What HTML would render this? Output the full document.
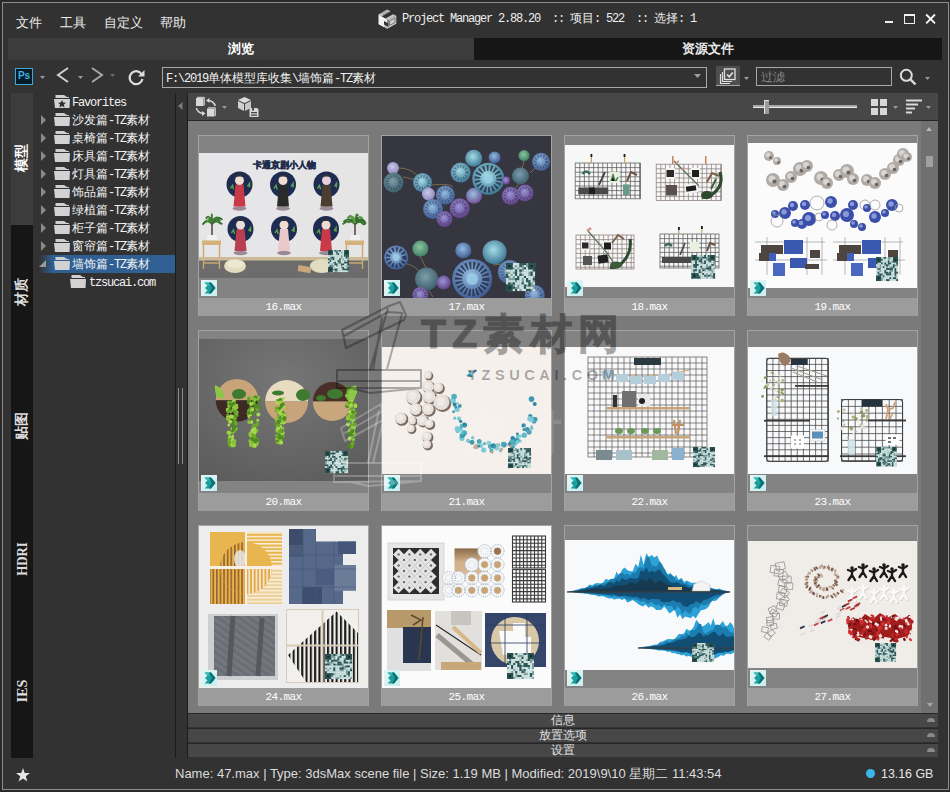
<!DOCTYPE html><html><head><meta charset="utf-8"><style>
*{margin:0;padding:0;box-sizing:border-box}
html,body{width:950px;height:792px;overflow:hidden;background:#2a2a2a}
body{position:relative;font-family:"Liberation Sans",sans-serif}
div{position:absolute}
.m{font-family:"Liberation Mono",monospace;font-size:12px;letter-spacing:-1.2px;white-space:nowrap;line-height:14px}
.m .cj{letter-spacing:0;font-family:"Liberation Sans",sans-serif}
.t{white-space:nowrap}
svg{position:absolute;overflow:visible}
</style></head><body>
<div style="left:2px;top:2px;width:947px;height:788px;border:1px solid #8e8e8e;background:#323232"></div>
<div class="t" style="left:16px;top:14px;width:60px;height:18px;color:#ececec;font-size:13px;line-height:18px">文件</div>
<div class="t" style="left:60px;top:14px;width:60px;height:18px;color:#ececec;font-size:13px;line-height:18px">工具</div>
<div class="t" style="left:104px;top:14px;width:60px;height:18px;color:#ececec;font-size:13px;line-height:18px">自定义</div>
<div class="t" style="left:160px;top:14px;width:60px;height:18px;color:#ececec;font-size:13px;line-height:18px">帮助</div>
<svg style="left:378px;top:9px" width="20" height="20" viewBox="0 0 20 20">
<path d="M0.5 5.5 L9.2 0.5 L12.5 2.2 L3.8 7.3 Z" fill="#d4d4d4"/>
<path d="M3 5.2 L10 1.3 M4.5 6.2 L11.3 2.3" stroke="#777" stroke-width="0.7"/>
<path d="M7.5 9.5 L15 5.2 L18.3 6.8 L10.5 11.3 Z" fill="#c4c4c4"/>
<path d="M0.5 5.5 L9.5 10.7 L9.5 14 L6 12 L6 18.3 L0.5 15.3 Z" fill="#f2f2f2"/>
<path d="M10.5 11.3 L18.3 6.8 L18.3 14.8 L9.2 19.8 L6 18 L6 15.5 L10.5 18 Z" fill="#cfcfcf"/>
<path d="M11.5 12 L17 9 L17 13.5 L11.5 16.5 Z" fill="none" stroke="#666" stroke-width="0.9"/>
<path d="M7.2 16.5 L10 18" stroke="#777" stroke-width="0.7"/>
</svg>
<div class="m" style="left:402px;top:11px;width:400px;height:14px;color:#eeeeee">Project Manager 2.88.20 &nbsp;:: <span class="cj">项目</span>: 522 &nbsp;:: <span class="cj">选择</span>: 1</div>
<div style="left:885px;top:21px;width:8px;height:2px;background:#f0f0f0"></div>
<div style="left:904px;top:14px;width:11px;height:9.5px;border:1.6px solid #f0f0f0;border-top-width:2.6px"></div>
<svg style="left:925px;top:14px" width="11" height="10" viewBox="0 0 11 10"><path d="M1.2 0.5 L10 9.3 M10 0.5 L1.2 9.3" stroke="#f4f4f4" stroke-width="1.9"/></svg>
<div class="t" style="left:8px;top:38px;width:466px;height:22px;background:#3c3c3c;color:#fff;font-weight:bold;font-size:13px;line-height:22px;text-align:center">浏览</div>
<div class="t" style="left:474px;top:38px;width:468px;height:22px;background:#161616;color:#e8e8e8;font-weight:bold;font-size:13px;line-height:22px;text-align:center">资源文件</div>
<div class="t" style="left:15px;top:68px;width:18px;height:17px;border:1.5px solid #3aaad4;background:#061c2a;color:#40b2e0;font-size:10px;font-weight:bold;line-height:14px;text-align:center">Ps</div>
<svg style="left:40px;top:76px" width="5" height="3" viewBox="0 0 5 3"><path d="M0 0 L5 0 L2.5 3 Z" fill="#9a9a9a"/></svg>
<svg style="left:56px;top:67px" width="13" height="16" viewBox="0 0 13 16"><path d="M12 1 L2 8 L12 15" fill="none" stroke="#d0d0d0" stroke-width="2"/></svg>
<svg style="left:78px;top:76px" width="5" height="3" viewBox="0 0 5 3"><path d="M0 0 L5 0 L2.5 3 Z" fill="#9a9a9a"/></svg>
<svg style="left:91px;top:67px" width="13" height="16" viewBox="0 0 13 16"><path d="M1 1 L11 8 L1 15" fill="none" stroke="#a8a8a8" stroke-width="2"/></svg>
<svg style="left:110px;top:74px" width="5" height="3" viewBox="0 0 5 3"><path d="M0 0 L5 0 L2.5 3 Z" fill="#6a6a6a"/></svg>
<svg style="left:128px;top:69px" width="17" height="17" viewBox="0 0 17 17"><path d="M13.5 5 A6.5 6.5 0 1 0 14.5 10" fill="none" stroke="#dcdcdc" stroke-width="2.2"/><path d="M16.5 1 L16.5 7.5 L10 7.5 Z" fill="#dcdcdc"/></svg>
<div style="left:162px;top:67px;width:545px;height:21px;border:1px solid #a8a8a8"></div>
<div class="m" style="left:166px;top:71px;width:400px;height:14px;color:#f0f0f0">F:\2019<span class="cj">单体模型库收集</span>\<span class="cj">墙饰篇</span>-TZ<span class="cj">素材</span></div>
<svg style="left:694px;top:74px" width="7" height="4" viewBox="0 0 7 4"><path d="M0 0 L7 0 L3.5 4 Z" fill="#a0a0a0"/></svg>
<div style="left:716px;top:66px;width:24px;height:20px;background:#4e4e4e;border-bottom:1.5px solid #a8a8a8"></div>
<svg style="left:718px;top:68px" width="20" height="17" viewBox="0 0 20 17">
<rect x="6.5" y="1" width="10.5" height="10.5" fill="none" stroke="#e0e0e0" stroke-width="1.3"/>
<path d="M9 6.5 L11.2 8.7 L14.8 4.5" fill="none" stroke="#e0e0e0" stroke-width="1.7"/>
<path d="M4.5 4 L4.5 13.5 L14 13.5" fill="none" stroke="#e0e0e0" stroke-width="1.2"/>
<path d="M2.5 6 L2.5 15.5 L12 15.5" fill="none" stroke="#e0e0e0" stroke-width="1.2"/>
</svg>
<svg style="left:744px;top:77px" width="5" height="3" viewBox="0 0 5 3"><path d="M0 0 L5 0 L2.5 3 Z" fill="#9a9a9a"/></svg>
<div style="left:756px;top:67px;width:136px;height:19px;border:1px solid #a8a8a8"></div>
<div class="t" style="left:761px;top:69px;width:60px;height:16px;color:#8a8a8a;font-size:12px;line-height:16px">过滤</div>
<svg style="left:899px;top:68px" width="18" height="18" viewBox="0 0 18 18"><circle cx="7.3" cy="7.3" r="5.5" fill="none" stroke="#dcdcdc" stroke-width="2"/><path d="M11.2 11.2 L16.5 16.5" stroke="#dcdcdc" stroke-width="2.4"/></svg>
<svg style="left:925px;top:77px" width="5" height="3" viewBox="0 0 5 3"><path d="M0 0 L5 0 L2.5 3 Z" fill="#9a9a9a"/></svg>
<div style="left:11px;top:93px;width:22px;height:132px;background:#3c3c3c"></div>
<div style="left:11px;top:225px;width:22px;height:533px;background:#161616"></div>
<div class="t" style="left:-18px;top:150px;width:80px;height:16px;line-height:16px;text-align:center;transform:rotate(-90deg);color:#fff;font-size:13.5px;font-weight:bold">模型</div>
<div class="t" style="left:-18px;top:284px;width:80px;height:16px;line-height:16px;text-align:center;transform:rotate(-90deg);color:#ddd;font-size:13.5px;font-weight:bold">材质</div>
<div class="t" style="left:-18px;top:417.5px;width:80px;height:16px;line-height:16px;text-align:center;transform:rotate(-90deg);color:#ddd;font-size:13.5px;font-weight:bold">贴图</div>
<div class="t" style="left:-18px;top:550.5px;width:80px;height:16px;line-height:16px;text-align:center;transform:rotate(-90deg);color:#ddd;font-size:15px;font-weight:bold;font-family:Liberation Serif;transform:rotate(-90deg) scaleX(0.86)">HDRI</div>
<div class="t" style="left:-18px;top:683px;width:80px;height:16px;line-height:16px;text-align:center;transform:rotate(-90deg);color:#ddd;font-size:15px;font-weight:bold;font-family:Liberation Serif;transform:rotate(-90deg) scaleX(0.95)">IES</div>
<div style="left:175px;top:93px;width:1px;height:665px;background:#1c1c1c"></div>
<div style="left:187px;top:93px;width:1px;height:665px;background:#1c1c1c"></div>
<div style="left:178px;top:388px;width:1px;height:76px;background:#8a8a8a"></div>
<div style="left:182px;top:388px;width:1px;height:76px;background:#8a8a8a"></div>
<svg style="left:178px;top:102px" width="5" height="8" viewBox="0 0 5 8"><path d="M4.5 0 L0 4 L4.5 8 Z" fill="#7a7a7a"/></svg>
<div style="left:39px;top:255px;width:136px;height:18px;background:linear-gradient(90deg,rgba(47,95,147,0) 0px,#2f5f93 14px,#2f5f93 100%)"></div>
<svg style="left:54px;top:95px" width="17" height="14" viewBox="0 0 17 14">
<path d="M1.5 0 L10 0 L13 2 L15 2 L15 3 L1.5 3 Z" fill="#cfcfcf"/>
<path d="M0 4 L16 4 L15.5 13 L1 13 Z" fill="#d2d2d2"/><path d="M8 5 L9.2 7.6 L12 7.8 L9.9 9.6 L10.6 12.4 L8 10.9 L5.4 12.4 L6.1 9.6 L4 7.8 L6.8 7.6 Z" fill="#2e2e2e"/></svg>
<div class="m" style="left:72px;top:96px;width:100px;height:14px;color:#f2f2f2">Favorites</div>
<svg style="left:41px;top:115px" width="5" height="10" viewBox="0 0 5 10"><path d="M0 0 L5 5 L0 10 Z" fill="#8a8a8a"/></svg>
<svg style="left:54px;top:113px" width="17" height="14" viewBox="0 0 17 14">
<path d="M1.5 0 L10 0 L13 2 L15 2 L15 3 L1.5 3 Z" fill="#cfcfcf"/>
<path d="M0 4 L16 4 L15.5 13 L1 13 Z" fill="#d2d2d2"/></svg>
<div class="m" style="left:72px;top:113px;width:110px;height:14px;color:#f2f2f2"><span class="cj">沙发篇</span>-TZ<span class="cj">素材</span></div>
<svg style="left:41px;top:133px" width="5" height="10" viewBox="0 0 5 10"><path d="M0 0 L5 5 L0 10 Z" fill="#8a8a8a"/></svg>
<svg style="left:54px;top:131px" width="17" height="14" viewBox="0 0 17 14">
<path d="M1.5 0 L10 0 L13 2 L15 2 L15 3 L1.5 3 Z" fill="#cfcfcf"/>
<path d="M0 4 L16 4 L15.5 13 L1 13 Z" fill="#d2d2d2"/></svg>
<div class="m" style="left:72px;top:131px;width:110px;height:14px;color:#f2f2f2"><span class="cj">桌椅篇</span>-TZ<span class="cj">素材</span></div>
<svg style="left:41px;top:151px" width="5" height="10" viewBox="0 0 5 10"><path d="M0 0 L5 5 L0 10 Z" fill="#8a8a8a"/></svg>
<svg style="left:54px;top:149px" width="17" height="14" viewBox="0 0 17 14">
<path d="M1.5 0 L10 0 L13 2 L15 2 L15 3 L1.5 3 Z" fill="#cfcfcf"/>
<path d="M0 4 L16 4 L15.5 13 L1 13 Z" fill="#d2d2d2"/></svg>
<div class="m" style="left:72px;top:149px;width:110px;height:14px;color:#f2f2f2"><span class="cj">床具篇</span>-TZ<span class="cj">素材</span></div>
<svg style="left:41px;top:169px" width="5" height="10" viewBox="0 0 5 10"><path d="M0 0 L5 5 L0 10 Z" fill="#8a8a8a"/></svg>
<svg style="left:54px;top:167px" width="17" height="14" viewBox="0 0 17 14">
<path d="M1.5 0 L10 0 L13 2 L15 2 L15 3 L1.5 3 Z" fill="#cfcfcf"/>
<path d="M0 4 L16 4 L15.5 13 L1 13 Z" fill="#d2d2d2"/></svg>
<div class="m" style="left:72px;top:167px;width:110px;height:14px;color:#f2f2f2"><span class="cj">灯具篇</span>-TZ<span class="cj">素材</span></div>
<svg style="left:41px;top:187px" width="5" height="10" viewBox="0 0 5 10"><path d="M0 0 L5 5 L0 10 Z" fill="#8a8a8a"/></svg>
<svg style="left:54px;top:185px" width="17" height="14" viewBox="0 0 17 14">
<path d="M1.5 0 L10 0 L13 2 L15 2 L15 3 L1.5 3 Z" fill="#cfcfcf"/>
<path d="M0 4 L16 4 L15.5 13 L1 13 Z" fill="#d2d2d2"/></svg>
<div class="m" style="left:72px;top:185px;width:110px;height:14px;color:#f2f2f2"><span class="cj">饰品篇</span>-TZ<span class="cj">素材</span></div>
<svg style="left:41px;top:205px" width="5" height="10" viewBox="0 0 5 10"><path d="M0 0 L5 5 L0 10 Z" fill="#8a8a8a"/></svg>
<svg style="left:54px;top:203px" width="17" height="14" viewBox="0 0 17 14">
<path d="M1.5 0 L10 0 L13 2 L15 2 L15 3 L1.5 3 Z" fill="#cfcfcf"/>
<path d="M0 4 L16 4 L15.5 13 L1 13 Z" fill="#d2d2d2"/></svg>
<div class="m" style="left:72px;top:203px;width:110px;height:14px;color:#f2f2f2"><span class="cj">绿植篇</span>-TZ<span class="cj">素材</span></div>
<svg style="left:41px;top:223px" width="5" height="10" viewBox="0 0 5 10"><path d="M0 0 L5 5 L0 10 Z" fill="#8a8a8a"/></svg>
<svg style="left:54px;top:221px" width="17" height="14" viewBox="0 0 17 14">
<path d="M1.5 0 L10 0 L13 2 L15 2 L15 3 L1.5 3 Z" fill="#cfcfcf"/>
<path d="M0 4 L16 4 L15.5 13 L1 13 Z" fill="#d2d2d2"/></svg>
<div class="m" style="left:72px;top:221px;width:110px;height:14px;color:#f2f2f2"><span class="cj">柜子篇</span>-TZ<span class="cj">素材</span></div>
<svg style="left:41px;top:241px" width="5" height="10" viewBox="0 0 5 10"><path d="M0 0 L5 5 L0 10 Z" fill="#8a8a8a"/></svg>
<svg style="left:54px;top:239px" width="17" height="14" viewBox="0 0 17 14">
<path d="M1.5 0 L10 0 L13 2 L15 2 L15 3 L1.5 3 Z" fill="#cfcfcf"/>
<path d="M0 4 L16 4 L15.5 13 L1 13 Z" fill="#d2d2d2"/></svg>
<div class="m" style="left:72px;top:239px;width:110px;height:14px;color:#f2f2f2"><span class="cj">窗帘篇</span>-TZ<span class="cj">素材</span></div>
<svg style="left:39px;top:260px" width="7" height="7" viewBox="0 0 7 7"><path d="M7 0 L7 7 L0 7 Z" fill="#9a9a9a"/></svg>
<svg style="left:54px;top:257px" width="17" height="14" viewBox="0 0 17 14">
<path d="M1.5 0 L10 0 L13 2 L15 2 L15 3 L1.5 3 Z" fill="#cfcfcf"/>
<path d="M0 4 L16 4 L15.5 13 L1 13 Z" fill="#d2d2d2"/></svg>
<div class="m" style="left:72px;top:257px;width:110px;height:14px;color:#f2f2f2"><span class="cj">墙饰篇</span>-TZ<span class="cj">素材</span></div>
<svg style="left:70px;top:275px" width="17" height="14" viewBox="0 0 17 14">
<path d="M1.5 0 L10 0 L13 2 L15 2 L15 3 L1.5 3 Z" fill="#cfcfcf"/>
<path d="M0 4 L16 4 L15.5 13 L1 13 Z" fill="#d2d2d2"/></svg>
<div class="m" style="left:89px;top:276px;width:100px;height:14px;color:#f2f2f2">tzsucai.com</div>
<div style="left:188px;top:93px;width:750px;height:28px;background:#474747;border-bottom:1px solid #262626"></div>
<svg style="left:195px;top:96px" width="22" height="22" viewBox="0 0 22 22">
<rect x="1" y="2" width="7.5" height="8" fill="#d8d8d8"/><path d="M2 1.3 L9.3 1.3 L9.3 9.5" fill="none" stroke="#d8d8d8" stroke-width="1"/>
<rect x="12" y="12.5" width="7.5" height="8" fill="#d8d8d8"/><path d="M13 11.8 L20.3 11.8 L20.3 20" fill="none" stroke="#d8d8d8" stroke-width="1"/>
<path d="M20 10 A7 6 0 0 0 13 4.5" fill="none" stroke="#d8d8d8" stroke-width="1.6"/><path d="M11 4.5 L14.5 2 L14.5 7 Z" fill="#d8d8d8"/>
<path d="M1.5 12 A7 6 0 0 0 8.5 17.5" fill="none" stroke="#d8d8d8" stroke-width="1.6"/><path d="M10.5 17.5 L7 15 L7 20 Z" fill="#d8d8d8"/>
</svg>
<svg style="left:222px;top:106px" width="5" height="3" viewBox="0 0 5 3"><path d="M0 0 L5 0 L2.5 3 Z" fill="#9a9a9a"/></svg>
<svg style="left:237px;top:96px" width="22" height="22" viewBox="0 0 22 22">
<path d="M7.5 1 L14 4 L7.5 7 L1 4 Z" fill="#dcdcdc"/>
<path d="M1 5 L7 8 L7 15 L1 12 Z" fill="#d0d0d0"/>
<path d="M8 8 L14 5 L14 12 L8 15 Z" fill="#c8c8c8"/>
<path d="M12.5 12 L20 12 L21.5 13.5 L21.5 21 L12.5 21 Z" fill="#d8d8d8"/>
<rect x="14" y="16" width="6" height="1.3" fill="#474747"/><rect x="14" y="18.5" width="6" height="1.3" fill="#474747"/>
<rect x="15" y="12" width="2" height="2.5" fill="#474747"/>
</svg>
<div style="left:753px;top:105px;width:104px;height:2px;background:#a8a8a8"></div>
<div style="left:753px;top:107px;width:104px;height:1px;background:#eeeeee"></div>
<div style="left:764px;top:100px;width:5px;height:14px;background:#9a9a9a;border-left:1px solid #e0e0e0;border-top:1px solid #e0e0e0"></div>
<svg style="left:871px;top:99px" width="16" height="16" viewBox="0 0 16 16"><rect x="0" y="0" width="7" height="7" fill="#d8d8d8"/><rect x="9" y="0" width="7" height="7" fill="#d8d8d8"/><rect x="0" y="9" width="7" height="7" fill="#d8d8d8"/><rect x="9" y="9" width="7" height="7" fill="#d8d8d8"/></svg>
<svg style="left:893px;top:106px" width="5" height="3" viewBox="0 0 5 3"><path d="M0 0 L5 0 L2.5 3 Z" fill="#9a9a9a"/></svg>
<svg style="left:906px;top:99px" width="16" height="15" viewBox="0 0 16 15"><rect x="0" y="0.5" width="16" height="2" fill="#d8d8d8"/><rect x="0" y="4.5" width="12" height="2" fill="#d8d8d8"/><rect x="0" y="8.5" width="9" height="2" fill="#d8d8d8"/><rect x="0" y="12.5" width="6" height="2" fill="#d8d8d8"/></svg>
<svg style="left:926px;top:106px" width="5" height="3" viewBox="0 0 5 3"><path d="M0 0 L5 0 L2.5 3 Z" fill="#9a9a9a"/></svg>
<div style="left:188px;top:121px;width:750px;height:592px;background:#7a7a7a"></div>
<div style="left:921px;top:121px;width:17px;height:592px;background:#707070"></div>
<svg style="left:926px;top:127px" width="6" height="4" viewBox="0 0 6 4"><path d="M0 4 L3 0 L6 4 Z" fill="#b8b8b8"/></svg>
<div style="left:926px;top:156px;width:7px;height:11px;background:#a0a0a0"></div>
<svg style="left:927px;top:703px" width="6" height="4" viewBox="0 0 6 4"><path d="M0 0 L6 0 L3 4 Z" fill="#a8a8a8"/></svg>
<div style="left:198px;top:135px;width:171px;height:181px;background:#838383;border:1px solid #a3a3a3;border-bottom:none;overflow:hidden"><svg style="left:0;top:0" width="169" height="162" viewBox="1 1 169 162"><rect x="1" y="18" width="170" height="106" fill="#e6e6e8"/><rect x="100" y="18" width="70" height="106" fill="#e4e4e4" opacity="0.6"/><rect x="1" y="122" width="170" height="2" fill="#b49a78"/><rect x="1" y="124" width="170" height="19" fill="#6c6c6c"/><text x="86" y="33" font-size="9" font-weight="bold" fill="#1f2c4c" stroke="#1f2c4c" stroke-width="0.5" text-anchor="middle" font-family="Liberation Sans">卡通京剧小人物</text><circle cx="41.5" cy="49.5" r="13" fill="#1e2c52"/><ellipse cx="41.5" cy="73.5" rx="7" ry="2.2" fill="#9a8a98"/><path d="M37.5 49.5 L45.5 49.5 L47.5 71.5 L35.5 71.5 Z" fill="#c83a48"/><circle cx="41.5" cy="45.5" r="4.5" fill="#f0dcd0"/><path d="M37.5 41.5 Q41.5 37.5 45.5 41.5" fill="#333"/><path d="M32.5 53.5 l2 -3 l1 4 M49.5 51.5 l2 -3 l0 4" stroke="#5aa050" stroke-width="1.5"/><circle cx="85" cy="49.5" r="13" fill="#1e2c52"/><ellipse cx="85" cy="73.5" rx="7" ry="2.2" fill="#9a8a98"/><path d="M81 49.5 L89 49.5 L91 71.5 L79 71.5 Z" fill="#2a2a2a"/><circle cx="85" cy="45.5" r="4.5" fill="#f0dcd0"/><path d="M81 41.5 Q85 37.5 89 41.5" fill="#333"/><path d="M76 53.5 l2 -3 l1 4 M93 51.5 l2 -3 l0 4" stroke="#5aa050" stroke-width="1.5"/><circle cx="128.5" cy="49.5" r="13" fill="#1e2c52"/><ellipse cx="128.5" cy="73.5" rx="7" ry="2.2" fill="#9a8a98"/><path d="M124.5 49.5 L132.5 49.5 L134.5 71.5 L122.5 71.5 Z" fill="#4a3e30"/><circle cx="128.5" cy="45.5" r="4.5" fill="#e8d0d8"/><path d="M124.5 41.5 Q128.5 37.5 132.5 41.5" fill="#333"/><path d="M119.5 53.5 l2 -3 l1 4 M136.5 51.5 l2 -3 l0 4" stroke="#5aa050" stroke-width="1.5"/><circle cx="42.5" cy="94" r="13" fill="#1e2c52"/><ellipse cx="42.5" cy="118" rx="7" ry="2.2" fill="#9a8a98"/><path d="M38.5 94 L46.5 94 L48.5 116 L36.5 116 Z" fill="#b84050"/><circle cx="42.5" cy="90" r="4.5" fill="#e8e0d8"/><path d="M38.5 86 Q42.5 82 46.5 86" fill="#333"/><path d="M33.5 98 l2 -3 l1 4 M50.5 96 l2 -3 l0 4" stroke="#5aa050" stroke-width="1.5"/><circle cx="86" cy="94" r="13" fill="#1e2c52"/><ellipse cx="86" cy="118" rx="7" ry="2.2" fill="#9a8a98"/><path d="M82 94 L90 94 L92 116 L80 116 Z" fill="#e8c8c8"/><circle cx="86" cy="90" r="4.5" fill="#f0dcd0"/><path d="M82 86 Q86 82 90 86" fill="#333"/><path d="M77 98 l2 -3 l1 4 M94 96 l2 -3 l0 4" stroke="#5aa050" stroke-width="1.5"/><circle cx="128" cy="94" r="13" fill="#1e2c52"/><ellipse cx="128" cy="118" rx="7" ry="2.2" fill="#9a8a98"/><path d="M124 94 L132 94 L134 116 L122 116 Z" fill="#c83a48"/><circle cx="128" cy="90" r="4.5" fill="#f0dcd0"/><path d="M124 86 Q128 82 132 86" fill="#333"/><path d="M119 98 l2 -3 l1 4 M136 96 l2 -3 l0 4" stroke="#5aa050" stroke-width="1.5"/><path d="M14 89 Q9.9 82.3 5.8 88.3" stroke="#3e7a34" stroke-width="1.8" fill="none"/><path d="M14 89 Q18.4 83.1 22.7 89.1" stroke="#2e6a2a" stroke-width="1.8" fill="none"/><path d="M14 89 Q13.9 75.3 13.7 81.3" stroke="#3e7a34" stroke-width="1.8" fill="none"/><path d="M14 89 Q17.2 79.6 20.4 85.6" stroke="#5a9a48" stroke-width="1.8" fill="none"/><path d="M14 89 Q17.6 81.4 21.3 87.4" stroke="#3e7a34" stroke-width="1.8" fill="none"/><path d="M14 89 Q9.3 83.6 4.5 89.6" stroke="#2e6a2a" stroke-width="1.8" fill="none"/><path d="M14 89 Q12.4 79.3 10.8 85.3" stroke="#5a9a48" stroke-width="1.8" fill="none"/><path d="M14 89 Q19.2 78.8 24.3 84.8" stroke="#2e6a2a" stroke-width="1.8" fill="none"/><path d="M14 89 Q15.7 81.0 17.4 87.0" stroke="#2e6a2a" stroke-width="1.8" fill="none"/><path d="M14 89 Q16.5 80.0 19.0 86.0" stroke="#5a9a48" stroke-width="1.8" fill="none"/><path d="M14 89 Q17.6 78.6 21.3 84.6" stroke="#3e7a34" stroke-width="1.8" fill="none"/><path d="M14 89 Q10.9 81.8 7.8 87.8" stroke="#5a9a48" stroke-width="1.8" fill="none"/><path d="M14 89 Q11.0 77.8 8.0 83.8" stroke="#3e7a34" stroke-width="1.8" fill="none"/><path d="M14 89 Q12.7 79.1 11.4 85.1" stroke="#3e7a34" stroke-width="1.8" fill="none"/><path d="M14 89 Q19.1 83.4 24.3 89.4" stroke="#3e7a34" stroke-width="1.8" fill="none"/><path d="M14 89 Q18.1 80.0 22.2 86.0" stroke="#3e7a34" stroke-width="1.8" fill="none"/><rect x="13.2" y="88" width="1.6" height="12" fill="#5a5040"/><rect x="9" y="100" width="10" height="5.5" fill="#f0f0f0"/><rect x="4" y="105.5" width="19" height="4.5" fill="#d4b27a"/><path d="M5.5 110 L5.5 134 M21.5 110 L21.5 134 M5.5 128 L21.5 128" stroke="#caa870" stroke-width="1.4"/><path d="M157 89 Q160.9 78.1 164.9 84.1" stroke="#5a9a48" stroke-width="1.8" fill="none"/><path d="M157 89 Q157.6 79.4 158.2 85.4" stroke="#2e6a2a" stroke-width="1.8" fill="none"/><path d="M157 89 Q153.4 77.3 149.8 83.3" stroke="#2e6a2a" stroke-width="1.8" fill="none"/><path d="M157 89 Q158.5 78.6 159.9 84.6" stroke="#2e6a2a" stroke-width="1.8" fill="none"/><path d="M157 89 Q161.3 83.7 165.6 89.7" stroke="#3e7a34" stroke-width="1.8" fill="none"/><path d="M157 89 Q151.3 81.0 145.5 87.0" stroke="#2e6a2a" stroke-width="1.8" fill="none"/><path d="M157 89 Q153.7 81.9 150.5 87.9" stroke="#2e6a2a" stroke-width="1.8" fill="none"/><path d="M157 89 Q162.0 84.0 167.0 90.0" stroke="#2e6a2a" stroke-width="1.8" fill="none"/><path d="M157 89 Q150.8 83.4 144.6 89.4" stroke="#3e7a34" stroke-width="1.8" fill="none"/><path d="M157 89 Q162.5 82.6 168.0 88.6" stroke="#2e6a2a" stroke-width="1.8" fill="none"/><path d="M157 89 Q161.9 82.7 166.7 88.7" stroke="#3e7a34" stroke-width="1.8" fill="none"/><path d="M157 89 Q161.8 83.4 166.6 89.4" stroke="#3e7a34" stroke-width="1.8" fill="none"/><path d="M157 89 Q162.1 80.9 167.2 86.9" stroke="#2e6a2a" stroke-width="1.8" fill="none"/><path d="M157 89 Q158.4 75.2 159.9 81.2" stroke="#3e7a34" stroke-width="1.8" fill="none"/><path d="M157 89 Q153.7 77.3 150.4 83.3" stroke="#5a9a48" stroke-width="1.8" fill="none"/><path d="M157 89 Q155.5 78.3 153.9 84.3" stroke="#5a9a48" stroke-width="1.8" fill="none"/><rect x="156.2" y="88" width="1.6" height="12" fill="#5a5040"/><rect x="152" y="100" width="10" height="5.5" fill="#f0f0f0"/><rect x="147" y="105.5" width="19" height="4.5" fill="#d4b27a"/><path d="M148.5 110 L148.5 134 M164.5 110 L164.5 134 M148.5 128 L164.5 128" stroke="#caa870" stroke-width="1.4"/><rect x="1" y="122" width="170" height="3.5" fill="#cdbb98"/><ellipse cx="37" cy="131" rx="11" ry="7" fill="#e2dcc0"/><ellipse cx="37" cy="129" rx="9" ry="4" fill="#eee8d0"/><ellipse cx="124" cy="131" rx="12" ry="7" fill="#e2dcc0"/><rect x="100" y="131" width="13" height="6" fill="#c8a878" transform="rotate(10 106 134)"/><rect x="130" y="115" width="21" height="22" fill="#7a9e9c"/><rect x="130.00" y="115.00" width="1.72" height="1.79" fill="#d2e4e2"/><rect x="130.00" y="116.69" width="1.72" height="1.79" fill="#d2e4e2"/><rect x="130.00" y="118.38" width="1.72" height="1.79" fill="#d2e4e2"/><rect x="130.00" y="120.08" width="1.72" height="1.79" fill="#d2e4e2"/><rect x="130.00" y="121.77" width="1.72" height="1.79" fill="#d2e4e2"/><rect x="130.00" y="123.46" width="1.72" height="1.79" fill="#2a5454"/><rect x="130.00" y="125.15" width="1.72" height="1.79" fill="#d2e4e2"/><rect x="130.00" y="126.85" width="1.72" height="1.79" fill="#2a5454"/><rect x="130.00" y="128.54" width="1.72" height="1.79" fill="#d2e4e2"/><rect x="130.00" y="130.23" width="1.72" height="1.79" fill="#d2e4e2"/><rect x="130.00" y="131.92" width="1.72" height="1.79" fill="#d2e4e2"/><rect x="130.00" y="133.62" width="1.72" height="1.79" fill="#d2e4e2"/><rect x="130.00" y="135.31" width="1.72" height="1.79" fill="#2a5454"/><rect x="131.62" y="115.00" width="1.72" height="1.79" fill="#d2e4e2"/><rect x="131.62" y="120.08" width="1.72" height="1.79" fill="#d2e4e2"/><rect x="131.62" y="125.15" width="1.72" height="1.79" fill="#2a5454"/><rect x="131.62" y="126.85" width="1.72" height="1.79" fill="#d2e4e2"/><rect x="131.62" y="128.54" width="1.72" height="1.79" fill="#d2e4e2"/><rect x="131.62" y="130.23" width="1.72" height="1.79" fill="#2a5454"/><rect x="131.62" y="131.92" width="1.72" height="1.79" fill="#d2e4e2"/><rect x="131.62" y="133.62" width="1.72" height="1.79" fill="#d2e4e2"/><rect x="131.62" y="135.31" width="1.72" height="1.79" fill="#d2e4e2"/><rect x="133.23" y="115.00" width="1.72" height="1.79" fill="#d2e4e2"/><rect x="133.23" y="118.38" width="1.72" height="1.79" fill="#d2e4e2"/><rect x="133.23" y="120.08" width="1.72" height="1.79" fill="#d2e4e2"/><rect x="133.23" y="121.77" width="1.72" height="1.79" fill="#2a5454"/><rect x="133.23" y="125.15" width="1.72" height="1.79" fill="#d2e4e2"/><rect x="133.23" y="126.85" width="1.72" height="1.79" fill="#d2e4e2"/><rect x="133.23" y="133.62" width="1.72" height="1.79" fill="#2a5454"/><rect x="133.23" y="135.31" width="1.72" height="1.79" fill="#d2e4e2"/><rect x="134.85" y="115.00" width="1.72" height="1.79" fill="#d2e4e2"/><rect x="134.85" y="116.69" width="1.72" height="1.79" fill="#d2e4e2"/><rect x="134.85" y="118.38" width="1.72" height="1.79" fill="#d2e4e2"/><rect x="134.85" y="120.08" width="1.72" height="1.79" fill="#d2e4e2"/><rect x="134.85" y="121.77" width="1.72" height="1.79" fill="#2a5454"/><rect x="134.85" y="123.46" width="1.72" height="1.79" fill="#2a5454"/><rect x="134.85" y="125.15" width="1.72" height="1.79" fill="#d2e4e2"/><rect x="134.85" y="128.54" width="1.72" height="1.79" fill="#d2e4e2"/><rect x="134.85" y="131.92" width="1.72" height="1.79" fill="#d2e4e2"/><rect x="134.85" y="135.31" width="1.72" height="1.79" fill="#d2e4e2"/><rect x="136.46" y="115.00" width="1.72" height="1.79" fill="#2a5454"/><rect x="136.46" y="116.69" width="1.72" height="1.79" fill="#d2e4e2"/><rect x="136.46" y="118.38" width="1.72" height="1.79" fill="#d2e4e2"/><rect x="136.46" y="120.08" width="1.72" height="1.79" fill="#d2e4e2"/><rect x="136.46" y="121.77" width="1.72" height="1.79" fill="#d2e4e2"/><rect x="136.46" y="123.46" width="1.72" height="1.79" fill="#d2e4e2"/><rect x="136.46" y="125.15" width="1.72" height="1.79" fill="#d2e4e2"/><rect x="136.46" y="126.85" width="1.72" height="1.79" fill="#2a5454"/><rect x="136.46" y="128.54" width="1.72" height="1.79" fill="#2a5454"/><rect x="136.46" y="130.23" width="1.72" height="1.79" fill="#d2e4e2"/><rect x="136.46" y="131.92" width="1.72" height="1.79" fill="#d2e4e2"/><rect x="136.46" y="133.62" width="1.72" height="1.79" fill="#2a5454"/><rect x="138.08" y="116.69" width="1.72" height="1.79" fill="#2a5454"/><rect x="138.08" y="120.08" width="1.72" height="1.79" fill="#d2e4e2"/><rect x="138.08" y="121.77" width="1.72" height="1.79" fill="#d2e4e2"/><rect x="138.08" y="123.46" width="1.72" height="1.79" fill="#d2e4e2"/><rect x="138.08" y="125.15" width="1.72" height="1.79" fill="#d2e4e2"/><rect x="138.08" y="126.85" width="1.72" height="1.79" fill="#d2e4e2"/><rect x="138.08" y="128.54" width="1.72" height="1.79" fill="#2a5454"/><rect x="138.08" y="131.92" width="1.72" height="1.79" fill="#d2e4e2"/><rect x="138.08" y="133.62" width="1.72" height="1.79" fill="#2a5454"/><rect x="139.69" y="116.69" width="1.72" height="1.79" fill="#d2e4e2"/><rect x="139.69" y="118.38" width="1.72" height="1.79" fill="#2a5454"/><rect x="139.69" y="120.08" width="1.72" height="1.79" fill="#d2e4e2"/><rect x="139.69" y="121.77" width="1.72" height="1.79" fill="#d2e4e2"/><rect x="139.69" y="123.46" width="1.72" height="1.79" fill="#d2e4e2"/><rect x="139.69" y="125.15" width="1.72" height="1.79" fill="#2a5454"/><rect x="139.69" y="128.54" width="1.72" height="1.79" fill="#d2e4e2"/><rect x="139.69" y="130.23" width="1.72" height="1.79" fill="#d2e4e2"/><rect x="139.69" y="131.92" width="1.72" height="1.79" fill="#d2e4e2"/><rect x="139.69" y="133.62" width="1.72" height="1.79" fill="#d2e4e2"/><rect x="139.69" y="135.31" width="1.72" height="1.79" fill="#d2e4e2"/><rect x="141.31" y="115.00" width="1.72" height="1.79" fill="#2a5454"/><rect x="141.31" y="116.69" width="1.72" height="1.79" fill="#d2e4e2"/><rect x="141.31" y="118.38" width="1.72" height="1.79" fill="#d2e4e2"/><rect x="141.31" y="120.08" width="1.72" height="1.79" fill="#d2e4e2"/><rect x="141.31" y="121.77" width="1.72" height="1.79" fill="#d2e4e2"/><rect x="141.31" y="123.46" width="1.72" height="1.79" fill="#2a5454"/><rect x="141.31" y="126.85" width="1.72" height="1.79" fill="#2a5454"/><rect x="141.31" y="128.54" width="1.72" height="1.79" fill="#d2e4e2"/><rect x="141.31" y="130.23" width="1.72" height="1.79" fill="#d2e4e2"/><rect x="141.31" y="131.92" width="1.72" height="1.79" fill="#d2e4e2"/><rect x="141.31" y="133.62" width="1.72" height="1.79" fill="#d2e4e2"/><rect x="141.31" y="135.31" width="1.72" height="1.79" fill="#d2e4e2"/><rect x="142.92" y="115.00" width="1.72" height="1.79" fill="#d2e4e2"/><rect x="142.92" y="118.38" width="1.72" height="1.79" fill="#d2e4e2"/><rect x="142.92" y="123.46" width="1.72" height="1.79" fill="#d2e4e2"/><rect x="142.92" y="125.15" width="1.72" height="1.79" fill="#d2e4e2"/><rect x="142.92" y="126.85" width="1.72" height="1.79" fill="#d2e4e2"/><rect x="142.92" y="128.54" width="1.72" height="1.79" fill="#2a5454"/><rect x="142.92" y="133.62" width="1.72" height="1.79" fill="#d2e4e2"/><rect x="142.92" y="135.31" width="1.72" height="1.79" fill="#d2e4e2"/><rect x="144.54" y="115.00" width="1.72" height="1.79" fill="#d2e4e2"/><rect x="144.54" y="116.69" width="1.72" height="1.79" fill="#d2e4e2"/><rect x="144.54" y="118.38" width="1.72" height="1.79" fill="#d2e4e2"/><rect x="144.54" y="120.08" width="1.72" height="1.79" fill="#d2e4e2"/><rect x="144.54" y="121.77" width="1.72" height="1.79" fill="#d2e4e2"/><rect x="144.54" y="125.15" width="1.72" height="1.79" fill="#d2e4e2"/><rect x="144.54" y="126.85" width="1.72" height="1.79" fill="#d2e4e2"/><rect x="144.54" y="128.54" width="1.72" height="1.79" fill="#2a5454"/><rect x="144.54" y="130.23" width="1.72" height="1.79" fill="#d2e4e2"/><rect x="144.54" y="131.92" width="1.72" height="1.79" fill="#2a5454"/><rect x="144.54" y="133.62" width="1.72" height="1.79" fill="#2a5454"/><rect x="144.54" y="135.31" width="1.72" height="1.79" fill="#d2e4e2"/><rect x="146.15" y="115.00" width="1.72" height="1.79" fill="#d2e4e2"/><rect x="146.15" y="116.69" width="1.72" height="1.79" fill="#2a5454"/><rect x="146.15" y="118.38" width="1.72" height="1.79" fill="#2a5454"/><rect x="146.15" y="120.08" width="1.72" height="1.79" fill="#2a5454"/><rect x="146.15" y="121.77" width="1.72" height="1.79" fill="#d2e4e2"/><rect x="146.15" y="123.46" width="1.72" height="1.79" fill="#d2e4e2"/><rect x="146.15" y="126.85" width="1.72" height="1.79" fill="#2a5454"/><rect x="146.15" y="128.54" width="1.72" height="1.79" fill="#d2e4e2"/><rect x="146.15" y="130.23" width="1.72" height="1.79" fill="#d2e4e2"/><rect x="146.15" y="131.92" width="1.72" height="1.79" fill="#d2e4e2"/><rect x="146.15" y="133.62" width="1.72" height="1.79" fill="#2a5454"/><rect x="146.15" y="135.31" width="1.72" height="1.79" fill="#d2e4e2"/><rect x="147.77" y="115.00" width="1.72" height="1.79" fill="#d2e4e2"/><rect x="147.77" y="116.69" width="1.72" height="1.79" fill="#d2e4e2"/><rect x="147.77" y="118.38" width="1.72" height="1.79" fill="#d2e4e2"/><rect x="147.77" y="120.08" width="1.72" height="1.79" fill="#2a5454"/><rect x="147.77" y="121.77" width="1.72" height="1.79" fill="#2a5454"/><rect x="147.77" y="123.46" width="1.72" height="1.79" fill="#d2e4e2"/><rect x="147.77" y="125.15" width="1.72" height="1.79" fill="#d2e4e2"/><rect x="147.77" y="126.85" width="1.72" height="1.79" fill="#2a5454"/><rect x="147.77" y="128.54" width="1.72" height="1.79" fill="#d2e4e2"/><rect x="147.77" y="131.92" width="1.72" height="1.79" fill="#d2e4e2"/><rect x="147.77" y="133.62" width="1.72" height="1.79" fill="#2a5454"/><rect x="147.77" y="135.31" width="1.72" height="1.79" fill="#d2e4e2"/><rect x="149.38" y="116.69" width="1.72" height="1.79" fill="#2a5454"/><rect x="149.38" y="118.38" width="1.72" height="1.79" fill="#d2e4e2"/><rect x="149.38" y="120.08" width="1.72" height="1.79" fill="#2a5454"/><rect x="149.38" y="125.15" width="1.72" height="1.79" fill="#2a5454"/><rect x="149.38" y="126.85" width="1.72" height="1.79" fill="#2a5454"/><rect x="149.38" y="128.54" width="1.72" height="1.79" fill="#2a5454"/><rect x="149.38" y="131.92" width="1.72" height="1.79" fill="#2a5454"/><rect x="149.38" y="133.62" width="1.72" height="1.79" fill="#2a5454"/><rect x="130.00" y="115.00" width="4.85" height="5.08" fill="#2a5050"/><rect x="131.62" y="116.69" width="1.62" height="1.69" fill="#0e2e2e"/><rect x="146.15" y="115.00" width="4.85" height="5.08" fill="#2a5050"/><rect x="147.77" y="116.69" width="1.62" height="1.69" fill="#0e2e2e"/><rect x="130.00" y="131.92" width="4.85" height="5.08" fill="#2a5050"/><rect x="131.62" y="133.62" width="1.62" height="1.69" fill="#0e2e2e"/></svg><div style="left:2px;top:144px;width:16px;height:16px;background:linear-gradient(135deg,#e6f6f6,#c6eeee)"><svg style="left:0;top:0" width="16" height="16" viewBox="0 0 16 16">
<path d="M3.5 2.5 L10 2.5 L14.5 8 L10 13.5 L3.5 13.5 L6.5 10.5 L4 8 L6.5 5.5 Z" fill="#1a9e9e"/>
<path d="M8 2.5 L10 2.5 L14.5 8 L10 13.5 L8 13.5 L11 8 Z" fill="#0b6f72"/>
<path d="M3.5 2.5 L6.5 5.5 L9 5.5 L7 2.5 Z" fill="#2fc0bd"/>
</svg></div><div style="left:-1px;top:162px;width:171px;height:18px;background:#9c9c9c;border-left:1px solid #a3a3a3;border-right:1px solid #a3a3a3"></div><div class="m" style="left:0;top:164.5px;width:169px;text-align:center;color:#fff;line-height:12px;font-size:11px;letter-spacing:-0.6px">16.max</div></div>
<div style="left:381px;top:135px;width:171px;height:181px;background:#838383;border:1px solid #a3a3a3;border-bottom:none;overflow:hidden"><svg style="left:0;top:0" width="169" height="162" viewBox="1 1 169 162"><defs><radialGradient id="g17cy" cx="0.45" cy="0.4" r="0.65"><stop offset="0" stop-color="#a4dce6"/><stop offset="1" stop-color="#36708e"/></radialGradient><radialGradient id="g17bl" cx="0.45" cy="0.4" r="0.65"><stop offset="0" stop-color="#94bce0"/><stop offset="1" stop-color="#3a548e"/></radialGradient><radialGradient id="g17pu" cx="0.45" cy="0.4" r="0.65"><stop offset="0" stop-color="#9a94d4"/><stop offset="1" stop-color="#5e3a84"/></radialGradient><radialGradient id="g17gr" cx="0.45" cy="0.4" r="0.65"><stop offset="0" stop-color="#8cc69a"/><stop offset="1" stop-color="#3a7a64"/></radialGradient><radialGradient id="g17tg" cx="0.45" cy="0.4" r="0.65"><stop offset="0" stop-color="#7c9eaa"/><stop offset="1" stop-color="#3a5a68"/></radialGradient><radialGradient id="g17lv" cx="0.45" cy="0.4" r="0.65"><stop offset="0" stop-color="#ccc8ea"/><stop offset="1" stop-color="#8c84bc"/></radialGradient><radialGradient id="g17bp" cx="0.45" cy="0.4" r="0.65"><stop offset="0" stop-color="#98c4de"/><stop offset="1" stop-color="#6e4492"/></radialGradient></defs><rect x="0" y="0" width="171" height="164" fill="#35363f"/><path d="M18 33 Q30 33 38 42 M22 42 L36 45 M50 50 Q70 48 72 52 M98 56 Q110 52 100 50 M139 42 L143 26 M149 38 L157 30 M134 54 L138 48 M39 121 L45 133 M22 128 Q36 130 40 140 M112 130 L130 128 M44 150 L52 162" stroke="#7a6a48" stroke-width="1" fill="none"/><circle cx="12" cy="33" r="6" fill="url(#g17lv)"/><circle cx="12.5" cy="47.5" r="10" fill="url(#g17tg)"/><circle cx="12.5" cy="47.5" r="6.2" fill="none" stroke="#1e2a40" stroke-width="3.0" stroke-dasharray="1.2 1.6" opacity="0.45"/><circle cx="41.5" cy="47.5" r="9.5" fill="url(#g17cy)"/><circle cx="41.5" cy="47.5" r="5.9" fill="none" stroke="#1e2a40" stroke-width="2.9" stroke-dasharray="1.2 1.6" opacity="0.45"/><circle cx="47.4" cy="59" r="6.5" fill="url(#g17lv)"/><circle cx="64.4" cy="60" r="9.5" fill="url(#g17bl)"/><circle cx="64.4" cy="60" r="5.9" fill="none" stroke="#1e2a40" stroke-width="2.9" stroke-dasharray="1.2 1.6" opacity="0.45"/><circle cx="52" cy="74" r="10" fill="url(#g17bl)"/><circle cx="52" cy="74" r="6.2" fill="none" stroke="#1e2a40" stroke-width="3.0" stroke-dasharray="1.2 1.6" opacity="0.45"/><circle cx="78.7" cy="73.3" r="10" fill="url(#g17pu)"/><circle cx="78.7" cy="73.3" r="6.2" fill="none" stroke="#1e2a40" stroke-width="3.0" stroke-dasharray="1.2 1.6" opacity="0.45"/><circle cx="79.6" cy="37.6" r="10" fill="url(#g17cy)"/><circle cx="79.6" cy="37.6" r="6.2" fill="none" stroke="#1e2a40" stroke-width="3.0" stroke-dasharray="1.2 1.6" opacity="0.45"/><circle cx="92.7" cy="23.3" r="8.5" fill="url(#g17cy)"/><circle cx="113.6" cy="22.4" r="6" fill="url(#g17bl)"/><circle cx="93" cy="60.8" r="8" fill="url(#g17bp)"/><circle cx="107.3" cy="43.8" r="16" fill="url(#g17cy)"/><circle cx="107.3" cy="43.8" r="10.9" fill="none" stroke="#1e2840" stroke-width="5.8" stroke-dasharray="2 1.8" opacity="0.75"/><circle cx="107.3" cy="43.8" r="4.8" fill="#9ad0e8" opacity="0.8"/><circle cx="125" cy="45.6" r="4" fill="url(#g17pu)"/><circle cx="143" cy="20.6" r="5.5" fill="url(#g17gr)"/><circle cx="139.5" cy="41" r="8.5" fill="url(#g17tg)"/><circle cx="160" cy="26.8" r="9" fill="url(#g17bl)"/><circle cx="160" cy="26.8" r="5.6" fill="none" stroke="#1e2a40" stroke-width="2.7" stroke-dasharray="1.2 1.6" opacity="0.45"/><circle cx="129.7" cy="60.8" r="9" fill="url(#g17pu)"/><circle cx="129.7" cy="60.8" r="5.6" fill="none" stroke="#1e2a40" stroke-width="2.7" stroke-dasharray="1.2 1.6" opacity="0.45"/><circle cx="144" cy="58" r="8.5" fill="url(#g17pu)"/><circle cx="144" cy="58" r="5.3" fill="none" stroke="#1e2a40" stroke-width="2.5" stroke-dasharray="1.2 1.6" opacity="0.45"/><circle cx="63.5" cy="84" r="8" fill="url(#g17pu)"/><circle cx="63.5" cy="84" r="5.0" fill="none" stroke="#1e2a40" stroke-width="2.4" stroke-dasharray="1.2 1.6" opacity="0.45"/><circle cx="15.2" cy="122.6" r="12" fill="url(#g17bl)"/><circle cx="15.2" cy="122.6" r="8.2" fill="none" stroke="#1e2840" stroke-width="4.3" stroke-dasharray="2 1.8" opacity="0.75"/><circle cx="15.2" cy="122.6" r="3.6" fill="#9ad0e8" opacity="0.8"/><circle cx="39.4" cy="113.6" r="8" fill="url(#g17gr)"/><circle cx="45.6" cy="144" r="11.5" fill="url(#g17tg)"/><circle cx="82.3" cy="115.4" r="8" fill="url(#g17bl)"/><circle cx="113.6" cy="117.2" r="12" fill="url(#g17cy)"/><circle cx="128.8" cy="136.9" r="12" fill="url(#g17bl)"/><circle cx="128.8" cy="136.9" r="7.4" fill="none" stroke="#1e2a40" stroke-width="3.6" stroke-dasharray="1.2 1.6" opacity="0.45"/><circle cx="91.2" cy="144" r="20" fill="url(#g17bl)"/><circle cx="91.2" cy="144" r="13.6" fill="none" stroke="#1e2840" stroke-width="7.2" stroke-dasharray="2 1.8" opacity="0.75"/><circle cx="91.2" cy="144" r="6.0" fill="#9ad0e8" opacity="0.8"/><circle cx="39.4" cy="160" r="8" fill="url(#g17pu)"/><circle cx="39.4" cy="160" r="5.0" fill="none" stroke="#1e2a40" stroke-width="2.4" stroke-dasharray="1.2 1.6" opacity="0.45"/><circle cx="62.6" cy="147.6" r="7" fill="url(#g17pu)"/><circle cx="153.8" cy="160" r="10" fill="url(#g17bl)"/><circle cx="153.8" cy="160" r="6.2" fill="none" stroke="#1e2a40" stroke-width="3.0" stroke-dasharray="1.2 1.6" opacity="0.45"/><rect x="125" y="128" width="29" height="28" fill="#7a9e9c"/><rect x="125.00" y="128.00" width="2.33" height="2.25" fill="#2a5454"/><rect x="125.00" y="134.46" width="2.33" height="2.25" fill="#d2e4e2"/><rect x="125.00" y="138.77" width="2.33" height="2.25" fill="#2a5454"/><rect x="125.00" y="140.92" width="2.33" height="2.25" fill="#2a5454"/><rect x="125.00" y="143.08" width="2.33" height="2.25" fill="#d2e4e2"/><rect x="125.00" y="145.23" width="2.33" height="2.25" fill="#d2e4e2"/><rect x="125.00" y="147.38" width="2.33" height="2.25" fill="#d2e4e2"/><rect x="125.00" y="149.54" width="2.33" height="2.25" fill="#2a5454"/><rect x="125.00" y="151.69" width="2.33" height="2.25" fill="#d2e4e2"/><rect x="125.00" y="153.85" width="2.33" height="2.25" fill="#2a5454"/><rect x="127.23" y="128.00" width="2.33" height="2.25" fill="#d2e4e2"/><rect x="127.23" y="134.46" width="2.33" height="2.25" fill="#d2e4e2"/><rect x="127.23" y="138.77" width="2.33" height="2.25" fill="#d2e4e2"/><rect x="127.23" y="145.23" width="2.33" height="2.25" fill="#d2e4e2"/><rect x="127.23" y="147.38" width="2.33" height="2.25" fill="#2a5454"/><rect x="127.23" y="149.54" width="2.33" height="2.25" fill="#2a5454"/><rect x="127.23" y="153.85" width="2.33" height="2.25" fill="#d2e4e2"/><rect x="129.46" y="128.00" width="2.33" height="2.25" fill="#2a5454"/><rect x="129.46" y="132.31" width="2.33" height="2.25" fill="#2a5454"/><rect x="129.46" y="134.46" width="2.33" height="2.25" fill="#d2e4e2"/><rect x="129.46" y="136.62" width="2.33" height="2.25" fill="#d2e4e2"/><rect x="129.46" y="140.92" width="2.33" height="2.25" fill="#d2e4e2"/><rect x="129.46" y="145.23" width="2.33" height="2.25" fill="#d2e4e2"/><rect x="129.46" y="153.85" width="2.33" height="2.25" fill="#d2e4e2"/><rect x="131.69" y="128.00" width="2.33" height="2.25" fill="#d2e4e2"/><rect x="131.69" y="130.15" width="2.33" height="2.25" fill="#d2e4e2"/><rect x="131.69" y="134.46" width="2.33" height="2.25" fill="#d2e4e2"/><rect x="131.69" y="138.77" width="2.33" height="2.25" fill="#d2e4e2"/><rect x="131.69" y="145.23" width="2.33" height="2.25" fill="#d2e4e2"/><rect x="131.69" y="147.38" width="2.33" height="2.25" fill="#2a5454"/><rect x="131.69" y="151.69" width="2.33" height="2.25" fill="#2a5454"/><rect x="131.69" y="153.85" width="2.33" height="2.25" fill="#d2e4e2"/><rect x="133.92" y="128.00" width="2.33" height="2.25" fill="#d2e4e2"/><rect x="133.92" y="132.31" width="2.33" height="2.25" fill="#d2e4e2"/><rect x="133.92" y="134.46" width="2.33" height="2.25" fill="#2a5454"/><rect x="133.92" y="136.62" width="2.33" height="2.25" fill="#2a5454"/><rect x="133.92" y="138.77" width="2.33" height="2.25" fill="#2a5454"/><rect x="133.92" y="140.92" width="2.33" height="2.25" fill="#d2e4e2"/><rect x="133.92" y="143.08" width="2.33" height="2.25" fill="#2a5454"/><rect x="133.92" y="147.38" width="2.33" height="2.25" fill="#d2e4e2"/><rect x="133.92" y="149.54" width="2.33" height="2.25" fill="#d2e4e2"/><rect x="133.92" y="153.85" width="2.33" height="2.25" fill="#2a5454"/><rect x="136.15" y="128.00" width="2.33" height="2.25" fill="#d2e4e2"/><rect x="136.15" y="130.15" width="2.33" height="2.25" fill="#d2e4e2"/><rect x="136.15" y="134.46" width="2.33" height="2.25" fill="#d2e4e2"/><rect x="136.15" y="136.62" width="2.33" height="2.25" fill="#d2e4e2"/><rect x="136.15" y="138.77" width="2.33" height="2.25" fill="#d2e4e2"/><rect x="136.15" y="140.92" width="2.33" height="2.25" fill="#2a5454"/><rect x="136.15" y="143.08" width="2.33" height="2.25" fill="#2a5454"/><rect x="136.15" y="145.23" width="2.33" height="2.25" fill="#d2e4e2"/><rect x="136.15" y="147.38" width="2.33" height="2.25" fill="#d2e4e2"/><rect x="136.15" y="153.85" width="2.33" height="2.25" fill="#d2e4e2"/><rect x="138.38" y="128.00" width="2.33" height="2.25" fill="#2a5454"/><rect x="138.38" y="130.15" width="2.33" height="2.25" fill="#2a5454"/><rect x="138.38" y="132.31" width="2.33" height="2.25" fill="#d2e4e2"/><rect x="138.38" y="134.46" width="2.33" height="2.25" fill="#2a5454"/><rect x="138.38" y="138.77" width="2.33" height="2.25" fill="#2a5454"/><rect x="138.38" y="140.92" width="2.33" height="2.25" fill="#d2e4e2"/><rect x="138.38" y="143.08" width="2.33" height="2.25" fill="#d2e4e2"/><rect x="138.38" y="145.23" width="2.33" height="2.25" fill="#d2e4e2"/><rect x="138.38" y="147.38" width="2.33" height="2.25" fill="#d2e4e2"/><rect x="138.38" y="149.54" width="2.33" height="2.25" fill="#d2e4e2"/><rect x="138.38" y="151.69" width="2.33" height="2.25" fill="#d2e4e2"/><rect x="140.62" y="128.00" width="2.33" height="2.25" fill="#2a5454"/><rect x="140.62" y="136.62" width="2.33" height="2.25" fill="#d2e4e2"/><rect x="140.62" y="140.92" width="2.33" height="2.25" fill="#d2e4e2"/><rect x="140.62" y="147.38" width="2.33" height="2.25" fill="#2a5454"/><rect x="140.62" y="149.54" width="2.33" height="2.25" fill="#d2e4e2"/><rect x="140.62" y="151.69" width="2.33" height="2.25" fill="#d2e4e2"/><rect x="140.62" y="153.85" width="2.33" height="2.25" fill="#d2e4e2"/><rect x="142.85" y="128.00" width="2.33" height="2.25" fill="#2a5454"/><rect x="142.85" y="130.15" width="2.33" height="2.25" fill="#d2e4e2"/><rect x="142.85" y="132.31" width="2.33" height="2.25" fill="#2a5454"/><rect x="142.85" y="134.46" width="2.33" height="2.25" fill="#d2e4e2"/><rect x="142.85" y="136.62" width="2.33" height="2.25" fill="#d2e4e2"/><rect x="142.85" y="138.77" width="2.33" height="2.25" fill="#d2e4e2"/><rect x="142.85" y="140.92" width="2.33" height="2.25" fill="#2a5454"/><rect x="142.85" y="143.08" width="2.33" height="2.25" fill="#d2e4e2"/><rect x="142.85" y="145.23" width="2.33" height="2.25" fill="#d2e4e2"/><rect x="142.85" y="147.38" width="2.33" height="2.25" fill="#d2e4e2"/><rect x="142.85" y="149.54" width="2.33" height="2.25" fill="#2a5454"/><rect x="142.85" y="151.69" width="2.33" height="2.25" fill="#2a5454"/><rect x="142.85" y="153.85" width="2.33" height="2.25" fill="#d2e4e2"/><rect x="145.08" y="132.31" width="2.33" height="2.25" fill="#d2e4e2"/><rect x="145.08" y="134.46" width="2.33" height="2.25" fill="#d2e4e2"/><rect x="145.08" y="136.62" width="2.33" height="2.25" fill="#d2e4e2"/><rect x="145.08" y="138.77" width="2.33" height="2.25" fill="#d2e4e2"/><rect x="145.08" y="140.92" width="2.33" height="2.25" fill="#d2e4e2"/><rect x="145.08" y="143.08" width="2.33" height="2.25" fill="#2a5454"/><rect x="145.08" y="145.23" width="2.33" height="2.25" fill="#2a5454"/><rect x="145.08" y="147.38" width="2.33" height="2.25" fill="#d2e4e2"/><rect x="145.08" y="151.69" width="2.33" height="2.25" fill="#d2e4e2"/><rect x="145.08" y="153.85" width="2.33" height="2.25" fill="#2a5454"/><rect x="147.31" y="130.15" width="2.33" height="2.25" fill="#2a5454"/><rect x="147.31" y="132.31" width="2.33" height="2.25" fill="#2a5454"/><rect x="147.31" y="134.46" width="2.33" height="2.25" fill="#d2e4e2"/><rect x="147.31" y="140.92" width="2.33" height="2.25" fill="#d2e4e2"/><rect x="147.31" y="143.08" width="2.33" height="2.25" fill="#d2e4e2"/><rect x="147.31" y="145.23" width="2.33" height="2.25" fill="#2a5454"/><rect x="147.31" y="147.38" width="2.33" height="2.25" fill="#2a5454"/><rect x="147.31" y="149.54" width="2.33" height="2.25" fill="#2a5454"/><rect x="147.31" y="151.69" width="2.33" height="2.25" fill="#d2e4e2"/><rect x="147.31" y="153.85" width="2.33" height="2.25" fill="#2a5454"/><rect x="149.54" y="128.00" width="2.33" height="2.25" fill="#2a5454"/><rect x="149.54" y="132.31" width="2.33" height="2.25" fill="#d2e4e2"/><rect x="149.54" y="134.46" width="2.33" height="2.25" fill="#d2e4e2"/><rect x="149.54" y="136.62" width="2.33" height="2.25" fill="#2a5454"/><rect x="149.54" y="138.77" width="2.33" height="2.25" fill="#2a5454"/><rect x="149.54" y="140.92" width="2.33" height="2.25" fill="#d2e4e2"/><rect x="149.54" y="143.08" width="2.33" height="2.25" fill="#d2e4e2"/><rect x="149.54" y="145.23" width="2.33" height="2.25" fill="#d2e4e2"/><rect x="149.54" y="151.69" width="2.33" height="2.25" fill="#d2e4e2"/><rect x="151.77" y="128.00" width="2.33" height="2.25" fill="#d2e4e2"/><rect x="151.77" y="130.15" width="2.33" height="2.25" fill="#d2e4e2"/><rect x="151.77" y="132.31" width="2.33" height="2.25" fill="#2a5454"/><rect x="151.77" y="134.46" width="2.33" height="2.25" fill="#2a5454"/><rect x="151.77" y="136.62" width="2.33" height="2.25" fill="#d2e4e2"/><rect x="151.77" y="138.77" width="2.33" height="2.25" fill="#d2e4e2"/><rect x="151.77" y="143.08" width="2.33" height="2.25" fill="#2a5454"/><rect x="151.77" y="147.38" width="2.33" height="2.25" fill="#d2e4e2"/><rect x="151.77" y="153.85" width="2.33" height="2.25" fill="#d2e4e2"/><rect x="125.00" y="128.00" width="6.69" height="6.46" fill="#2a5050"/><rect x="127.23" y="130.15" width="2.23" height="2.15" fill="#0e2e2e"/><rect x="147.31" y="128.00" width="6.69" height="6.46" fill="#2a5050"/><rect x="149.54" y="130.15" width="2.23" height="2.15" fill="#0e2e2e"/><rect x="125.00" y="149.54" width="6.69" height="6.46" fill="#2a5050"/><rect x="127.23" y="151.69" width="2.23" height="2.15" fill="#0e2e2e"/></svg><div style="left:2px;top:144px;width:16px;height:16px;background:linear-gradient(135deg,#e6f6f6,#c6eeee)"><svg style="left:0;top:0" width="16" height="16" viewBox="0 0 16 16">
<path d="M3.5 2.5 L10 2.5 L14.5 8 L10 13.5 L3.5 13.5 L6.5 10.5 L4 8 L6.5 5.5 Z" fill="#1a9e9e"/>
<path d="M8 2.5 L10 2.5 L14.5 8 L10 13.5 L8 13.5 L11 8 Z" fill="#0b6f72"/>
<path d="M3.5 2.5 L6.5 5.5 L9 5.5 L7 2.5 Z" fill="#2fc0bd"/>
</svg></div><div style="left:-1px;top:162px;width:171px;height:18px;background:#9c9c9c;border-left:1px solid #a3a3a3;border-right:1px solid #a3a3a3"></div><div class="m" style="left:0;top:164.5px;width:169px;text-align:center;color:#fff;line-height:12px;font-size:11px;letter-spacing:-0.6px">17.max</div></div>
<div style="left:564px;top:135px;width:171px;height:181px;background:#838383;border:1px solid #a3a3a3;border-bottom:none;overflow:hidden"><svg style="left:0;top:0" width="169" height="162" viewBox="1 1 169 162"><rect x="0" y="10" width="171" height="142" fill="#f7f7f8"/><rect x="11.2" y="28" width="65.3" height="35.8" fill="none" stroke="#5a5a5a" stroke-width="0.75"/><path d="M15.8 28 L15.8 63.8 M20.4 28 L20.4 63.8 M25.0 28 L25.0 63.8 M29.6 28 L29.6 63.8 M34.2 28 L34.2 63.8 M38.8 28 L38.8 63.8 M43.4 28 L43.4 63.8 M48.0 28 L48.0 63.8 M52.6 28 L52.6 63.8 M57.2 28 L57.2 63.8 M61.8 28 L61.8 63.8 M66.4 28 L66.4 63.8 M71.0 28 L71.0 63.8 M75.6 28 L75.6 63.8 M11.2 32.6 L76.5 32.6 M11.2 37.2 L76.5 37.2 M11.2 41.8 L76.5 41.8 M11.2 46.4 L76.5 46.4 M11.2 51.0 L76.5 51.0 M11.2 55.6 L76.5 55.6 M11.2 60.2 L76.5 60.2 " stroke="#5a5a5a" stroke-width="0.75"/><rect x="92.2" y="29.2" width="65.3" height="36.3" fill="none" stroke="#8a7e78" stroke-width="0.75"/><path d="M96.8 29.2 L96.8 65.5 M101.4 29.2 L101.4 65.5 M106.0 29.2 L106.0 65.5 M110.6 29.2 L110.6 65.5 M115.2 29.2 L115.2 65.5 M119.8 29.2 L119.8 65.5 M124.4 29.2 L124.4 65.5 M129.0 29.2 L129.0 65.5 M133.6 29.2 L133.6 65.5 M138.2 29.2 L138.2 65.5 M142.8 29.2 L142.8 65.5 M147.4 29.2 L147.4 65.5 M152.0 29.2 L152.0 65.5 M156.6 29.2 L156.6 65.5 M92.2 33.8 L157.5 33.8 M92.2 38.4 L157.5 38.4 M92.2 43.0 L157.5 43.0 M92.2 47.6 L157.5 47.6 M92.2 52.2 L157.5 52.2 M92.2 56.8 L157.5 56.8 M92.2 61.4 L157.5 61.4 " stroke="#8a7e78" stroke-width="0.75"/><rect x="12" y="100" width="58" height="34" fill="none" stroke="#8a7e78" stroke-width="0.75"/><path d="M16.6 100 L16.6 134 M21.2 100 L21.2 134 M25.8 100 L25.8 134 M30.4 100 L30.4 134 M35.0 100 L35.0 134 M39.6 100 L39.6 134 M44.2 100 L44.2 134 M48.8 100 L48.8 134 M53.4 100 L53.4 134 M58.0 100 L58.0 134 M62.6 100 L62.6 134 M67.2 100 L67.2 134 M12 104.6 L70 104.6 M12 109.2 L70 109.2 M12 113.8 L70 113.8 M12 118.4 L70 118.4 M12 123.0 L70 123.0 M12 127.6 L70 127.6 M12 132.2 L70 132.2 " stroke="#8a7e78" stroke-width="0.75"/><rect x="96" y="99" width="59" height="34" fill="none" stroke="#5a5a5a" stroke-width="0.75"/><path d="M100.6 99 L100.6 133 M105.2 99 L105.2 133 M109.8 99 L109.8 133 M114.4 99 L114.4 133 M119.0 99 L119.0 133 M123.6 99 L123.6 133 M128.2 99 L128.2 133 M132.8 99 L132.8 133 M137.4 99 L137.4 133 M142.0 99 L142.0 133 M146.6 99 L146.6 133 M151.2 99 L151.2 133 M96 103.6 L155 103.6 M96 108.2 L155 108.2 M96 112.8 L155 112.8 M96 117.4 L155 117.4 M96 122.0 L155 122.0 M96 126.6 L155 126.6 M96 131.2 L155 131.2 " stroke="#5a5a5a" stroke-width="0.75"/><rect x="26.5" y="19" width="1.8" height="3" fill="#1a1a1a"/><rect x="26.8" y="22" width="1.2" height="6" fill="#c8a070"/><rect x="59.6" y="19" width="1.8" height="3" fill="#1a1a1a"/><rect x="60" y="22" width="1.2" height="6" fill="#c8a070"/><rect x="14.3" y="52.5" width="30" height="6.7" fill="#4a4a4a"/><rect x="25" y="52.5" width="6" height="6.7" fill="#1e1e1e"/><path d="M18.5 39 Q22 34 26 39" stroke="#3a6a58" stroke-width="2.5" fill="none"/><path d="M35 50 L41 37" stroke="#444" stroke-width="1.8"/><rect x="45.5" y="37" width="10" height="11" fill="#e8f0e0"/><path d="M47 46 L49 40 L51 46 M52 46 L54 42" stroke="#4a7a48" stroke-width="1.5"/><path d="M63 46 L67 37 L73 40" stroke="#6a5040" stroke-width="2" fill="none"/><rect x="59" y="49.4" width="6.7" height="10.6" fill="#6a9a88"/><rect x="101.5" y="33" width="9.5" height="11" fill="#f4f4f4"/><rect x="102.5" y="35" width="7.5" height="7" fill="#2a2a2a"/><rect x="127" y="33" width="9" height="11" fill="#f4f4f4"/><rect x="128" y="35" width="7" height="7" fill="#1e1e1e"/><rect x="102" y="50" width="11" height="10.5" fill="#5a5050"/><rect x="121" y="49" width="13" height="9" fill="#f4f4f4" transform="rotate(-8 127 53)"/><rect x="122" y="51" width="10" height="5" fill="#1e1e1e" transform="rotate(-8 127 53)"/><path d="M110 26 L135 51" stroke="#5a7058" stroke-width="1.2"/><path d="M112 28 l3 -2 M118 34 l3 -1" stroke="#d09a80" stroke-width="2"/><path d="M143 47 L148 38 L155 41" stroke="#7a6048" stroke-width="2" fill="none"/><path d="M156 37 Q160 50 150 58 Q142 64 138 62" stroke="#2e4a2e" stroke-width="3" fill="none"/><ellipse cx="143" cy="60" rx="6" ry="4" fill="#2e4a2e"/><path d="M152 44 L147 54" stroke="#3e5e3e" stroke-width="2"/><rect x="108" y="21" width="1.5" height="8" fill="#c88060"/><rect x="141" y="21" width="1.5" height="8" fill="#c88060"/><rect x="17" y="106" width="8.5" height="9" fill="#f4f4f4"/><rect x="18" y="107.5" width="6.5" height="6" fill="#2a2a2a"/><rect x="39" y="106" width="9" height="10" fill="#f4f4f4"/><rect x="40" y="107.5" width="7" height="7" fill="#1e1e1e"/><rect x="19" y="121" width="9" height="9" fill="#555"/><rect x="34" y="120" width="10" height="8" fill="#222" transform="rotate(-8 39 124)"/><path d="M24 96 L44 119 L52 132" stroke="#5a7058" stroke-width="1.2" fill="none"/><path d="M23 96 l4 -3" stroke="#d09a80" stroke-width="2.5"/><path d="M48 108 L54 100 L60 104" stroke="#7a6048" stroke-width="2" fill="none"/><path d="M66 104 Q68 118 58 128 Q52 134 46 132" stroke="#2e4a2e" stroke-width="3" fill="none"/><ellipse cx="52" cy="130" rx="6" ry="3.5" fill="#3a5a3a"/><rect x="114" y="92" width="1.8" height="3" fill="#1a1a1a"/><rect x="114.2" y="95" width="1.2" height="5" fill="#c8a070"/><rect x="137" y="91" width="1.8" height="3" fill="#1a1a1a"/><rect x="137.2" y="94" width="1.2" height="5" fill="#c8a070"/><rect x="98" y="122" width="30" height="6" fill="#4a4a4a"/><path d="M101 111 Q104 107 108 111" stroke="#3a6a58" stroke-width="2.5" fill="none"/><path d="M116 120 L121 108" stroke="#444" stroke-width="1.6"/><rect x="126" y="107" width="9" height="10" fill="#e8f0e0"/><path d="M143 116 L146 108 L151 110" stroke="#6a5040" stroke-width="2" fill="none"/><rect x="127.5" y="120" width="23.5" height="23.5" fill="#7a9e9c"/><rect x="127.50" y="120.00" width="1.91" height="1.91" fill="#d2e4e2"/><rect x="127.50" y="121.81" width="1.91" height="1.91" fill="#2a5454"/><rect x="127.50" y="123.62" width="1.91" height="1.91" fill="#d2e4e2"/><rect x="127.50" y="125.42" width="1.91" height="1.91" fill="#d2e4e2"/><rect x="127.50" y="127.23" width="1.91" height="1.91" fill="#d2e4e2"/><rect x="127.50" y="129.04" width="1.91" height="1.91" fill="#d2e4e2"/><rect x="127.50" y="130.85" width="1.91" height="1.91" fill="#d2e4e2"/><rect x="127.50" y="132.65" width="1.91" height="1.91" fill="#d2e4e2"/><rect x="127.50" y="134.46" width="1.91" height="1.91" fill="#d2e4e2"/><rect x="127.50" y="136.27" width="1.91" height="1.91" fill="#d2e4e2"/><rect x="127.50" y="138.08" width="1.91" height="1.91" fill="#2a5454"/><rect x="127.50" y="139.88" width="1.91" height="1.91" fill="#d2e4e2"/><rect x="127.50" y="141.69" width="1.91" height="1.91" fill="#2a5454"/><rect x="129.31" y="125.42" width="1.91" height="1.91" fill="#d2e4e2"/><rect x="129.31" y="127.23" width="1.91" height="1.91" fill="#d2e4e2"/><rect x="129.31" y="129.04" width="1.91" height="1.91" fill="#2a5454"/><rect x="129.31" y="130.85" width="1.91" height="1.91" fill="#2a5454"/><rect x="129.31" y="132.65" width="1.91" height="1.91" fill="#d2e4e2"/><rect x="129.31" y="134.46" width="1.91" height="1.91" fill="#2a5454"/><rect x="129.31" y="139.88" width="1.91" height="1.91" fill="#d2e4e2"/><rect x="129.31" y="141.69" width="1.91" height="1.91" fill="#d2e4e2"/><rect x="131.12" y="120.00" width="1.91" height="1.91" fill="#d2e4e2"/><rect x="131.12" y="123.62" width="1.91" height="1.91" fill="#d2e4e2"/><rect x="131.12" y="125.42" width="1.91" height="1.91" fill="#2a5454"/><rect x="131.12" y="127.23" width="1.91" height="1.91" fill="#2a5454"/><rect x="131.12" y="129.04" width="1.91" height="1.91" fill="#2a5454"/><rect x="131.12" y="130.85" width="1.91" height="1.91" fill="#2a5454"/><rect x="131.12" y="134.46" width="1.91" height="1.91" fill="#2a5454"/><rect x="131.12" y="136.27" width="1.91" height="1.91" fill="#d2e4e2"/><rect x="131.12" y="138.08" width="1.91" height="1.91" fill="#d2e4e2"/><rect x="131.12" y="139.88" width="1.91" height="1.91" fill="#d2e4e2"/><rect x="132.92" y="120.00" width="1.91" height="1.91" fill="#d2e4e2"/><rect x="132.92" y="121.81" width="1.91" height="1.91" fill="#2a5454"/><rect x="132.92" y="123.62" width="1.91" height="1.91" fill="#2a5454"/><rect x="132.92" y="125.42" width="1.91" height="1.91" fill="#d2e4e2"/><rect x="132.92" y="127.23" width="1.91" height="1.91" fill="#d2e4e2"/><rect x="132.92" y="129.04" width="1.91" height="1.91" fill="#2a5454"/><rect x="132.92" y="130.85" width="1.91" height="1.91" fill="#d2e4e2"/><rect x="132.92" y="132.65" width="1.91" height="1.91" fill="#d2e4e2"/><rect x="132.92" y="134.46" width="1.91" height="1.91" fill="#d2e4e2"/><rect x="132.92" y="136.27" width="1.91" height="1.91" fill="#d2e4e2"/><rect x="132.92" y="138.08" width="1.91" height="1.91" fill="#2a5454"/><rect x="132.92" y="139.88" width="1.91" height="1.91" fill="#2a5454"/><rect x="132.92" y="141.69" width="1.91" height="1.91" fill="#2a5454"/><rect x="134.73" y="120.00" width="1.91" height="1.91" fill="#d2e4e2"/><rect x="134.73" y="125.42" width="1.91" height="1.91" fill="#2a5454"/><rect x="134.73" y="127.23" width="1.91" height="1.91" fill="#d2e4e2"/><rect x="134.73" y="129.04" width="1.91" height="1.91" fill="#d2e4e2"/><rect x="134.73" y="130.85" width="1.91" height="1.91" fill="#d2e4e2"/><rect x="134.73" y="132.65" width="1.91" height="1.91" fill="#d2e4e2"/><rect x="134.73" y="134.46" width="1.91" height="1.91" fill="#2a5454"/><rect x="134.73" y="136.27" width="1.91" height="1.91" fill="#2a5454"/><rect x="134.73" y="138.08" width="1.91" height="1.91" fill="#d2e4e2"/><rect x="134.73" y="141.69" width="1.91" height="1.91" fill="#2a5454"/><rect x="136.54" y="123.62" width="1.91" height="1.91" fill="#2a5454"/><rect x="136.54" y="125.42" width="1.91" height="1.91" fill="#2a5454"/><rect x="136.54" y="129.04" width="1.91" height="1.91" fill="#d2e4e2"/><rect x="136.54" y="130.85" width="1.91" height="1.91" fill="#2a5454"/><rect x="136.54" y="134.46" width="1.91" height="1.91" fill="#d2e4e2"/><rect x="136.54" y="138.08" width="1.91" height="1.91" fill="#d2e4e2"/><rect x="136.54" y="139.88" width="1.91" height="1.91" fill="#d2e4e2"/><rect x="136.54" y="141.69" width="1.91" height="1.91" fill="#d2e4e2"/><rect x="138.35" y="120.00" width="1.91" height="1.91" fill="#d2e4e2"/><rect x="138.35" y="121.81" width="1.91" height="1.91" fill="#2a5454"/><rect x="138.35" y="123.62" width="1.91" height="1.91" fill="#d2e4e2"/><rect x="138.35" y="125.42" width="1.91" height="1.91" fill="#d2e4e2"/><rect x="138.35" y="129.04" width="1.91" height="1.91" fill="#d2e4e2"/><rect x="138.35" y="130.85" width="1.91" height="1.91" fill="#d2e4e2"/><rect x="138.35" y="134.46" width="1.91" height="1.91" fill="#2a5454"/><rect x="138.35" y="136.27" width="1.91" height="1.91" fill="#d2e4e2"/><rect x="138.35" y="138.08" width="1.91" height="1.91" fill="#2a5454"/><rect x="138.35" y="139.88" width="1.91" height="1.91" fill="#d2e4e2"/><rect x="138.35" y="141.69" width="1.91" height="1.91" fill="#d2e4e2"/><rect x="140.15" y="120.00" width="1.91" height="1.91" fill="#2a5454"/><rect x="140.15" y="121.81" width="1.91" height="1.91" fill="#2a5454"/><rect x="140.15" y="123.62" width="1.91" height="1.91" fill="#d2e4e2"/><rect x="140.15" y="125.42" width="1.91" height="1.91" fill="#2a5454"/><rect x="140.15" y="127.23" width="1.91" height="1.91" fill="#2a5454"/><rect x="140.15" y="129.04" width="1.91" height="1.91" fill="#d2e4e2"/><rect x="140.15" y="130.85" width="1.91" height="1.91" fill="#d2e4e2"/><rect x="140.15" y="136.27" width="1.91" height="1.91" fill="#d2e4e2"/><rect x="140.15" y="138.08" width="1.91" height="1.91" fill="#d2e4e2"/><rect x="140.15" y="139.88" width="1.91" height="1.91" fill="#2a5454"/><rect x="140.15" y="141.69" width="1.91" height="1.91" fill="#d2e4e2"/><rect x="141.96" y="120.00" width="1.91" height="1.91" fill="#d2e4e2"/><rect x="141.96" y="125.42" width="1.91" height="1.91" fill="#d2e4e2"/><rect x="141.96" y="127.23" width="1.91" height="1.91" fill="#d2e4e2"/><rect x="141.96" y="132.65" width="1.91" height="1.91" fill="#2a5454"/><rect x="141.96" y="134.46" width="1.91" height="1.91" fill="#d2e4e2"/><rect x="141.96" y="136.27" width="1.91" height="1.91" fill="#d2e4e2"/><rect x="143.77" y="120.00" width="1.91" height="1.91" fill="#2a5454"/><rect x="143.77" y="123.62" width="1.91" height="1.91" fill="#2a5454"/><rect x="143.77" y="127.23" width="1.91" height="1.91" fill="#d2e4e2"/><rect x="143.77" y="129.04" width="1.91" height="1.91" fill="#d2e4e2"/><rect x="143.77" y="132.65" width="1.91" height="1.91" fill="#2a5454"/><rect x="143.77" y="136.27" width="1.91" height="1.91" fill="#d2e4e2"/><rect x="143.77" y="138.08" width="1.91" height="1.91" fill="#d2e4e2"/><rect x="143.77" y="139.88" width="1.91" height="1.91" fill="#2a5454"/><rect x="143.77" y="141.69" width="1.91" height="1.91" fill="#d2e4e2"/><rect x="145.58" y="120.00" width="1.91" height="1.91" fill="#d2e4e2"/><rect x="145.58" y="121.81" width="1.91" height="1.91" fill="#2a5454"/><rect x="145.58" y="125.42" width="1.91" height="1.91" fill="#2a5454"/><rect x="145.58" y="127.23" width="1.91" height="1.91" fill="#d2e4e2"/><rect x="145.58" y="129.04" width="1.91" height="1.91" fill="#d2e4e2"/><rect x="145.58" y="130.85" width="1.91" height="1.91" fill="#2a5454"/><rect x="145.58" y="132.65" width="1.91" height="1.91" fill="#2a5454"/><rect x="145.58" y="136.27" width="1.91" height="1.91" fill="#d2e4e2"/><rect x="145.58" y="141.69" width="1.91" height="1.91" fill="#d2e4e2"/><rect x="147.38" y="120.00" width="1.91" height="1.91" fill="#d2e4e2"/><rect x="147.38" y="121.81" width="1.91" height="1.91" fill="#d2e4e2"/><rect x="147.38" y="123.62" width="1.91" height="1.91" fill="#d2e4e2"/><rect x="147.38" y="125.42" width="1.91" height="1.91" fill="#d2e4e2"/><rect x="147.38" y="127.23" width="1.91" height="1.91" fill="#d2e4e2"/><rect x="147.38" y="129.04" width="1.91" height="1.91" fill="#2a5454"/><rect x="147.38" y="130.85" width="1.91" height="1.91" fill="#d2e4e2"/><rect x="147.38" y="132.65" width="1.91" height="1.91" fill="#d2e4e2"/><rect x="147.38" y="138.08" width="1.91" height="1.91" fill="#d2e4e2"/><rect x="149.19" y="120.00" width="1.91" height="1.91" fill="#2a5454"/><rect x="149.19" y="121.81" width="1.91" height="1.91" fill="#d2e4e2"/><rect x="149.19" y="123.62" width="1.91" height="1.91" fill="#2a5454"/><rect x="149.19" y="130.85" width="1.91" height="1.91" fill="#d2e4e2"/><rect x="149.19" y="134.46" width="1.91" height="1.91" fill="#d2e4e2"/><rect x="149.19" y="136.27" width="1.91" height="1.91" fill="#d2e4e2"/><rect x="149.19" y="138.08" width="1.91" height="1.91" fill="#2a5454"/><rect x="149.19" y="139.88" width="1.91" height="1.91" fill="#2a5454"/><rect x="149.19" y="141.69" width="1.91" height="1.91" fill="#2a5454"/><rect x="127.50" y="120.00" width="5.42" height="5.42" fill="#2a5050"/><rect x="129.31" y="121.81" width="1.81" height="1.81" fill="#0e2e2e"/><rect x="145.58" y="120.00" width="5.42" height="5.42" fill="#2a5050"/><rect x="147.38" y="121.81" width="1.81" height="1.81" fill="#0e2e2e"/><rect x="127.50" y="138.08" width="5.42" height="5.42" fill="#2a5050"/><rect x="129.31" y="139.88" width="1.81" height="1.81" fill="#0e2e2e"/></svg><div style="left:2px;top:144px;width:16px;height:16px;background:linear-gradient(135deg,#e6f6f6,#c6eeee)"><svg style="left:0;top:0" width="16" height="16" viewBox="0 0 16 16">
<path d="M3.5 2.5 L10 2.5 L14.5 8 L10 13.5 L3.5 13.5 L6.5 10.5 L4 8 L6.5 5.5 Z" fill="#1a9e9e"/>
<path d="M8 2.5 L10 2.5 L14.5 8 L10 13.5 L8 13.5 L11 8 Z" fill="#0b6f72"/>
<path d="M3.5 2.5 L6.5 5.5 L9 5.5 L7 2.5 Z" fill="#2fc0bd"/>
</svg></div><div style="left:-1px;top:162px;width:171px;height:18px;background:#9c9c9c;border-left:1px solid #a3a3a3;border-right:1px solid #a3a3a3"></div><div class="m" style="left:0;top:164.5px;width:169px;text-align:center;color:#fff;line-height:12px;font-size:11px;letter-spacing:-0.6px">18.max</div></div>
<div style="left:747px;top:135px;width:171px;height:181px;background:#838383;border:1px solid #a3a3a3;border-bottom:none;overflow:hidden"><svg style="left:0;top:0" width="169" height="162" viewBox="1 1 169 162"><rect x="0" y="8" width="171" height="145" fill="#fbfbfb"/><circle cx="22" cy="21" r="5" fill="#b0aaa6"/><circle cx="21" cy="20" r="2.5" fill="#d8d4d0"/><circle cx="23.5" cy="22.5" r="1.5" fill="#6a6460"/><circle cx="30" cy="26" r="4" fill="#b0aaa6"/><circle cx="29" cy="25" r="2.0" fill="#d8d4d0"/><circle cx="31.5" cy="27.5" r="1.2" fill="#6a6460"/><circle cx="26" cy="45" r="7" fill="#b0aaa6"/><circle cx="25" cy="44" r="3.5" fill="#d8d4d0"/><circle cx="27.5" cy="46.5" r="2.1" fill="#6a6460"/><circle cx="36" cy="50" r="6" fill="#b0aaa6"/><circle cx="35" cy="49" r="3.0" fill="#d8d4d0"/><circle cx="37.5" cy="51.5" r="1.8" fill="#6a6460"/><circle cx="44" cy="42" r="6" fill="#b0aaa6"/><circle cx="43" cy="41" r="3.0" fill="#d8d4d0"/><circle cx="45.5" cy="43.5" r="1.8" fill="#6a6460"/><circle cx="53" cy="34" r="7" fill="#b0aaa6"/><circle cx="52" cy="33" r="3.5" fill="#d8d4d0"/><circle cx="54.5" cy="35.5" r="2.1" fill="#6a6460"/><circle cx="60" cy="31" r="6" fill="#b0aaa6"/><circle cx="59" cy="30" r="3.0" fill="#d8d4d0"/><circle cx="61.5" cy="32.5" r="1.8" fill="#6a6460"/><circle cx="74" cy="43" r="7" fill="#b0aaa6"/><circle cx="73" cy="42" r="3.5" fill="#d8d4d0"/><circle cx="75.5" cy="44.5" r="2.1" fill="#6a6460"/><circle cx="80" cy="48" r="6" fill="#b0aaa6"/><circle cx="79" cy="47" r="3.0" fill="#d8d4d0"/><circle cx="81.5" cy="49.5" r="1.8" fill="#6a6460"/><circle cx="92" cy="40" r="6" fill="#b0aaa6"/><circle cx="91" cy="39" r="3.0" fill="#d8d4d0"/><circle cx="93.5" cy="41.5" r="1.8" fill="#6a6460"/><circle cx="100" cy="36" r="7" fill="#b0aaa6"/><circle cx="99" cy="35" r="3.5" fill="#d8d4d0"/><circle cx="101.5" cy="37.5" r="2.1" fill="#6a6460"/><circle cx="106" cy="44" r="6" fill="#b0aaa6"/><circle cx="105" cy="43" r="3.0" fill="#d8d4d0"/><circle cx="107.5" cy="45.5" r="1.8" fill="#6a6460"/><circle cx="120" cy="45" r="6" fill="#b0aaa6"/><circle cx="119" cy="44" r="3.0" fill="#d8d4d0"/><circle cx="121.5" cy="46.5" r="1.8" fill="#6a6460"/><circle cx="128" cy="48" r="6" fill="#b0aaa6"/><circle cx="127" cy="47" r="3.0" fill="#d8d4d0"/><circle cx="129.5" cy="49.5" r="1.8" fill="#6a6460"/><circle cx="138" cy="39" r="6" fill="#b0aaa6"/><circle cx="137" cy="38" r="3.0" fill="#d8d4d0"/><circle cx="139.5" cy="40.5" r="1.8" fill="#6a6460"/><circle cx="146" cy="33" r="6" fill="#b0aaa6"/><circle cx="145" cy="32" r="3.0" fill="#d8d4d0"/><circle cx="147.5" cy="34.5" r="1.8" fill="#6a6460"/><circle cx="152" cy="25" r="6" fill="#b0aaa6"/><circle cx="151" cy="24" r="3.0" fill="#d8d4d0"/><circle cx="153.5" cy="26.5" r="1.8" fill="#6a6460"/><circle cx="156" cy="19" r="6" fill="#b0aaa6"/><circle cx="155" cy="18" r="3.0" fill="#d8d4d0"/><circle cx="157.5" cy="20.5" r="1.8" fill="#6a6460"/><circle cx="160" cy="22" r="5" fill="#b0aaa6"/><circle cx="159" cy="21" r="2.5" fill="#d8d4d0"/><circle cx="161.5" cy="23.5" r="1.5" fill="#6a6460"/><circle cx="28" cy="79" r="4" fill="#3a4eaa"/><circle cx="27" cy="78" r="1.8" fill="#8a9ad8"/><circle cx="38" cy="78" r="6" fill="#3a4eaa"/><circle cx="37" cy="77" r="2.7" fill="#8a9ad8"/><circle cx="46" cy="71" r="5" fill="#3a4eaa"/><circle cx="45" cy="70" r="2.2" fill="#8a9ad8"/><circle cx="58" cy="70" r="5" fill="#3a4eaa"/><circle cx="57" cy="69" r="2.2" fill="#8a9ad8"/><circle cx="70" cy="68" r="7" fill="none" stroke="#9a9a9a" stroke-width="0.8"/><circle cx="84" cy="67" r="6" fill="#3a4eaa"/><circle cx="83" cy="66" r="2.7" fill="#8a9ad8"/><circle cx="62" cy="84" r="7" fill="#3a4eaa"/><circle cx="61" cy="83" r="3.1" fill="#8a9ad8"/><circle cx="48" cy="88" r="4" fill="#3a4eaa"/><circle cx="47" cy="87" r="1.8" fill="#8a9ad8"/><circle cx="55" cy="89" r="5" fill="#3a4eaa"/><circle cx="54" cy="88" r="2.2" fill="#8a9ad8"/><circle cx="30" cy="86" r="6" fill="none" stroke="#9a9a9a" stroke-width="0.8"/><circle cx="72" cy="82" r="4" fill="none" stroke="#9a9a9a" stroke-width="0.8"/><circle cx="78" cy="80" r="4" fill="#3a4eaa"/><circle cx="77" cy="79" r="1.8" fill="#8a9ad8"/><circle cx="88" cy="81" r="5" fill="#3a4eaa"/><circle cx="87" cy="80" r="2.2" fill="#8a9ad8"/><circle cx="85" cy="90" r="5" fill="none" stroke="#9a9a9a" stroke-width="0.8"/><circle cx="100" cy="80" r="7" fill="#3a4eaa"/><circle cx="99" cy="79" r="3.1" fill="#8a9ad8"/><circle cx="106" cy="70" r="5" fill="#3a4eaa"/><circle cx="105" cy="69" r="2.2" fill="#8a9ad8"/><circle cx="118" cy="70" r="5" fill="none" stroke="#9a9a9a" stroke-width="0.8"/><circle cx="120" cy="73" r="4" fill="#3a4eaa"/><circle cx="119" cy="72" r="1.8" fill="#8a9ad8"/><circle cx="128" cy="82" r="6" fill="#3a4eaa"/><circle cx="127" cy="81" r="2.7" fill="#8a9ad8"/><circle cx="138" cy="78" r="4" fill="#3a4eaa"/><circle cx="137" cy="77" r="1.8" fill="#8a9ad8"/><circle cx="145" cy="70" r="6" fill="#3a4eaa"/><circle cx="144" cy="69" r="2.7" fill="#8a9ad8"/><circle cx="107" cy="89" r="4" fill="#3a4eaa"/><circle cx="106" cy="88" r="1.8" fill="#8a9ad8"/><circle cx="115" cy="92" r="4" fill="#3a4eaa"/><circle cx="114" cy="91" r="1.8" fill="#8a9ad8"/><circle cx="128" cy="70" r="5" fill="none" stroke="#9a9a9a" stroke-width="0.8"/><circle cx="152" cy="73" r="4" fill="none" stroke="#9a9a9a" stroke-width="0.8"/><path d="M8 107 L78 107 M8 125 L80 125 M20 102 L20 140 M60 102 L60 140 M75 102 L75 140" stroke="#8a8a8a" stroke-width="0.6"/><rect x="14" y="110" width="22" height="9" fill="#4e4440"/><rect x="12" y="118" width="12" height="8" fill="#4e4440"/><rect x="37" y="105" width="19" height="14" fill="#3a58b0"/><rect x="43" y="123" width="17" height="10" fill="#3a58b0"/><rect x="26" y="128" width="12" height="13" fill="#4a68c0"/><rect x="63" y="115" width="10" height="8" fill="#4e4440"/><rect x="58" y="129" width="14" height="5" fill="#4e4440"/><rect x="22" y="118" width="7" height="8" fill="#4060b8"/><path d="M86 107 L156 107 M86 125 L158 125 M98 102 L98 140 M138 102 L138 140 M153 102 L153 140" stroke="#8a8a8a" stroke-width="0.6"/><rect x="92" y="110" width="22" height="9" fill="#4e4440"/><rect x="90" y="118" width="12" height="8" fill="#4e4440"/><rect x="115" y="105" width="19" height="14" fill="#3a58b0"/><rect x="121" y="123" width="17" height="10" fill="#3a58b0"/><rect x="104" y="128" width="12" height="13" fill="#4a68c0"/><rect x="141" y="115" width="10" height="8" fill="#4e4440"/><rect x="136" y="129" width="14" height="5" fill="#4e4440"/><rect x="100" y="118" width="7" height="8" fill="#4060b8"/><rect x="129" y="122" width="22" height="24" fill="#7a9e9c"/><rect x="129.00" y="122.00" width="1.79" height="1.95" fill="#2a5454"/><rect x="129.00" y="125.69" width="1.79" height="1.95" fill="#2a5454"/><rect x="129.00" y="127.54" width="1.79" height="1.95" fill="#2a5454"/><rect x="129.00" y="129.38" width="1.79" height="1.95" fill="#d2e4e2"/><rect x="129.00" y="133.08" width="1.79" height="1.95" fill="#d2e4e2"/><rect x="129.00" y="134.92" width="1.79" height="1.95" fill="#d2e4e2"/><rect x="129.00" y="136.77" width="1.79" height="1.95" fill="#d2e4e2"/><rect x="129.00" y="138.62" width="1.79" height="1.95" fill="#d2e4e2"/><rect x="129.00" y="140.46" width="1.79" height="1.95" fill="#d2e4e2"/><rect x="129.00" y="142.31" width="1.79" height="1.95" fill="#d2e4e2"/><rect x="129.00" y="144.15" width="1.79" height="1.95" fill="#d2e4e2"/><rect x="130.69" y="122.00" width="1.79" height="1.95" fill="#d2e4e2"/><rect x="130.69" y="123.85" width="1.79" height="1.95" fill="#d2e4e2"/><rect x="130.69" y="125.69" width="1.79" height="1.95" fill="#2a5454"/><rect x="130.69" y="127.54" width="1.79" height="1.95" fill="#d2e4e2"/><rect x="130.69" y="129.38" width="1.79" height="1.95" fill="#d2e4e2"/><rect x="130.69" y="131.23" width="1.79" height="1.95" fill="#d2e4e2"/><rect x="130.69" y="133.08" width="1.79" height="1.95" fill="#2a5454"/><rect x="130.69" y="134.92" width="1.79" height="1.95" fill="#d2e4e2"/><rect x="130.69" y="136.77" width="1.79" height="1.95" fill="#2a5454"/><rect x="130.69" y="140.46" width="1.79" height="1.95" fill="#d2e4e2"/><rect x="130.69" y="142.31" width="1.79" height="1.95" fill="#d2e4e2"/><rect x="130.69" y="144.15" width="1.79" height="1.95" fill="#2a5454"/><rect x="132.38" y="123.85" width="1.79" height="1.95" fill="#d2e4e2"/><rect x="132.38" y="125.69" width="1.79" height="1.95" fill="#2a5454"/><rect x="132.38" y="127.54" width="1.79" height="1.95" fill="#d2e4e2"/><rect x="132.38" y="136.77" width="1.79" height="1.95" fill="#d2e4e2"/><rect x="132.38" y="138.62" width="1.79" height="1.95" fill="#2a5454"/><rect x="132.38" y="140.46" width="1.79" height="1.95" fill="#2a5454"/><rect x="132.38" y="144.15" width="1.79" height="1.95" fill="#d2e4e2"/><rect x="134.08" y="122.00" width="1.79" height="1.95" fill="#d2e4e2"/><rect x="134.08" y="123.85" width="1.79" height="1.95" fill="#2a5454"/><rect x="134.08" y="125.69" width="1.79" height="1.95" fill="#d2e4e2"/><rect x="134.08" y="127.54" width="1.79" height="1.95" fill="#2a5454"/><rect x="134.08" y="129.38" width="1.79" height="1.95" fill="#d2e4e2"/><rect x="134.08" y="131.23" width="1.79" height="1.95" fill="#d2e4e2"/><rect x="134.08" y="133.08" width="1.79" height="1.95" fill="#d2e4e2"/><rect x="134.08" y="134.92" width="1.79" height="1.95" fill="#d2e4e2"/><rect x="134.08" y="136.77" width="1.79" height="1.95" fill="#d2e4e2"/><rect x="134.08" y="138.62" width="1.79" height="1.95" fill="#2a5454"/><rect x="134.08" y="140.46" width="1.79" height="1.95" fill="#d2e4e2"/><rect x="135.77" y="123.85" width="1.79" height="1.95" fill="#d2e4e2"/><rect x="135.77" y="125.69" width="1.79" height="1.95" fill="#d2e4e2"/><rect x="135.77" y="127.54" width="1.79" height="1.95" fill="#d2e4e2"/><rect x="135.77" y="129.38" width="1.79" height="1.95" fill="#d2e4e2"/><rect x="135.77" y="131.23" width="1.79" height="1.95" fill="#2a5454"/><rect x="135.77" y="133.08" width="1.79" height="1.95" fill="#d2e4e2"/><rect x="135.77" y="134.92" width="1.79" height="1.95" fill="#d2e4e2"/><rect x="135.77" y="136.77" width="1.79" height="1.95" fill="#d2e4e2"/><rect x="135.77" y="138.62" width="1.79" height="1.95" fill="#d2e4e2"/><rect x="135.77" y="140.46" width="1.79" height="1.95" fill="#2a5454"/><rect x="135.77" y="142.31" width="1.79" height="1.95" fill="#d2e4e2"/><rect x="135.77" y="144.15" width="1.79" height="1.95" fill="#d2e4e2"/><rect x="137.46" y="122.00" width="1.79" height="1.95" fill="#2a5454"/><rect x="137.46" y="123.85" width="1.79" height="1.95" fill="#d2e4e2"/><rect x="137.46" y="125.69" width="1.79" height="1.95" fill="#d2e4e2"/><rect x="137.46" y="127.54" width="1.79" height="1.95" fill="#2a5454"/><rect x="137.46" y="131.23" width="1.79" height="1.95" fill="#d2e4e2"/><rect x="137.46" y="133.08" width="1.79" height="1.95" fill="#d2e4e2"/><rect x="137.46" y="134.92" width="1.79" height="1.95" fill="#2a5454"/><rect x="137.46" y="136.77" width="1.79" height="1.95" fill="#2a5454"/><rect x="137.46" y="138.62" width="1.79" height="1.95" fill="#d2e4e2"/><rect x="137.46" y="140.46" width="1.79" height="1.95" fill="#d2e4e2"/><rect x="137.46" y="142.31" width="1.79" height="1.95" fill="#d2e4e2"/><rect x="137.46" y="144.15" width="1.79" height="1.95" fill="#d2e4e2"/><rect x="139.15" y="122.00" width="1.79" height="1.95" fill="#d2e4e2"/><rect x="139.15" y="123.85" width="1.79" height="1.95" fill="#d2e4e2"/><rect x="139.15" y="125.69" width="1.79" height="1.95" fill="#d2e4e2"/><rect x="139.15" y="127.54" width="1.79" height="1.95" fill="#d2e4e2"/><rect x="139.15" y="129.38" width="1.79" height="1.95" fill="#2a5454"/><rect x="139.15" y="133.08" width="1.79" height="1.95" fill="#2a5454"/><rect x="139.15" y="134.92" width="1.79" height="1.95" fill="#d2e4e2"/><rect x="139.15" y="136.77" width="1.79" height="1.95" fill="#2a5454"/><rect x="139.15" y="138.62" width="1.79" height="1.95" fill="#2a5454"/><rect x="139.15" y="140.46" width="1.79" height="1.95" fill="#d2e4e2"/><rect x="139.15" y="142.31" width="1.79" height="1.95" fill="#d2e4e2"/><rect x="139.15" y="144.15" width="1.79" height="1.95" fill="#2a5454"/><rect x="140.85" y="125.69" width="1.79" height="1.95" fill="#2a5454"/><rect x="140.85" y="127.54" width="1.79" height="1.95" fill="#2a5454"/><rect x="140.85" y="131.23" width="1.79" height="1.95" fill="#d2e4e2"/><rect x="140.85" y="133.08" width="1.79" height="1.95" fill="#2a5454"/><rect x="140.85" y="134.92" width="1.79" height="1.95" fill="#d2e4e2"/><rect x="140.85" y="138.62" width="1.79" height="1.95" fill="#2a5454"/><rect x="140.85" y="140.46" width="1.79" height="1.95" fill="#d2e4e2"/><rect x="140.85" y="142.31" width="1.79" height="1.95" fill="#d2e4e2"/><rect x="140.85" y="144.15" width="1.79" height="1.95" fill="#2a5454"/><rect x="142.54" y="123.85" width="1.79" height="1.95" fill="#d2e4e2"/><rect x="142.54" y="125.69" width="1.79" height="1.95" fill="#d2e4e2"/><rect x="142.54" y="127.54" width="1.79" height="1.95" fill="#2a5454"/><rect x="142.54" y="129.38" width="1.79" height="1.95" fill="#d2e4e2"/><rect x="142.54" y="133.08" width="1.79" height="1.95" fill="#2a5454"/><rect x="142.54" y="136.77" width="1.79" height="1.95" fill="#2a5454"/><rect x="142.54" y="138.62" width="1.79" height="1.95" fill="#2a5454"/><rect x="142.54" y="140.46" width="1.79" height="1.95" fill="#d2e4e2"/><rect x="142.54" y="142.31" width="1.79" height="1.95" fill="#2a5454"/><rect x="142.54" y="144.15" width="1.79" height="1.95" fill="#d2e4e2"/><rect x="144.23" y="122.00" width="1.79" height="1.95" fill="#d2e4e2"/><rect x="144.23" y="123.85" width="1.79" height="1.95" fill="#d2e4e2"/><rect x="144.23" y="127.54" width="1.79" height="1.95" fill="#d2e4e2"/><rect x="144.23" y="129.38" width="1.79" height="1.95" fill="#d2e4e2"/><rect x="144.23" y="133.08" width="1.79" height="1.95" fill="#2a5454"/><rect x="144.23" y="136.77" width="1.79" height="1.95" fill="#d2e4e2"/><rect x="144.23" y="138.62" width="1.79" height="1.95" fill="#d2e4e2"/><rect x="144.23" y="140.46" width="1.79" height="1.95" fill="#d2e4e2"/><rect x="144.23" y="142.31" width="1.79" height="1.95" fill="#d2e4e2"/><rect x="144.23" y="144.15" width="1.79" height="1.95" fill="#d2e4e2"/><rect x="145.92" y="122.00" width="1.79" height="1.95" fill="#d2e4e2"/><rect x="145.92" y="127.54" width="1.79" height="1.95" fill="#d2e4e2"/><rect x="145.92" y="129.38" width="1.79" height="1.95" fill="#2a5454"/><rect x="145.92" y="131.23" width="1.79" height="1.95" fill="#2a5454"/><rect x="145.92" y="133.08" width="1.79" height="1.95" fill="#d2e4e2"/><rect x="145.92" y="134.92" width="1.79" height="1.95" fill="#d2e4e2"/><rect x="145.92" y="136.77" width="1.79" height="1.95" fill="#d2e4e2"/><rect x="145.92" y="138.62" width="1.79" height="1.95" fill="#d2e4e2"/><rect x="145.92" y="140.46" width="1.79" height="1.95" fill="#d2e4e2"/><rect x="145.92" y="142.31" width="1.79" height="1.95" fill="#2a5454"/><rect x="145.92" y="144.15" width="1.79" height="1.95" fill="#d2e4e2"/><rect x="147.62" y="122.00" width="1.79" height="1.95" fill="#d2e4e2"/><rect x="147.62" y="123.85" width="1.79" height="1.95" fill="#d2e4e2"/><rect x="147.62" y="127.54" width="1.79" height="1.95" fill="#d2e4e2"/><rect x="147.62" y="131.23" width="1.79" height="1.95" fill="#d2e4e2"/><rect x="147.62" y="133.08" width="1.79" height="1.95" fill="#2a5454"/><rect x="147.62" y="134.92" width="1.79" height="1.95" fill="#2a5454"/><rect x="147.62" y="136.77" width="1.79" height="1.95" fill="#2a5454"/><rect x="147.62" y="138.62" width="1.79" height="1.95" fill="#2a5454"/><rect x="147.62" y="142.31" width="1.79" height="1.95" fill="#2a5454"/><rect x="147.62" y="144.15" width="1.79" height="1.95" fill="#d2e4e2"/><rect x="149.31" y="122.00" width="1.79" height="1.95" fill="#2a5454"/><rect x="149.31" y="123.85" width="1.79" height="1.95" fill="#2a5454"/><rect x="149.31" y="125.69" width="1.79" height="1.95" fill="#d2e4e2"/><rect x="149.31" y="127.54" width="1.79" height="1.95" fill="#2a5454"/><rect x="149.31" y="131.23" width="1.79" height="1.95" fill="#d2e4e2"/><rect x="149.31" y="133.08" width="1.79" height="1.95" fill="#d2e4e2"/><rect x="149.31" y="134.92" width="1.79" height="1.95" fill="#d2e4e2"/><rect x="149.31" y="136.77" width="1.79" height="1.95" fill="#2a5454"/><rect x="149.31" y="138.62" width="1.79" height="1.95" fill="#d2e4e2"/><rect x="149.31" y="140.46" width="1.79" height="1.95" fill="#d2e4e2"/><rect x="149.31" y="142.31" width="1.79" height="1.95" fill="#d2e4e2"/><rect x="149.31" y="144.15" width="1.79" height="1.95" fill="#2a5454"/><rect x="129.00" y="122.00" width="5.08" height="5.54" fill="#2a5050"/><rect x="130.69" y="123.85" width="1.69" height="1.85" fill="#0e2e2e"/><rect x="145.92" y="122.00" width="5.08" height="5.54" fill="#2a5050"/><rect x="147.62" y="123.85" width="1.69" height="1.85" fill="#0e2e2e"/><rect x="129.00" y="140.46" width="5.08" height="5.54" fill="#2a5050"/><rect x="130.69" y="142.31" width="1.69" height="1.85" fill="#0e2e2e"/></svg><div style="left:2px;top:144px;width:16px;height:16px;background:linear-gradient(135deg,#e6f6f6,#c6eeee)"><svg style="left:0;top:0" width="16" height="16" viewBox="0 0 16 16">
<path d="M3.5 2.5 L10 2.5 L14.5 8 L10 13.5 L3.5 13.5 L6.5 10.5 L4 8 L6.5 5.5 Z" fill="#1a9e9e"/>
<path d="M8 2.5 L10 2.5 L14.5 8 L10 13.5 L8 13.5 L11 8 Z" fill="#0b6f72"/>
<path d="M3.5 2.5 L6.5 5.5 L9 5.5 L7 2.5 Z" fill="#2fc0bd"/>
</svg></div><div style="left:-1px;top:162px;width:171px;height:18px;background:#9c9c9c;border-left:1px solid #a3a3a3;border-right:1px solid #a3a3a3"></div><div class="m" style="left:0;top:164.5px;width:169px;text-align:center;color:#fff;line-height:12px;font-size:11px;letter-spacing:-0.6px">19.max</div></div>
<div style="left:198px;top:330px;width:171px;height:181px;background:#838383;border:1px solid #a3a3a3;border-bottom:none;overflow:hidden"><svg style="left:0;top:0" width="169" height="162" viewBox="1 1 169 162"><defs><radialGradient id="g20" cx="0.5" cy="0.3" r="0.8"><stop offset="0" stop-color="#767676"/><stop offset="1" stop-color="#5c5c5c"/></radialGradient></defs><rect x="0" y="9" width="171" height="142" fill="url(#g20)"/><path d="M17.7 70.2 A21.3 21.3 0 0 1 60.3 70.2 Z" fill="#c9a478"/><path d="M17.7 70.2 A21.3 21.3 0 0 0 60.3 70.2 Z" fill="#3e2a24"/><path d="M67.1 71.5 A21.5 21.5 0 0 1 110.1 71.5 Z" fill="#e8dcc0"/><path d="M67.1 71.5 A21.5 21.5 0 0 0 110.1 71.5 Z" fill="#c8a47a"/><path d="M114.80000000000001 71.6 A19.5 19.5 0 0 1 153.8 71.6 Z" fill="#4a2e28"/><path d="M114.80000000000001 71.6 A19.5 19.5 0 0 0 153.8 71.6 Z" fill="#c9a77c"/><circle cx="35.1" cy="111.4" r="1.5" fill="#6aa82a"/><circle cx="37.2" cy="98.2" r="1.8" fill="#a8d850"/><circle cx="33.0" cy="75.3" r="1.4" fill="#8cc43a"/><circle cx="38.5" cy="82.6" r="1.7" fill="#4e8a22"/><circle cx="35.3" cy="76.8" r="1.6" fill="#a8d850"/><circle cx="34.2" cy="71.5" r="1.7" fill="#4e8a22"/><circle cx="31.3" cy="77.1" r="1.4" fill="#6aa82a"/><circle cx="36.1" cy="76.3" r="1.6" fill="#a8d850"/><circle cx="35.3" cy="79.6" r="1.5" fill="#8cc43a"/><circle cx="37.6" cy="78.5" r="1.4" fill="#6aa82a"/><circle cx="34.8" cy="106.2" r="1.4" fill="#a8d850"/><circle cx="34.8" cy="98.7" r="2.1" fill="#4e8a22"/><circle cx="32.7" cy="112.2" r="1.4" fill="#4e8a22"/><circle cx="35.9" cy="86.9" r="1.9" fill="#8cc43a"/><circle cx="34.4" cy="115.8" r="1.5" fill="#a8d850"/><circle cx="31.3" cy="111.4" r="1.7" fill="#6aa82a"/><circle cx="35.8" cy="115.6" r="2.0" fill="#8cc43a"/><circle cx="37.1" cy="81.4" r="1.9" fill="#a8d850"/><circle cx="33.6" cy="86.7" r="2.1" fill="#8cc43a"/><circle cx="38.8" cy="75.0" r="1.3" fill="#a8d850"/><circle cx="30.8" cy="95.1" r="1.5" fill="#a8d850"/><circle cx="35.9" cy="71.2" r="1.9" fill="#a8d850"/><circle cx="31.9" cy="105.6" r="1.4" fill="#8cc43a"/><circle cx="35.4" cy="112.4" r="2.1" fill="#6aa82a"/><circle cx="33.5" cy="109.9" r="1.6" fill="#8cc43a"/><circle cx="30.8" cy="77.7" r="1.4" fill="#6aa82a"/><circle cx="32.8" cy="73.1" r="1.9" fill="#6aa82a"/><circle cx="29.5" cy="89.0" r="2.0" fill="#6aa82a"/><circle cx="38.4" cy="82.3" r="2.1" fill="#8cc43a"/><circle cx="32.6" cy="81.5" r="1.4" fill="#a8d850"/><circle cx="30.4" cy="102.6" r="2.1" fill="#8cc43a"/><circle cx="38.5" cy="85.3" r="2.2" fill="#4e8a22"/><circle cx="35.9" cy="111.2" r="1.8" fill="#8cc43a"/><circle cx="38.4" cy="77.4" r="2.1" fill="#8cc43a"/><circle cx="37.9" cy="93.8" r="1.5" fill="#8cc43a"/><circle cx="37.5" cy="81.4" r="1.3" fill="#8cc43a"/><circle cx="32.4" cy="115.2" r="1.9" fill="#6aa82a"/><circle cx="34.9" cy="86.9" r="2.0" fill="#a8d850"/><circle cx="36.8" cy="88.7" r="2.1" fill="#6aa82a"/><circle cx="37.4" cy="85.4" r="1.7" fill="#4e8a22"/><circle cx="37.3" cy="67.2" r="1.4" fill="#4e8a22"/><circle cx="32.9" cy="109.7" r="1.6" fill="#6aa82a"/><circle cx="33.1" cy="115.5" r="1.9" fill="#6aa82a"/><circle cx="38.6" cy="84.1" r="1.3" fill="#a8d850"/><circle cx="31.1" cy="72.8" r="1.6" fill="#6aa82a"/><circle cx="31.4" cy="102.7" r="1.6" fill="#a8d850"/><circle cx="31.0" cy="74.2" r="1.5" fill="#4e8a22"/><circle cx="32.9" cy="86.2" r="1.8" fill="#a8d850"/><circle cx="37.8" cy="98.8" r="1.9" fill="#8cc43a"/><circle cx="36.4" cy="80.2" r="1.9" fill="#4e8a22"/><circle cx="33.9" cy="108.7" r="2.1" fill="#a8d850"/><circle cx="37.9" cy="83.1" r="1.9" fill="#6aa82a"/><circle cx="35.3" cy="101.5" r="2.0" fill="#8cc43a"/><circle cx="34.2" cy="98.6" r="1.7" fill="#a8d850"/><circle cx="35.7" cy="93.8" r="1.9" fill="#4e8a22"/><circle cx="31.9" cy="112.9" r="2.1" fill="#a8d850"/><circle cx="37.4" cy="94.8" r="1.6" fill="#6aa82a"/><circle cx="36.9" cy="79.0" r="1.4" fill="#a8d850"/><circle cx="29.9" cy="79.9" r="2.2" fill="#a8d850"/><circle cx="34.0" cy="91.3" r="1.7" fill="#4e8a22"/><circle cx="34.1" cy="101.9" r="1.9" fill="#8cc43a"/><circle cx="36.3" cy="73.6" r="2.1" fill="#4e8a22"/><circle cx="33.4" cy="75.4" r="2.1" fill="#4e8a22"/><circle cx="30.8" cy="75.7" r="1.5" fill="#8cc43a"/><circle cx="30.0" cy="86.6" r="1.9" fill="#a8d850"/><circle cx="30.8" cy="72.6" r="2.0" fill="#6aa82a"/><circle cx="32.2" cy="109.6" r="2.2" fill="#a8d850"/><circle cx="31.4" cy="108.8" r="2.0" fill="#6aa82a"/><circle cx="34.3" cy="114.7" r="2.0" fill="#a8d850"/><circle cx="32.2" cy="74.4" r="1.4" fill="#4e8a22"/><circle cx="37.2" cy="92.1" r="1.8" fill="#6aa82a"/><circle cx="37.5" cy="75.7" r="1.4" fill="#8cc43a"/><circle cx="33.2" cy="80.7" r="1.8" fill="#8cc43a"/><circle cx="37.2" cy="96.5" r="1.7" fill="#4e8a22"/><circle cx="31.3" cy="112.8" r="2.0" fill="#6aa82a"/><circle cx="31.4" cy="107.5" r="1.4" fill="#a8d850"/><circle cx="36.6" cy="114.2" r="1.4" fill="#8cc43a"/><circle cx="34.7" cy="100.9" r="1.6" fill="#4e8a22"/><circle cx="36.4" cy="78.6" r="1.7" fill="#8cc43a"/><circle cx="32.1" cy="91.8" r="2.0" fill="#a8d850"/><circle cx="32.0" cy="79.9" r="1.9" fill="#4e8a22"/><circle cx="36.6" cy="111.1" r="1.9" fill="#8cc43a"/><circle cx="29.8" cy="84.8" r="1.4" fill="#6aa82a"/><circle cx="35.8" cy="98.3" r="2.1" fill="#4e8a22"/><circle cx="37.1" cy="67.0" r="1.8" fill="#4e8a22"/><circle cx="35.7" cy="113.5" r="1.6" fill="#8cc43a"/><circle cx="33.8" cy="108.6" r="1.6" fill="#a8d850"/><circle cx="30.8" cy="88.8" r="2.0" fill="#8cc43a"/><circle cx="32.0" cy="109.1" r="1.5" fill="#6aa82a"/><circle cx="30.2" cy="81.3" r="2.1" fill="#6aa82a"/><circle cx="56.3" cy="115.4" r="1.9" fill="#4e8a22"/><circle cx="56.7" cy="96.9" r="1.6" fill="#6aa82a"/><circle cx="52.7" cy="112.9" r="1.8" fill="#8cc43a"/><circle cx="52.5" cy="92.8" r="1.5" fill="#6aa82a"/><circle cx="54.6" cy="115.2" r="2.1" fill="#6aa82a"/><circle cx="54.3" cy="115.9" r="1.5" fill="#8cc43a"/><circle cx="54.3" cy="114.3" r="1.5" fill="#4e8a22"/><circle cx="51.2" cy="71.1" r="1.8" fill="#6aa82a"/><circle cx="58.4" cy="113.5" r="2.2" fill="#a8d850"/><circle cx="53.8" cy="108.0" r="1.7" fill="#8cc43a"/><circle cx="53.2" cy="82.6" r="2.0" fill="#4e8a22"/><circle cx="52.2" cy="105.3" r="1.4" fill="#8cc43a"/><circle cx="53.7" cy="92.0" r="1.7" fill="#a8d850"/><circle cx="52.8" cy="111.9" r="2.1" fill="#4e8a22"/><circle cx="60.3" cy="70.5" r="1.5" fill="#8cc43a"/><circle cx="59.1" cy="67.8" r="1.9" fill="#8cc43a"/><circle cx="53.1" cy="67.3" r="1.7" fill="#8cc43a"/><circle cx="55.7" cy="72.1" r="1.9" fill="#8cc43a"/><circle cx="58.7" cy="111.7" r="2.1" fill="#8cc43a"/><circle cx="52.6" cy="78.3" r="1.8" fill="#a8d850"/><circle cx="58.1" cy="101.8" r="1.5" fill="#8cc43a"/><circle cx="56.1" cy="107.4" r="1.7" fill="#4e8a22"/><circle cx="57.5" cy="111.2" r="1.4" fill="#4e8a22"/><circle cx="56.0" cy="111.1" r="1.8" fill="#6aa82a"/><circle cx="56.3" cy="106.0" r="1.5" fill="#6aa82a"/><circle cx="51.5" cy="81.0" r="2.2" fill="#a8d850"/><circle cx="57.1" cy="107.8" r="2.1" fill="#4e8a22"/><circle cx="55.4" cy="82.4" r="1.8" fill="#a8d850"/><circle cx="52.3" cy="84.6" r="2.0" fill="#a8d850"/><circle cx="56.5" cy="74.2" r="1.4" fill="#6aa82a"/><circle cx="53.5" cy="105.5" r="1.8" fill="#6aa82a"/><circle cx="51.9" cy="105.0" r="1.5" fill="#8cc43a"/><circle cx="59.7" cy="90.3" r="1.5" fill="#a8d850"/><circle cx="55.1" cy="111.4" r="1.6" fill="#6aa82a"/><circle cx="54.5" cy="115.0" r="1.6" fill="#6aa82a"/><circle cx="51.2" cy="87.9" r="1.5" fill="#6aa82a"/><circle cx="58.0" cy="77.6" r="2.0" fill="#4e8a22"/><circle cx="55.0" cy="83.0" r="2.2" fill="#4e8a22"/><circle cx="50.9" cy="68.2" r="1.8" fill="#6aa82a"/><circle cx="52.0" cy="103.4" r="1.3" fill="#a8d850"/><circle cx="51.2" cy="92.1" r="1.9" fill="#8cc43a"/><circle cx="53.3" cy="115.0" r="2.1" fill="#8cc43a"/><circle cx="50.7" cy="86.0" r="1.5" fill="#a8d850"/><circle cx="56.0" cy="98.4" r="2.2" fill="#a8d850"/><circle cx="52.4" cy="77.7" r="1.3" fill="#4e8a22"/><circle cx="55.7" cy="113.8" r="1.8" fill="#8cc43a"/><circle cx="54.2" cy="100.9" r="2.0" fill="#a8d850"/><circle cx="50.4" cy="70.9" r="1.7" fill="#4e8a22"/><circle cx="50.8" cy="80.2" r="1.3" fill="#6aa82a"/><circle cx="52.6" cy="103.7" r="1.5" fill="#8cc43a"/><circle cx="50.7" cy="83.2" r="2.1" fill="#6aa82a"/><circle cx="57.6" cy="114.9" r="1.4" fill="#4e8a22"/><circle cx="59.2" cy="79.3" r="2.1" fill="#6aa82a"/><circle cx="50.9" cy="82.6" r="1.7" fill="#4e8a22"/><circle cx="59.4" cy="93.9" r="1.8" fill="#6aa82a"/><circle cx="57.4" cy="100.8" r="1.6" fill="#6aa82a"/><circle cx="58.1" cy="110.1" r="2.1" fill="#8cc43a"/><circle cx="60.3" cy="67.3" r="1.6" fill="#8cc43a"/><circle cx="58.9" cy="75.2" r="1.6" fill="#4e8a22"/><circle cx="52.8" cy="78.3" r="1.9" fill="#4e8a22"/><circle cx="52.6" cy="105.4" r="1.5" fill="#8cc43a"/><circle cx="56.4" cy="95.5" r="2.1" fill="#6aa82a"/><circle cx="57.5" cy="67.7" r="2.1" fill="#4e8a22"/><circle cx="50.5" cy="72.8" r="1.7" fill="#4e8a22"/><circle cx="56.7" cy="90.6" r="1.5" fill="#4e8a22"/><circle cx="61.1" cy="71.2" r="1.7" fill="#4e8a22"/><circle cx="58.6" cy="100.5" r="1.8" fill="#8cc43a"/><circle cx="54.2" cy="79.2" r="2.1" fill="#8cc43a"/><circle cx="54.4" cy="97.0" r="1.3" fill="#6aa82a"/><circle cx="53.3" cy="114.7" r="1.9" fill="#8cc43a"/><circle cx="54.7" cy="79.7" r="1.5" fill="#a8d850"/><circle cx="58.7" cy="109.7" r="2.1" fill="#6aa82a"/><circle cx="52.5" cy="111.1" r="2.1" fill="#8cc43a"/><circle cx="60.4" cy="84.4" r="2.0" fill="#a8d850"/><circle cx="54.3" cy="109.0" r="2.1" fill="#4e8a22"/><circle cx="58.3" cy="110.5" r="2.2" fill="#4e8a22"/><circle cx="55.8" cy="70.4" r="1.8" fill="#4e8a22"/><circle cx="56.8" cy="76.7" r="1.9" fill="#4e8a22"/><circle cx="56.9" cy="103.6" r="1.3" fill="#a8d850"/><circle cx="56.1" cy="100.4" r="1.9" fill="#a8d850"/><circle cx="56.8" cy="115.8" r="2.1" fill="#a8d850"/><circle cx="56.5" cy="106.9" r="1.7" fill="#6aa82a"/><circle cx="56.8" cy="69.6" r="1.9" fill="#8cc43a"/><circle cx="56.9" cy="111.3" r="1.8" fill="#4e8a22"/><circle cx="55.8" cy="105.5" r="1.7" fill="#6aa82a"/><circle cx="55.5" cy="102.0" r="1.8" fill="#a8d850"/><circle cx="61.0" cy="77.1" r="1.9" fill="#4e8a22"/><circle cx="53.0" cy="114.2" r="2.0" fill="#8cc43a"/><circle cx="58.7" cy="95.5" r="1.7" fill="#6aa82a"/><circle cx="53.1" cy="74.1" r="2.0" fill="#a8d850"/><circle cx="84.4" cy="103.0" r="2.2" fill="#a8d850"/><circle cx="81.5" cy="96.5" r="2.0" fill="#a8d850"/><circle cx="79.1" cy="79.6" r="1.4" fill="#a8d850"/><circle cx="81.9" cy="106.4" r="1.7" fill="#a8d850"/><circle cx="85.5" cy="77.1" r="2.0" fill="#a8d850"/><circle cx="82.7" cy="80.7" r="2.1" fill="#a8d850"/><circle cx="83.3" cy="87.5" r="1.4" fill="#8cc43a"/><circle cx="80.7" cy="107.2" r="2.0" fill="#4e8a22"/><circle cx="84.4" cy="98.7" r="1.7" fill="#a8d850"/><circle cx="86.0" cy="84.5" r="2.0" fill="#8cc43a"/><circle cx="78.5" cy="80.8" r="1.6" fill="#6aa82a"/><circle cx="79.2" cy="109.1" r="1.9" fill="#a8d850"/><circle cx="80.6" cy="110.0" r="1.3" fill="#4e8a22"/><circle cx="79.4" cy="100.6" r="2.2" fill="#8cc43a"/><circle cx="80.0" cy="111.2" r="1.9" fill="#6aa82a"/><circle cx="84.5" cy="98.5" r="1.6" fill="#8cc43a"/><circle cx="79.9" cy="95.9" r="1.4" fill="#6aa82a"/><circle cx="80.8" cy="111.1" r="1.6" fill="#8cc43a"/><circle cx="81.3" cy="95.1" r="1.4" fill="#6aa82a"/><circle cx="84.7" cy="74.3" r="1.9" fill="#4e8a22"/><circle cx="78.9" cy="105.4" r="1.7" fill="#8cc43a"/><circle cx="86.2" cy="85.4" r="2.0" fill="#6aa82a"/><circle cx="85.6" cy="68.4" r="1.3" fill="#a8d850"/><circle cx="81.5" cy="89.4" r="1.8" fill="#a8d850"/><circle cx="82.9" cy="101.6" r="1.9" fill="#8cc43a"/><circle cx="80.1" cy="112.2" r="2.1" fill="#8cc43a"/><circle cx="83.2" cy="109.5" r="1.9" fill="#4e8a22"/><circle cx="80.1" cy="98.4" r="1.3" fill="#a8d850"/><circle cx="82.7" cy="70.8" r="2.1" fill="#4e8a22"/><circle cx="81.5" cy="106.6" r="2.1" fill="#8cc43a"/><circle cx="81.7" cy="84.2" r="1.4" fill="#8cc43a"/><circle cx="82.9" cy="112.4" r="2.2" fill="#a8d850"/><circle cx="83.4" cy="101.1" r="2.1" fill="#4e8a22"/><circle cx="83.9" cy="87.7" r="1.9" fill="#a8d850"/><circle cx="80.7" cy="84.3" r="1.4" fill="#4e8a22"/><circle cx="85.7" cy="83.7" r="1.7" fill="#4e8a22"/><circle cx="82.7" cy="89.3" r="1.7" fill="#4e8a22"/><circle cx="80.5" cy="81.6" r="1.8" fill="#a8d850"/><circle cx="83.7" cy="71.7" r="1.3" fill="#a8d850"/><circle cx="83.2" cy="89.0" r="2.1" fill="#a8d850"/><circle cx="79.3" cy="92.1" r="1.8" fill="#6aa82a"/><circle cx="81.9" cy="72.3" r="2.2" fill="#a8d850"/><circle cx="79.9" cy="78.7" r="1.5" fill="#6aa82a"/><circle cx="83.4" cy="89.8" r="1.9" fill="#6aa82a"/><circle cx="81.5" cy="105.8" r="1.7" fill="#6aa82a"/><circle cx="85.9" cy="92.4" r="2.1" fill="#a8d850"/><circle cx="83.5" cy="93.3" r="1.3" fill="#a8d850"/><circle cx="81.6" cy="102.3" r="1.7" fill="#8cc43a"/><circle cx="80.3" cy="81.1" r="1.8" fill="#8cc43a"/><circle cx="78.0" cy="93.8" r="1.4" fill="#a8d850"/><circle cx="78.9" cy="89.5" r="2.1" fill="#8cc43a"/><circle cx="81.6" cy="78.2" r="1.7" fill="#4e8a22"/><circle cx="79.7" cy="70.8" r="1.8" fill="#4e8a22"/><circle cx="82.1" cy="100.7" r="2.1" fill="#6aa82a"/><circle cx="84.8" cy="82.5" r="1.4" fill="#4e8a22"/><circle cx="83.0" cy="112.4" r="1.7" fill="#a8d850"/><circle cx="82.2" cy="108.7" r="2.0" fill="#a8d850"/><circle cx="84.7" cy="107.6" r="1.4" fill="#8cc43a"/><circle cx="86.6" cy="85.1" r="1.5" fill="#a8d850"/><circle cx="86.1" cy="90.6" r="1.6" fill="#4e8a22"/><circle cx="81.7" cy="87.1" r="1.9" fill="#4e8a22"/><circle cx="84.6" cy="107.1" r="2.2" fill="#4e8a22"/><circle cx="82.9" cy="69.5" r="1.8" fill="#8cc43a"/><circle cx="85.1" cy="91.1" r="1.8" fill="#8cc43a"/><circle cx="76.9" cy="77.6" r="1.3" fill="#8cc43a"/><circle cx="81.0" cy="104.1" r="1.8" fill="#6aa82a"/><circle cx="82.3" cy="69.3" r="1.5" fill="#4e8a22"/><circle cx="81.4" cy="108.0" r="1.8" fill="#4e8a22"/><circle cx="80.8" cy="86.9" r="1.4" fill="#6aa82a"/><circle cx="82.2" cy="83.6" r="2.0" fill="#a8d850"/><circle cx="86.4" cy="88.4" r="2.1" fill="#4e8a22"/><circle cx="80.2" cy="105.4" r="2.0" fill="#4e8a22"/><circle cx="79.7" cy="111.3" r="2.1" fill="#8cc43a"/><circle cx="80.8" cy="91.4" r="2.0" fill="#4e8a22"/><circle cx="82.9" cy="96.5" r="1.3" fill="#a8d850"/><circle cx="83.4" cy="76.6" r="1.4" fill="#4e8a22"/><circle cx="80.1" cy="96.2" r="1.5" fill="#6aa82a"/><circle cx="79.1" cy="72.3" r="1.9" fill="#a8d850"/><circle cx="84.8" cy="106.2" r="1.8" fill="#6aa82a"/><circle cx="82.8" cy="107.5" r="2.1" fill="#4e8a22"/><circle cx="79.4" cy="111.0" r="1.4" fill="#4e8a22"/><circle cx="80.3" cy="106.3" r="1.9" fill="#4e8a22"/><circle cx="78.5" cy="78.1" r="1.5" fill="#6aa82a"/><circle cx="79.3" cy="105.8" r="1.6" fill="#6aa82a"/><circle cx="79.9" cy="98.3" r="1.9" fill="#a8d850"/><circle cx="84.6" cy="73.9" r="1.4" fill="#4e8a22"/><circle cx="78.2" cy="94.2" r="1.6" fill="#4e8a22"/><circle cx="83.7" cy="75.2" r="1.9" fill="#4e8a22"/><circle cx="85.0" cy="83.9" r="1.5" fill="#8cc43a"/><circle cx="78.9" cy="95.5" r="1.5" fill="#6aa82a"/><circle cx="150.6" cy="60.2" r="1.9" fill="#6aa82a"/><circle cx="156.8" cy="74.2" r="1.8" fill="#6aa82a"/><circle cx="157.5" cy="76.7" r="1.5" fill="#6aa82a"/><circle cx="156.7" cy="63.7" r="1.3" fill="#a8d850"/><circle cx="157.3" cy="62.5" r="1.6" fill="#8cc43a"/><circle cx="149.2" cy="75.7" r="2.2" fill="#4e8a22"/><circle cx="153.7" cy="72.2" r="1.9" fill="#6aa82a"/><circle cx="155.4" cy="65.8" r="2.0" fill="#6aa82a"/><circle cx="154.9" cy="84.9" r="2.0" fill="#a8d850"/><circle cx="155.5" cy="80.0" r="1.7" fill="#8cc43a"/><circle cx="156.4" cy="96.0" r="1.4" fill="#4e8a22"/><circle cx="155.1" cy="90.1" r="1.9" fill="#8cc43a"/><circle cx="156.0" cy="106.4" r="1.6" fill="#4e8a22"/><circle cx="151.2" cy="80.8" r="1.6" fill="#4e8a22"/><circle cx="155.5" cy="109.6" r="1.6" fill="#8cc43a"/><circle cx="151.4" cy="67.5" r="1.7" fill="#8cc43a"/><circle cx="155.7" cy="99.2" r="1.5" fill="#a8d850"/><circle cx="151.8" cy="91.3" r="1.6" fill="#4e8a22"/><circle cx="156.2" cy="104.6" r="1.9" fill="#6aa82a"/><circle cx="150.0" cy="68.1" r="1.9" fill="#6aa82a"/><circle cx="153.9" cy="103.0" r="2.2" fill="#a8d850"/><circle cx="152.7" cy="108.1" r="1.8" fill="#8cc43a"/><circle cx="154.9" cy="99.0" r="2.0" fill="#4e8a22"/><circle cx="157.2" cy="61.8" r="1.7" fill="#a8d850"/><circle cx="152.8" cy="100.9" r="1.9" fill="#a8d850"/><circle cx="150.2" cy="94.3" r="2.1" fill="#a8d850"/><circle cx="154.9" cy="93.8" r="1.5" fill="#a8d850"/><circle cx="154.2" cy="116.2" r="1.9" fill="#4e8a22"/><circle cx="154.1" cy="115.1" r="1.6" fill="#6aa82a"/><circle cx="156.1" cy="87.7" r="1.4" fill="#8cc43a"/><circle cx="152.5" cy="80.9" r="1.8" fill="#a8d850"/><circle cx="157.6" cy="75.3" r="1.7" fill="#8cc43a"/><circle cx="154.8" cy="105.0" r="1.7" fill="#4e8a22"/><circle cx="151.5" cy="84.4" r="1.5" fill="#8cc43a"/><circle cx="154.6" cy="112.5" r="1.5" fill="#6aa82a"/><circle cx="153.3" cy="116.8" r="2.0" fill="#6aa82a"/><circle cx="150.2" cy="74.0" r="2.2" fill="#8cc43a"/><circle cx="148.6" cy="65.2" r="1.3" fill="#a8d850"/><circle cx="155.4" cy="102.4" r="1.9" fill="#a8d850"/><circle cx="156.3" cy="98.0" r="1.6" fill="#6aa82a"/><circle cx="153.6" cy="70.6" r="1.5" fill="#8cc43a"/><circle cx="151.4" cy="71.1" r="1.4" fill="#a8d850"/><circle cx="154.4" cy="62.0" r="1.8" fill="#4e8a22"/><circle cx="153.3" cy="89.4" r="1.7" fill="#8cc43a"/><circle cx="154.0" cy="94.9" r="1.5" fill="#6aa82a"/><circle cx="151.8" cy="109.2" r="1.8" fill="#8cc43a"/><circle cx="153.4" cy="79.7" r="1.6" fill="#6aa82a"/><circle cx="152.3" cy="83.0" r="1.9" fill="#6aa82a"/><circle cx="153.7" cy="97.1" r="2.1" fill="#4e8a22"/><circle cx="157.4" cy="76.1" r="1.9" fill="#a8d850"/><circle cx="155.0" cy="114.7" r="1.5" fill="#4e8a22"/><circle cx="155.1" cy="98.6" r="1.5" fill="#a8d850"/><circle cx="153.5" cy="76.1" r="2.1" fill="#8cc43a"/><circle cx="150.7" cy="92.5" r="1.3" fill="#4e8a22"/><circle cx="152.4" cy="104.5" r="2.1" fill="#4e8a22"/><circle cx="154.1" cy="84.5" r="1.7" fill="#a8d850"/><circle cx="156.0" cy="87.3" r="1.9" fill="#6aa82a"/><circle cx="152.1" cy="100.3" r="2.0" fill="#8cc43a"/><circle cx="154.7" cy="101.7" r="1.7" fill="#4e8a22"/><circle cx="152.2" cy="116.0" r="1.8" fill="#8cc43a"/><circle cx="154.5" cy="96.0" r="1.4" fill="#8cc43a"/><circle cx="152.8" cy="74.8" r="2.0" fill="#a8d850"/><circle cx="153.3" cy="63.7" r="1.5" fill="#6aa82a"/><circle cx="151.9" cy="115.9" r="2.1" fill="#4e8a22"/><circle cx="151.8" cy="81.8" r="1.9" fill="#a8d850"/><circle cx="154.0" cy="98.9" r="2.0" fill="#6aa82a"/><circle cx="151.4" cy="102.9" r="1.8" fill="#8cc43a"/><circle cx="150.2" cy="86.8" r="2.0" fill="#8cc43a"/><circle cx="149.8" cy="62.5" r="1.8" fill="#6aa82a"/><circle cx="153.3" cy="99.3" r="1.7" fill="#4e8a22"/><circle cx="156.0" cy="98.0" r="1.7" fill="#8cc43a"/><circle cx="155.0" cy="82.2" r="1.8" fill="#4e8a22"/><circle cx="154.5" cy="86.2" r="2.1" fill="#6aa82a"/><circle cx="153.4" cy="66.2" r="2.0" fill="#4e8a22"/><circle cx="150.9" cy="73.1" r="1.6" fill="#8cc43a"/><circle cx="154.3" cy="63.8" r="1.6" fill="#4e8a22"/><circle cx="154.3" cy="114.1" r="2.0" fill="#6aa82a"/><circle cx="157.2" cy="83.1" r="1.8" fill="#6aa82a"/><circle cx="154.5" cy="58.6" r="2.1" fill="#8cc43a"/><circle cx="148.6" cy="66.1" r="1.5" fill="#8cc43a"/><circle cx="151.8" cy="103.5" r="1.9" fill="#4e8a22"/><circle cx="152.8" cy="108.3" r="1.4" fill="#6aa82a"/><circle cx="150.0" cy="57.4" r="2.1" fill="#4e8a22"/><circle cx="153.9" cy="69.7" r="1.9" fill="#a8d850"/><circle cx="150.0" cy="88.4" r="2.2" fill="#8cc43a"/><circle cx="151.4" cy="108.1" r="1.6" fill="#a8d850"/><circle cx="150.9" cy="72.7" r="1.9" fill="#6aa82a"/><circle cx="156.8" cy="94.3" r="2.1" fill="#6aa82a"/><circle cx="153.7" cy="98.3" r="2.2" fill="#8cc43a"/><circle cx="153.8" cy="100.0" r="2.1" fill="#4e8a22"/><path d="M17 55 Q26 58 26 68 L20 68 Q16 62 17 55 Z" fill="#8cc848"/><path d="M158 55 Q148 58 150 70 L156 70 Q160 62 158 55 Z" fill="#8cc848"/><ellipse cx="41" cy="64" rx="7" ry="5" fill="#3e7a30"/><ellipse cx="105" cy="65" rx="7" ry="6" fill="#3e7a30"/><ellipse cx="137" cy="64" rx="8" ry="5" fill="#3e7a30"/><ellipse cx="123" cy="68" rx="5" ry="3" fill="#3e7a30"/><ellipse cx="80" cy="63" rx="6" ry="2.5" fill="#3e7a30"/><rect x="127" y="121" width="23" height="22" fill="#7a9e9c"/><rect x="127.00" y="122.69" width="1.87" height="1.79" fill="#2a5454"/><rect x="127.00" y="127.77" width="1.87" height="1.79" fill="#d2e4e2"/><rect x="127.00" y="129.46" width="1.87" height="1.79" fill="#2a5454"/><rect x="127.00" y="134.54" width="1.87" height="1.79" fill="#2a5454"/><rect x="127.00" y="136.23" width="1.87" height="1.79" fill="#d2e4e2"/><rect x="127.00" y="137.92" width="1.87" height="1.79" fill="#d2e4e2"/><rect x="127.00" y="141.31" width="1.87" height="1.79" fill="#d2e4e2"/><rect x="128.77" y="121.00" width="1.87" height="1.79" fill="#d2e4e2"/><rect x="128.77" y="124.38" width="1.87" height="1.79" fill="#d2e4e2"/><rect x="128.77" y="126.08" width="1.87" height="1.79" fill="#d2e4e2"/><rect x="128.77" y="127.77" width="1.87" height="1.79" fill="#d2e4e2"/><rect x="128.77" y="131.15" width="1.87" height="1.79" fill="#d2e4e2"/><rect x="128.77" y="132.85" width="1.87" height="1.79" fill="#d2e4e2"/><rect x="128.77" y="134.54" width="1.87" height="1.79" fill="#2a5454"/><rect x="128.77" y="137.92" width="1.87" height="1.79" fill="#d2e4e2"/><rect x="128.77" y="139.62" width="1.87" height="1.79" fill="#d2e4e2"/><rect x="128.77" y="141.31" width="1.87" height="1.79" fill="#2a5454"/><rect x="130.54" y="121.00" width="1.87" height="1.79" fill="#d2e4e2"/><rect x="130.54" y="122.69" width="1.87" height="1.79" fill="#d2e4e2"/><rect x="130.54" y="124.38" width="1.87" height="1.79" fill="#d2e4e2"/><rect x="130.54" y="126.08" width="1.87" height="1.79" fill="#2a5454"/><rect x="130.54" y="127.77" width="1.87" height="1.79" fill="#d2e4e2"/><rect x="130.54" y="129.46" width="1.87" height="1.79" fill="#2a5454"/><rect x="130.54" y="131.15" width="1.87" height="1.79" fill="#d2e4e2"/><rect x="130.54" y="132.85" width="1.87" height="1.79" fill="#d2e4e2"/><rect x="130.54" y="134.54" width="1.87" height="1.79" fill="#d2e4e2"/><rect x="130.54" y="136.23" width="1.87" height="1.79" fill="#2a5454"/><rect x="130.54" y="139.62" width="1.87" height="1.79" fill="#d2e4e2"/><rect x="130.54" y="141.31" width="1.87" height="1.79" fill="#d2e4e2"/><rect x="132.31" y="121.00" width="1.87" height="1.79" fill="#d2e4e2"/><rect x="132.31" y="122.69" width="1.87" height="1.79" fill="#2a5454"/><rect x="132.31" y="124.38" width="1.87" height="1.79" fill="#d2e4e2"/><rect x="132.31" y="126.08" width="1.87" height="1.79" fill="#d2e4e2"/><rect x="132.31" y="127.77" width="1.87" height="1.79" fill="#2a5454"/><rect x="132.31" y="129.46" width="1.87" height="1.79" fill="#2a5454"/><rect x="132.31" y="131.15" width="1.87" height="1.79" fill="#d2e4e2"/><rect x="132.31" y="132.85" width="1.87" height="1.79" fill="#d2e4e2"/><rect x="132.31" y="134.54" width="1.87" height="1.79" fill="#2a5454"/><rect x="132.31" y="136.23" width="1.87" height="1.79" fill="#2a5454"/><rect x="132.31" y="137.92" width="1.87" height="1.79" fill="#d2e4e2"/><rect x="132.31" y="139.62" width="1.87" height="1.79" fill="#d2e4e2"/><rect x="134.08" y="122.69" width="1.87" height="1.79" fill="#2a5454"/><rect x="134.08" y="126.08" width="1.87" height="1.79" fill="#2a5454"/><rect x="134.08" y="127.77" width="1.87" height="1.79" fill="#d2e4e2"/><rect x="134.08" y="129.46" width="1.87" height="1.79" fill="#d2e4e2"/><rect x="134.08" y="131.15" width="1.87" height="1.79" fill="#2a5454"/><rect x="134.08" y="132.85" width="1.87" height="1.79" fill="#2a5454"/><rect x="134.08" y="134.54" width="1.87" height="1.79" fill="#d2e4e2"/><rect x="134.08" y="139.62" width="1.87" height="1.79" fill="#d2e4e2"/><rect x="135.85" y="121.00" width="1.87" height="1.79" fill="#d2e4e2"/><rect x="135.85" y="122.69" width="1.87" height="1.79" fill="#2a5454"/><rect x="135.85" y="124.38" width="1.87" height="1.79" fill="#d2e4e2"/><rect x="135.85" y="126.08" width="1.87" height="1.79" fill="#2a5454"/><rect x="135.85" y="129.46" width="1.87" height="1.79" fill="#2a5454"/><rect x="135.85" y="132.85" width="1.87" height="1.79" fill="#d2e4e2"/><rect x="135.85" y="134.54" width="1.87" height="1.79" fill="#2a5454"/><rect x="135.85" y="136.23" width="1.87" height="1.79" fill="#d2e4e2"/><rect x="135.85" y="137.92" width="1.87" height="1.79" fill="#d2e4e2"/><rect x="135.85" y="139.62" width="1.87" height="1.79" fill="#d2e4e2"/><rect x="135.85" y="141.31" width="1.87" height="1.79" fill="#d2e4e2"/><rect x="137.62" y="121.00" width="1.87" height="1.79" fill="#2a5454"/><rect x="137.62" y="122.69" width="1.87" height="1.79" fill="#d2e4e2"/><rect x="137.62" y="124.38" width="1.87" height="1.79" fill="#d2e4e2"/><rect x="137.62" y="126.08" width="1.87" height="1.79" fill="#d2e4e2"/><rect x="137.62" y="127.77" width="1.87" height="1.79" fill="#2a5454"/><rect x="137.62" y="129.46" width="1.87" height="1.79" fill="#d2e4e2"/><rect x="137.62" y="131.15" width="1.87" height="1.79" fill="#d2e4e2"/><rect x="137.62" y="132.85" width="1.87" height="1.79" fill="#d2e4e2"/><rect x="137.62" y="134.54" width="1.87" height="1.79" fill="#d2e4e2"/><rect x="137.62" y="136.23" width="1.87" height="1.79" fill="#2a5454"/><rect x="137.62" y="137.92" width="1.87" height="1.79" fill="#d2e4e2"/><rect x="137.62" y="139.62" width="1.87" height="1.79" fill="#d2e4e2"/><rect x="137.62" y="141.31" width="1.87" height="1.79" fill="#2a5454"/><rect x="139.38" y="121.00" width="1.87" height="1.79" fill="#2a5454"/><rect x="139.38" y="122.69" width="1.87" height="1.79" fill="#d2e4e2"/><rect x="139.38" y="124.38" width="1.87" height="1.79" fill="#d2e4e2"/><rect x="139.38" y="126.08" width="1.87" height="1.79" fill="#d2e4e2"/><rect x="139.38" y="127.77" width="1.87" height="1.79" fill="#d2e4e2"/><rect x="139.38" y="129.46" width="1.87" height="1.79" fill="#d2e4e2"/><rect x="139.38" y="131.15" width="1.87" height="1.79" fill="#d2e4e2"/><rect x="139.38" y="132.85" width="1.87" height="1.79" fill="#d2e4e2"/><rect x="139.38" y="134.54" width="1.87" height="1.79" fill="#d2e4e2"/><rect x="139.38" y="136.23" width="1.87" height="1.79" fill="#d2e4e2"/><rect x="139.38" y="137.92" width="1.87" height="1.79" fill="#2a5454"/><rect x="139.38" y="141.31" width="1.87" height="1.79" fill="#2a5454"/><rect x="141.15" y="121.00" width="1.87" height="1.79" fill="#d2e4e2"/><rect x="141.15" y="122.69" width="1.87" height="1.79" fill="#d2e4e2"/><rect x="141.15" y="124.38" width="1.87" height="1.79" fill="#d2e4e2"/><rect x="141.15" y="126.08" width="1.87" height="1.79" fill="#2a5454"/><rect x="141.15" y="127.77" width="1.87" height="1.79" fill="#d2e4e2"/><rect x="141.15" y="132.85" width="1.87" height="1.79" fill="#d2e4e2"/><rect x="141.15" y="134.54" width="1.87" height="1.79" fill="#d2e4e2"/><rect x="141.15" y="136.23" width="1.87" height="1.79" fill="#d2e4e2"/><rect x="141.15" y="137.92" width="1.87" height="1.79" fill="#2a5454"/><rect x="141.15" y="139.62" width="1.87" height="1.79" fill="#d2e4e2"/><rect x="141.15" y="141.31" width="1.87" height="1.79" fill="#d2e4e2"/><rect x="142.92" y="122.69" width="1.87" height="1.79" fill="#d2e4e2"/><rect x="142.92" y="126.08" width="1.87" height="1.79" fill="#d2e4e2"/><rect x="142.92" y="129.46" width="1.87" height="1.79" fill="#d2e4e2"/><rect x="142.92" y="131.15" width="1.87" height="1.79" fill="#d2e4e2"/><rect x="142.92" y="132.85" width="1.87" height="1.79" fill="#2a5454"/><rect x="142.92" y="134.54" width="1.87" height="1.79" fill="#d2e4e2"/><rect x="142.92" y="137.92" width="1.87" height="1.79" fill="#2a5454"/><rect x="142.92" y="139.62" width="1.87" height="1.79" fill="#2a5454"/><rect x="144.69" y="121.00" width="1.87" height="1.79" fill="#2a5454"/><rect x="144.69" y="124.38" width="1.87" height="1.79" fill="#2a5454"/><rect x="144.69" y="126.08" width="1.87" height="1.79" fill="#d2e4e2"/><rect x="144.69" y="127.77" width="1.87" height="1.79" fill="#d2e4e2"/><rect x="144.69" y="131.15" width="1.87" height="1.79" fill="#d2e4e2"/><rect x="144.69" y="134.54" width="1.87" height="1.79" fill="#d2e4e2"/><rect x="144.69" y="136.23" width="1.87" height="1.79" fill="#2a5454"/><rect x="144.69" y="137.92" width="1.87" height="1.79" fill="#2a5454"/><rect x="144.69" y="139.62" width="1.87" height="1.79" fill="#d2e4e2"/><rect x="144.69" y="141.31" width="1.87" height="1.79" fill="#2a5454"/><rect x="146.46" y="121.00" width="1.87" height="1.79" fill="#2a5454"/><rect x="146.46" y="122.69" width="1.87" height="1.79" fill="#d2e4e2"/><rect x="146.46" y="124.38" width="1.87" height="1.79" fill="#d2e4e2"/><rect x="146.46" y="126.08" width="1.87" height="1.79" fill="#d2e4e2"/><rect x="146.46" y="127.77" width="1.87" height="1.79" fill="#2a5454"/><rect x="146.46" y="131.15" width="1.87" height="1.79" fill="#d2e4e2"/><rect x="146.46" y="134.54" width="1.87" height="1.79" fill="#d2e4e2"/><rect x="146.46" y="136.23" width="1.87" height="1.79" fill="#d2e4e2"/><rect x="146.46" y="141.31" width="1.87" height="1.79" fill="#d2e4e2"/><rect x="148.23" y="122.69" width="1.87" height="1.79" fill="#d2e4e2"/><rect x="148.23" y="126.08" width="1.87" height="1.79" fill="#d2e4e2"/><rect x="148.23" y="129.46" width="1.87" height="1.79" fill="#d2e4e2"/><rect x="148.23" y="131.15" width="1.87" height="1.79" fill="#d2e4e2"/><rect x="148.23" y="132.85" width="1.87" height="1.79" fill="#d2e4e2"/><rect x="148.23" y="134.54" width="1.87" height="1.79" fill="#d2e4e2"/><rect x="148.23" y="136.23" width="1.87" height="1.79" fill="#d2e4e2"/><rect x="148.23" y="139.62" width="1.87" height="1.79" fill="#d2e4e2"/><rect x="148.23" y="141.31" width="1.87" height="1.79" fill="#d2e4e2"/><rect x="127.00" y="121.00" width="5.31" height="5.08" fill="#2a5050"/><rect x="128.77" y="122.69" width="1.77" height="1.69" fill="#0e2e2e"/><rect x="144.69" y="121.00" width="5.31" height="5.08" fill="#2a5050"/><rect x="146.46" y="122.69" width="1.77" height="1.69" fill="#0e2e2e"/><rect x="127.00" y="137.92" width="5.31" height="5.08" fill="#2a5050"/><rect x="128.77" y="139.62" width="1.77" height="1.69" fill="#0e2e2e"/></svg><div style="left:2px;top:144px;width:16px;height:16px;background:linear-gradient(135deg,#e6f6f6,#c6eeee)"><svg style="left:0;top:0" width="16" height="16" viewBox="0 0 16 16">
<path d="M3.5 2.5 L10 2.5 L14.5 8 L10 13.5 L3.5 13.5 L6.5 10.5 L4 8 L6.5 5.5 Z" fill="#1a9e9e"/>
<path d="M8 2.5 L10 2.5 L14.5 8 L10 13.5 L8 13.5 L11 8 Z" fill="#0b6f72"/>
<path d="M3.5 2.5 L6.5 5.5 L9 5.5 L7 2.5 Z" fill="#2fc0bd"/>
</svg></div><div style="left:-1px;top:162px;width:171px;height:18px;background:#9c9c9c;border-left:1px solid #a3a3a3;border-right:1px solid #a3a3a3"></div><div class="m" style="left:0;top:164.5px;width:169px;text-align:center;color:#fff;line-height:12px;font-size:11px;letter-spacing:-0.6px">20.max</div></div>
<div style="left:381px;top:330px;width:171px;height:181px;background:#838383;border:1px solid #a3a3a3;border-bottom:none;overflow:hidden"><svg style="left:0;top:0" width="169" height="162" viewBox="1 1 169 162"><rect x="0" y="17" width="171" height="127" fill="#f6f0ec"/><circle cx="47.9" cy="46.1" r="4.5" fill="#7a6a60"/><circle cx="46.7" cy="44.900000000000006" r="3.9" fill="#e6dfda"/><circle cx="46" cy="44.2" r="2.2" fill="#f0ebe6"/><circle cx="48.1" cy="57.5" r="6.5" fill="#7a6a60"/><circle cx="46.900000000000006" cy="56.300000000000004" r="5.9" fill="#e6dfda"/><circle cx="46.2" cy="55.6" r="3.2" fill="#f0ebe6"/><circle cx="58.3" cy="58.6" r="5.5" fill="#7a6a60"/><circle cx="57.1" cy="57.400000000000006" r="4.9" fill="#e6dfda"/><circle cx="56.4" cy="56.7" r="2.8" fill="#f0ebe6"/><circle cx="33.3" cy="67.7" r="8" fill="#7a6a60"/><circle cx="32.1" cy="66.5" r="7.4" fill="#e6dfda"/><circle cx="31.4" cy="65.8" r="4.0" fill="#f0ebe6"/><circle cx="49.199999999999996" cy="67.7" r="7" fill="#7a6a60"/><circle cx="48.0" cy="66.5" r="6.4" fill="#e6dfda"/><circle cx="47.3" cy="65.8" r="3.5" fill="#f0ebe6"/><circle cx="61.699999999999996" cy="73.4" r="8.5" fill="#7a6a60"/><circle cx="60.5" cy="72.2" r="7.9" fill="#e6dfda"/><circle cx="59.8" cy="71.5" r="4.2" fill="#f0ebe6"/><circle cx="35.6" cy="80.2" r="6.5" fill="#7a6a60"/><circle cx="34.400000000000006" cy="79.0" r="5.9" fill="#e6dfda"/><circle cx="33.7" cy="78.3" r="3.2" fill="#f0ebe6"/><circle cx="48.1" cy="80.2" r="6.5" fill="#7a6a60"/><circle cx="46.900000000000006" cy="79.0" r="5.9" fill="#e6dfda"/><circle cx="46.2" cy="78.3" r="3.2" fill="#f0ebe6"/><circle cx="20.9" cy="89.30000000000001" r="6.5" fill="#7a6a60"/><circle cx="19.7" cy="88.10000000000001" r="5.9" fill="#e6dfda"/><circle cx="19" cy="87.4" r="3.2" fill="#f0ebe6"/><circle cx="32.2" cy="91.60000000000001" r="4.5" fill="#7a6a60"/><circle cx="31.0" cy="90.4" r="3.9" fill="#e6dfda"/><circle cx="30.3" cy="89.7" r="2.2" fill="#f0ebe6"/><circle cx="42.4" cy="91.60000000000001" r="6" fill="#7a6a60"/><circle cx="41.2" cy="90.4" r="5.4" fill="#e6dfda"/><circle cx="40.5" cy="89.7" r="3.0" fill="#f0ebe6"/><circle cx="49.199999999999996" cy="94.9" r="5" fill="#7a6a60"/><circle cx="48.0" cy="93.7" r="4.4" fill="#e6dfda"/><circle cx="47.3" cy="93" r="2.5" fill="#f0ebe6"/><circle cx="30.9" cy="99.5" r="4.5" fill="#7a6a60"/><circle cx="29.7" cy="98.3" r="3.9" fill="#e6dfda"/><circle cx="29" cy="97.6" r="2.2" fill="#f0ebe6"/><circle cx="46.9" cy="107.5" r="5.5" fill="#7a6a60"/><circle cx="45.7" cy="106.3" r="4.9" fill="#e6dfda"/><circle cx="45" cy="105.6" r="2.8" fill="#f0ebe6"/><circle cx="46.9" cy="115.4" r="5" fill="#7a6a60"/><circle cx="45.7" cy="114.2" r="4.4" fill="#e6dfda"/><circle cx="45" cy="113.5" r="2.5" fill="#f0ebe6"/><circle cx="152.0" cy="88.4" r="2.0" fill="#6ac4d0"/><circle cx="150.5" cy="96.4" r="1.5" fill="#7acad6"/><circle cx="110.4" cy="120.8" r="2.1" fill="#4ab0c4"/><circle cx="142.7" cy="95.4" r="2.2" fill="#2a88a0"/><circle cx="136.2" cy="109.9" r="2.3" fill="#3a98b0"/><circle cx="119.6" cy="120.7" r="1.5" fill="#4ab0c4"/><circle cx="72.1" cy="70.6" r="2.8" fill="#7acad6"/><circle cx="129.9" cy="112.2" r="1.9" fill="#3a98b0"/><circle cx="133.3" cy="111.5" r="1.7" fill="#2a88a0"/><circle cx="116.7" cy="115.5" r="2.3" fill="#c0a088"/><circle cx="100.0" cy="115.9" r="2.1" fill="#7acad6"/><circle cx="98.2" cy="111.5" r="2.5" fill="#3a98b0"/><circle cx="139.2" cy="111.0" r="1.6" fill="#6ac4d0"/><circle cx="154.2" cy="89.5" r="2.4" fill="#3a98b0"/><circle cx="133.3" cy="114.3" r="2.6" fill="#7acad6"/><circle cx="76.6" cy="73.2" r="1.2" fill="#7acad6"/><circle cx="135.9" cy="110.4" r="2.7" fill="#3a98b0"/><circle cx="146.3" cy="99.5" r="2.5" fill="#2a88a0"/><circle cx="80.5" cy="99.4" r="1.3" fill="#6ac4d0"/><circle cx="143.1" cy="99.6" r="1.6" fill="#2a88a0"/><circle cx="131.4" cy="117.4" r="2.4" fill="#3a98b0"/><circle cx="117.5" cy="115.2" r="2.0" fill="#7acad6"/><circle cx="149.2" cy="86.1" r="2.1" fill="#2a88a0"/><circle cx="78.0" cy="88.7" r="2.1" fill="#7acad6"/><circle cx="136.6" cy="106.5" r="1.9" fill="#7acad6"/><circle cx="87.7" cy="111.6" r="1.4" fill="#3a98b0"/><circle cx="121.6" cy="113.3" r="1.4" fill="#4ab0c4"/><circle cx="109.1" cy="116.0" r="2.2" fill="#2a88a0"/><circle cx="153.0" cy="91.4" r="2.3" fill="#3a98b0"/><circle cx="107.9" cy="113.1" r="2.4" fill="#7acad6"/><circle cx="83.5" cy="95.1" r="2.6" fill="#2a88a0"/><circle cx="129.6" cy="114.9" r="2.3" fill="#c0a088"/><circle cx="136.4" cy="103.9" r="1.4" fill="#2a88a0"/><circle cx="80.9" cy="108.5" r="2.5" fill="#7acad6"/><circle cx="116.2" cy="118.6" r="2.0" fill="#7acad6"/><circle cx="80.2" cy="107.3" r="1.7" fill="#6ac4d0"/><circle cx="95.5" cy="116.6" r="2.5" fill="#c0a088"/><circle cx="153.7" cy="73.9" r="2.0" fill="#2a88a0"/><circle cx="73.6" cy="74.4" r="2.0" fill="#2a88a0"/><circle cx="130.0" cy="112.9" r="2.3" fill="#c0a088"/><circle cx="128.1" cy="114.1" r="1.7" fill="#3a98b0"/><circle cx="150.8" cy="98.6" r="1.3" fill="#4ab0c4"/><circle cx="148.7" cy="88.8" r="2.6" fill="#7acad6"/><circle cx="78.9" cy="99.4" r="2.3" fill="#7acad6"/><circle cx="73.8" cy="88.1" r="1.6" fill="#6ac4d0"/><circle cx="76.1" cy="79.2" r="2.7" fill="#7acad6"/><circle cx="139.0" cy="106.2" r="1.3" fill="#3a98b0"/><circle cx="150.0" cy="89.5" r="2.7" fill="#7acad6"/><circle cx="83.3" cy="103.1" r="2.8" fill="#4ab0c4"/><circle cx="149.5" cy="88.0" r="1.8" fill="#6ac4d0"/><circle cx="103.5" cy="113.6" r="1.7" fill="#4ab0c4"/><circle cx="148.1" cy="102.1" r="2.6" fill="#3a98b0"/><circle cx="113.6" cy="115.4" r="1.5" fill="#6ac4d0"/><circle cx="129.6" cy="113.1" r="1.6" fill="#2a88a0"/><circle cx="148.7" cy="89.1" r="1.4" fill="#6ac4d0"/><circle cx="94.3" cy="117.3" r="2.0" fill="#c0a088"/><circle cx="150.5" cy="69.1" r="2.8" fill="#3a98b0"/><circle cx="78.8" cy="75.9" r="1.9" fill="#3a98b0"/><circle cx="76.2" cy="98.6" r="2.5" fill="#7acad6"/><circle cx="139.5" cy="106.0" r="1.6" fill="#7acad6"/><circle cx="102.8" cy="120.0" r="2.6" fill="#7acad6"/><circle cx="72.6" cy="81.8" r="1.4" fill="#3a98b0"/><circle cx="115.1" cy="118.2" r="2.0" fill="#7acad6"/><circle cx="80.0" cy="95.4" r="1.4" fill="#6ac4d0"/><circle cx="143.3" cy="105.2" r="2.6" fill="#4ab0c4"/><circle cx="91.7" cy="107.7" r="1.8" fill="#6ac4d0"/><circle cx="80.2" cy="97.0" r="1.4" fill="#4ab0c4"/><circle cx="86.9" cy="110.7" r="1.9" fill="#7acad6"/><circle cx="136.5" cy="106.2" r="1.3" fill="#7acad6"/><circle cx="135.4" cy="111.1" r="1.2" fill="#3a98b0"/><circle cx="133.1" cy="112.0" r="2.5" fill="#2a88a0"/><circle cx="76.6" cy="101.0" r="2.2" fill="#7acad6"/><circle cx="120.3" cy="119.3" r="1.8" fill="#c0a088"/><circle cx="97.7" cy="116.0" r="1.5" fill="#2a88a0"/><circle cx="74.8" cy="77.0" r="1.6" fill="#3a98b0"/><circle cx="112.5" cy="115.9" r="2.6" fill="#2a88a0"/><circle cx="131.7" cy="108.2" r="2.2" fill="#2a88a0"/><circle cx="136.2" cy="112.2" r="2.1" fill="#6ac4d0"/><circle cx="73.1" cy="66.5" r="2.8" fill="#4ab0c4"/><circle cx="81.4" cy="105.2" r="2.7" fill="#3a98b0"/><circle cx="111.0" cy="121.9" r="1.5" fill="#c0a088"/><circle cx="91.1" cy="112.4" r="2.4" fill="#2a88a0"/><circle cx="81.0" cy="103.2" r="1.5" fill="#6ac4d0"/><circle cx="79.7" cy="91.4" r="1.6" fill="#2a88a0"/><circle cx="109.1" cy="117.4" r="1.7" fill="#4ab0c4"/><circle cx="122.9" cy="114.6" r="2.8" fill="#3a98b0"/><circle cx="131.6" cy="111.9" r="2.4" fill="#4ab0c4"/><path d="M86 46 l3 -2 l2 3 M92 43 l3 -3 M88 41 l2 2" stroke="#3aa0c0" stroke-width="2"/><rect x="127" y="118" width="23" height="20" fill="#7a9e9c"/><rect x="127.00" y="118.00" width="1.87" height="1.64" fill="#d2e4e2"/><rect x="127.00" y="119.54" width="1.87" height="1.64" fill="#2a5454"/><rect x="127.00" y="121.08" width="1.87" height="1.64" fill="#2a5454"/><rect x="127.00" y="122.62" width="1.87" height="1.64" fill="#d2e4e2"/><rect x="127.00" y="124.15" width="1.87" height="1.64" fill="#d2e4e2"/><rect x="127.00" y="128.77" width="1.87" height="1.64" fill="#2a5454"/><rect x="127.00" y="130.31" width="1.87" height="1.64" fill="#2a5454"/><rect x="127.00" y="131.85" width="1.87" height="1.64" fill="#d2e4e2"/><rect x="127.00" y="133.38" width="1.87" height="1.64" fill="#d2e4e2"/><rect x="127.00" y="134.92" width="1.87" height="1.64" fill="#d2e4e2"/><rect x="127.00" y="136.46" width="1.87" height="1.64" fill="#2a5454"/><rect x="128.77" y="118.00" width="1.87" height="1.64" fill="#d2e4e2"/><rect x="128.77" y="121.08" width="1.87" height="1.64" fill="#d2e4e2"/><rect x="128.77" y="122.62" width="1.87" height="1.64" fill="#d2e4e2"/><rect x="128.77" y="124.15" width="1.87" height="1.64" fill="#d2e4e2"/><rect x="128.77" y="127.23" width="1.87" height="1.64" fill="#2a5454"/><rect x="128.77" y="130.31" width="1.87" height="1.64" fill="#2a5454"/><rect x="128.77" y="131.85" width="1.87" height="1.64" fill="#d2e4e2"/><rect x="128.77" y="133.38" width="1.87" height="1.64" fill="#d2e4e2"/><rect x="128.77" y="134.92" width="1.87" height="1.64" fill="#d2e4e2"/><rect x="128.77" y="136.46" width="1.87" height="1.64" fill="#d2e4e2"/><rect x="130.54" y="119.54" width="1.87" height="1.64" fill="#d2e4e2"/><rect x="130.54" y="121.08" width="1.87" height="1.64" fill="#d2e4e2"/><rect x="130.54" y="124.15" width="1.87" height="1.64" fill="#d2e4e2"/><rect x="130.54" y="127.23" width="1.87" height="1.64" fill="#d2e4e2"/><rect x="130.54" y="128.77" width="1.87" height="1.64" fill="#2a5454"/><rect x="130.54" y="130.31" width="1.87" height="1.64" fill="#d2e4e2"/><rect x="130.54" y="131.85" width="1.87" height="1.64" fill="#d2e4e2"/><rect x="130.54" y="133.38" width="1.87" height="1.64" fill="#d2e4e2"/><rect x="130.54" y="134.92" width="1.87" height="1.64" fill="#d2e4e2"/><rect x="132.31" y="118.00" width="1.87" height="1.64" fill="#d2e4e2"/><rect x="132.31" y="121.08" width="1.87" height="1.64" fill="#d2e4e2"/><rect x="132.31" y="128.77" width="1.87" height="1.64" fill="#2a5454"/><rect x="132.31" y="130.31" width="1.87" height="1.64" fill="#2a5454"/><rect x="132.31" y="131.85" width="1.87" height="1.64" fill="#d2e4e2"/><rect x="132.31" y="133.38" width="1.87" height="1.64" fill="#d2e4e2"/><rect x="132.31" y="136.46" width="1.87" height="1.64" fill="#d2e4e2"/><rect x="134.08" y="121.08" width="1.87" height="1.64" fill="#d2e4e2"/><rect x="134.08" y="122.62" width="1.87" height="1.64" fill="#d2e4e2"/><rect x="134.08" y="124.15" width="1.87" height="1.64" fill="#d2e4e2"/><rect x="134.08" y="125.69" width="1.87" height="1.64" fill="#d2e4e2"/><rect x="134.08" y="128.77" width="1.87" height="1.64" fill="#d2e4e2"/><rect x="134.08" y="130.31" width="1.87" height="1.64" fill="#d2e4e2"/><rect x="134.08" y="131.85" width="1.87" height="1.64" fill="#d2e4e2"/><rect x="134.08" y="133.38" width="1.87" height="1.64" fill="#2a5454"/><rect x="134.08" y="136.46" width="1.87" height="1.64" fill="#d2e4e2"/><rect x="135.85" y="118.00" width="1.87" height="1.64" fill="#d2e4e2"/><rect x="135.85" y="119.54" width="1.87" height="1.64" fill="#2a5454"/><rect x="135.85" y="121.08" width="1.87" height="1.64" fill="#2a5454"/><rect x="135.85" y="122.62" width="1.87" height="1.64" fill="#d2e4e2"/><rect x="135.85" y="124.15" width="1.87" height="1.64" fill="#2a5454"/><rect x="135.85" y="125.69" width="1.87" height="1.64" fill="#2a5454"/><rect x="135.85" y="127.23" width="1.87" height="1.64" fill="#2a5454"/><rect x="135.85" y="128.77" width="1.87" height="1.64" fill="#d2e4e2"/><rect x="135.85" y="130.31" width="1.87" height="1.64" fill="#d2e4e2"/><rect x="135.85" y="131.85" width="1.87" height="1.64" fill="#d2e4e2"/><rect x="135.85" y="134.92" width="1.87" height="1.64" fill="#d2e4e2"/><rect x="135.85" y="136.46" width="1.87" height="1.64" fill="#2a5454"/><rect x="137.62" y="118.00" width="1.87" height="1.64" fill="#d2e4e2"/><rect x="137.62" y="119.54" width="1.87" height="1.64" fill="#d2e4e2"/><rect x="137.62" y="121.08" width="1.87" height="1.64" fill="#d2e4e2"/><rect x="137.62" y="125.69" width="1.87" height="1.64" fill="#d2e4e2"/><rect x="137.62" y="127.23" width="1.87" height="1.64" fill="#2a5454"/><rect x="137.62" y="128.77" width="1.87" height="1.64" fill="#2a5454"/><rect x="137.62" y="133.38" width="1.87" height="1.64" fill="#d2e4e2"/><rect x="139.38" y="118.00" width="1.87" height="1.64" fill="#2a5454"/><rect x="139.38" y="121.08" width="1.87" height="1.64" fill="#d2e4e2"/><rect x="139.38" y="122.62" width="1.87" height="1.64" fill="#d2e4e2"/><rect x="139.38" y="124.15" width="1.87" height="1.64" fill="#d2e4e2"/><rect x="139.38" y="127.23" width="1.87" height="1.64" fill="#d2e4e2"/><rect x="139.38" y="128.77" width="1.87" height="1.64" fill="#d2e4e2"/><rect x="139.38" y="133.38" width="1.87" height="1.64" fill="#d2e4e2"/><rect x="139.38" y="136.46" width="1.87" height="1.64" fill="#d2e4e2"/><rect x="141.15" y="118.00" width="1.87" height="1.64" fill="#d2e4e2"/><rect x="141.15" y="119.54" width="1.87" height="1.64" fill="#d2e4e2"/><rect x="141.15" y="121.08" width="1.87" height="1.64" fill="#d2e4e2"/><rect x="141.15" y="122.62" width="1.87" height="1.64" fill="#d2e4e2"/><rect x="141.15" y="124.15" width="1.87" height="1.64" fill="#d2e4e2"/><rect x="141.15" y="125.69" width="1.87" height="1.64" fill="#d2e4e2"/><rect x="141.15" y="130.31" width="1.87" height="1.64" fill="#2a5454"/><rect x="141.15" y="131.85" width="1.87" height="1.64" fill="#d2e4e2"/><rect x="141.15" y="133.38" width="1.87" height="1.64" fill="#d2e4e2"/><rect x="141.15" y="136.46" width="1.87" height="1.64" fill="#2a5454"/><rect x="142.92" y="118.00" width="1.87" height="1.64" fill="#2a5454"/><rect x="142.92" y="119.54" width="1.87" height="1.64" fill="#d2e4e2"/><rect x="142.92" y="121.08" width="1.87" height="1.64" fill="#d2e4e2"/><rect x="142.92" y="127.23" width="1.87" height="1.64" fill="#2a5454"/><rect x="142.92" y="128.77" width="1.87" height="1.64" fill="#d2e4e2"/><rect x="142.92" y="130.31" width="1.87" height="1.64" fill="#2a5454"/><rect x="142.92" y="133.38" width="1.87" height="1.64" fill="#d2e4e2"/><rect x="142.92" y="134.92" width="1.87" height="1.64" fill="#2a5454"/><rect x="142.92" y="136.46" width="1.87" height="1.64" fill="#d2e4e2"/><rect x="144.69" y="119.54" width="1.87" height="1.64" fill="#d2e4e2"/><rect x="144.69" y="121.08" width="1.87" height="1.64" fill="#2a5454"/><rect x="144.69" y="124.15" width="1.87" height="1.64" fill="#d2e4e2"/><rect x="144.69" y="125.69" width="1.87" height="1.64" fill="#2a5454"/><rect x="144.69" y="127.23" width="1.87" height="1.64" fill="#2a5454"/><rect x="144.69" y="130.31" width="1.87" height="1.64" fill="#2a5454"/><rect x="144.69" y="131.85" width="1.87" height="1.64" fill="#d2e4e2"/><rect x="144.69" y="133.38" width="1.87" height="1.64" fill="#d2e4e2"/><rect x="146.46" y="118.00" width="1.87" height="1.64" fill="#d2e4e2"/><rect x="146.46" y="119.54" width="1.87" height="1.64" fill="#d2e4e2"/><rect x="146.46" y="121.08" width="1.87" height="1.64" fill="#d2e4e2"/><rect x="146.46" y="122.62" width="1.87" height="1.64" fill="#d2e4e2"/><rect x="146.46" y="124.15" width="1.87" height="1.64" fill="#d2e4e2"/><rect x="146.46" y="125.69" width="1.87" height="1.64" fill="#d2e4e2"/><rect x="146.46" y="128.77" width="1.87" height="1.64" fill="#2a5454"/><rect x="146.46" y="130.31" width="1.87" height="1.64" fill="#d2e4e2"/><rect x="146.46" y="131.85" width="1.87" height="1.64" fill="#2a5454"/><rect x="146.46" y="133.38" width="1.87" height="1.64" fill="#d2e4e2"/><rect x="146.46" y="134.92" width="1.87" height="1.64" fill="#d2e4e2"/><rect x="146.46" y="136.46" width="1.87" height="1.64" fill="#d2e4e2"/><rect x="148.23" y="118.00" width="1.87" height="1.64" fill="#d2e4e2"/><rect x="148.23" y="119.54" width="1.87" height="1.64" fill="#d2e4e2"/><rect x="148.23" y="121.08" width="1.87" height="1.64" fill="#d2e4e2"/><rect x="148.23" y="122.62" width="1.87" height="1.64" fill="#2a5454"/><rect x="148.23" y="124.15" width="1.87" height="1.64" fill="#2a5454"/><rect x="148.23" y="125.69" width="1.87" height="1.64" fill="#d2e4e2"/><rect x="148.23" y="127.23" width="1.87" height="1.64" fill="#2a5454"/><rect x="148.23" y="133.38" width="1.87" height="1.64" fill="#d2e4e2"/><rect x="148.23" y="134.92" width="1.87" height="1.64" fill="#d2e4e2"/><rect x="148.23" y="136.46" width="1.87" height="1.64" fill="#d2e4e2"/><rect x="127.00" y="118.00" width="5.31" height="4.62" fill="#2a5050"/><rect x="128.77" y="119.54" width="1.77" height="1.54" fill="#0e2e2e"/><rect x="144.69" y="118.00" width="5.31" height="4.62" fill="#2a5050"/><rect x="146.46" y="119.54" width="1.77" height="1.54" fill="#0e2e2e"/><rect x="127.00" y="133.38" width="5.31" height="4.62" fill="#2a5050"/><rect x="128.77" y="134.92" width="1.77" height="1.54" fill="#0e2e2e"/></svg><div style="left:2px;top:144px;width:16px;height:16px;background:linear-gradient(135deg,#e6f6f6,#c6eeee)"><svg style="left:0;top:0" width="16" height="16" viewBox="0 0 16 16">
<path d="M3.5 2.5 L10 2.5 L14.5 8 L10 13.5 L3.5 13.5 L6.5 10.5 L4 8 L6.5 5.5 Z" fill="#1a9e9e"/>
<path d="M8 2.5 L10 2.5 L14.5 8 L10 13.5 L8 13.5 L11 8 Z" fill="#0b6f72"/>
<path d="M3.5 2.5 L6.5 5.5 L9 5.5 L7 2.5 Z" fill="#2fc0bd"/>
</svg></div><div style="left:-1px;top:162px;width:171px;height:18px;background:#9c9c9c;border-left:1px solid #a3a3a3;border-right:1px solid #a3a3a3"></div><div class="m" style="left:0;top:164.5px;width:169px;text-align:center;color:#fff;line-height:12px;font-size:11px;letter-spacing:-0.6px">21.max</div></div>
<div style="left:564px;top:330px;width:171px;height:181px;background:#838383;border:1px solid #a3a3a3;border-bottom:none;overflow:hidden"><svg style="left:0;top:0" width="169" height="162" viewBox="1 1 169 162"><rect x="0" y="17" width="171" height="127" fill="#f9f9fa"/><rect x="24" y="27" width="119" height="100" fill="none" stroke="#4a4a4a" stroke-width="0.65"/><path d="M30.0 27 L30.0 127 M36.0 27 L36.0 127 M42.0 27 L42.0 127 M48.0 27 L48.0 127 M54.0 27 L54.0 127 M60.0 27 L60.0 127 M66.0 27 L66.0 127 M72.0 27 L72.0 127 M78.0 27 L78.0 127 M84.0 27 L84.0 127 M90.0 27 L90.0 127 M96.0 27 L96.0 127 M102.0 27 L102.0 127 M108.0 27 L108.0 127 M114.0 27 L114.0 127 M120.0 27 L120.0 127 M126.0 27 L126.0 127 M132.0 27 L132.0 127 M138.0 27 L138.0 127 M24 33.0 L143 33.0 M24 39.0 L143 39.0 M24 45.0 L143 45.0 M24 51.0 L143 51.0 M24 57.0 L143 57.0 M24 63.0 L143 63.0 M24 69.0 L143 69.0 M24 75.0 L143 75.0 M24 81.0 L143 81.0 M24 87.0 L143 87.0 M24 93.0 L143 93.0 M24 99.0 L143 99.0 M24 105.0 L143 105.0 M24 111.0 L143 111.0 M24 117.0 L143 117.0 M24 123.0 L143 123.0 " stroke="#4a4a4a" stroke-width="0.65"/><rect x="70" y="28" width="27" height="7" fill="#2a3a40"/><path d="M36 42 Q80 52 126 40" stroke="#c8a878" stroke-width="1" fill="none"/><rect x="38" y="40" width="12" height="8" fill="#b4cedc" transform="rotate(-7.5 44 44)"/><rect x="52" y="44" width="12" height="8" fill="#b4cedc" transform="rotate(-4.5 58 48)"/><rect x="66" y="46" width="12" height="8" fill="#b4cedc" transform="rotate(-1.5 72 50)"/><rect x="80" y="46" width="12" height="8" fill="#b4cedc" transform="rotate(1.5 86 50)"/><rect x="94" y="44" width="12" height="8" fill="#b4cedc" transform="rotate(4.5 100 48)"/><rect x="108" y="42" width="12" height="8" fill="#b4cedc" transform="rotate(7.5 114 46)"/><rect x="42" y="77" width="84" height="2.5" fill="#c8a478"/><rect x="42" y="106" width="84" height="2.5" fill="#c8a478"/><rect x="58" y="61" width="14" height="16" fill="#707070"/><rect x="49" y="65" width="4" height="12" fill="#333"/><rect x="74" y="64" width="12" height="12" fill="#e8e8e8"/><circle cx="78" cy="71" r="3" fill="#222"/><ellipse cx="55" cy="101" rx="4" ry="3" fill="#6a9a5a"/><ellipse cx="67" cy="101" rx="4" ry="3" fill="#6a9a5a"/><ellipse cx="81" cy="101" rx="4" ry="3" fill="#6a9a5a"/><ellipse cx="93" cy="101" rx="4" ry="3" fill="#6a9a5a"/><path d="M110 90 L112 104 M116 90 L114 104 M108 95 L120 95" stroke="#c09060" stroke-width="2"/><rect x="32" y="120" width="16" height="10" fill="#7a8a90"/><rect x="52" y="120" width="16" height="10" fill="#a8c0c8"/><rect x="88" y="120" width="16" height="10" fill="#a0b8a0"/><rect x="108" y="118" width="12" height="12" fill="#8ab0d0"/><rect x="129" y="117" width="22" height="20" fill="#7a9e9c"/><rect x="129.00" y="118.54" width="1.79" height="1.64" fill="#d2e4e2"/><rect x="129.00" y="120.08" width="1.79" height="1.64" fill="#d2e4e2"/><rect x="129.00" y="123.15" width="1.79" height="1.64" fill="#d2e4e2"/><rect x="129.00" y="124.69" width="1.79" height="1.64" fill="#d2e4e2"/><rect x="129.00" y="126.23" width="1.79" height="1.64" fill="#2a5454"/><rect x="129.00" y="127.77" width="1.79" height="1.64" fill="#d2e4e2"/><rect x="129.00" y="130.85" width="1.79" height="1.64" fill="#d2e4e2"/><rect x="129.00" y="133.92" width="1.79" height="1.64" fill="#d2e4e2"/><rect x="129.00" y="135.46" width="1.79" height="1.64" fill="#2a5454"/><rect x="130.69" y="118.54" width="1.79" height="1.64" fill="#2a5454"/><rect x="130.69" y="121.62" width="1.79" height="1.64" fill="#2a5454"/><rect x="130.69" y="123.15" width="1.79" height="1.64" fill="#d2e4e2"/><rect x="130.69" y="126.23" width="1.79" height="1.64" fill="#2a5454"/><rect x="130.69" y="127.77" width="1.79" height="1.64" fill="#d2e4e2"/><rect x="130.69" y="129.31" width="1.79" height="1.64" fill="#d2e4e2"/><rect x="130.69" y="132.38" width="1.79" height="1.64" fill="#2a5454"/><rect x="132.38" y="118.54" width="1.79" height="1.64" fill="#2a5454"/><rect x="132.38" y="120.08" width="1.79" height="1.64" fill="#2a5454"/><rect x="132.38" y="121.62" width="1.79" height="1.64" fill="#2a5454"/><rect x="132.38" y="123.15" width="1.79" height="1.64" fill="#d2e4e2"/><rect x="132.38" y="126.23" width="1.79" height="1.64" fill="#d2e4e2"/><rect x="132.38" y="130.85" width="1.79" height="1.64" fill="#2a5454"/><rect x="132.38" y="132.38" width="1.79" height="1.64" fill="#d2e4e2"/><rect x="132.38" y="135.46" width="1.79" height="1.64" fill="#2a5454"/><rect x="134.08" y="117.00" width="1.79" height="1.64" fill="#d2e4e2"/><rect x="134.08" y="118.54" width="1.79" height="1.64" fill="#d2e4e2"/><rect x="134.08" y="120.08" width="1.79" height="1.64" fill="#2a5454"/><rect x="134.08" y="121.62" width="1.79" height="1.64" fill="#d2e4e2"/><rect x="134.08" y="124.69" width="1.79" height="1.64" fill="#2a5454"/><rect x="134.08" y="126.23" width="1.79" height="1.64" fill="#2a5454"/><rect x="134.08" y="127.77" width="1.79" height="1.64" fill="#d2e4e2"/><rect x="134.08" y="129.31" width="1.79" height="1.64" fill="#2a5454"/><rect x="134.08" y="132.38" width="1.79" height="1.64" fill="#d2e4e2"/><rect x="134.08" y="133.92" width="1.79" height="1.64" fill="#d2e4e2"/><rect x="134.08" y="135.46" width="1.79" height="1.64" fill="#2a5454"/><rect x="135.77" y="117.00" width="1.79" height="1.64" fill="#d2e4e2"/><rect x="135.77" y="118.54" width="1.79" height="1.64" fill="#2a5454"/><rect x="135.77" y="120.08" width="1.79" height="1.64" fill="#2a5454"/><rect x="135.77" y="121.62" width="1.79" height="1.64" fill="#d2e4e2"/><rect x="135.77" y="123.15" width="1.79" height="1.64" fill="#2a5454"/><rect x="135.77" y="124.69" width="1.79" height="1.64" fill="#2a5454"/><rect x="135.77" y="126.23" width="1.79" height="1.64" fill="#d2e4e2"/><rect x="135.77" y="129.31" width="1.79" height="1.64" fill="#d2e4e2"/><rect x="135.77" y="130.85" width="1.79" height="1.64" fill="#d2e4e2"/><rect x="135.77" y="132.38" width="1.79" height="1.64" fill="#d2e4e2"/><rect x="137.46" y="117.00" width="1.79" height="1.64" fill="#2a5454"/><rect x="137.46" y="118.54" width="1.79" height="1.64" fill="#d2e4e2"/><rect x="137.46" y="120.08" width="1.79" height="1.64" fill="#d2e4e2"/><rect x="137.46" y="123.15" width="1.79" height="1.64" fill="#d2e4e2"/><rect x="137.46" y="124.69" width="1.79" height="1.64" fill="#2a5454"/><rect x="137.46" y="126.23" width="1.79" height="1.64" fill="#d2e4e2"/><rect x="137.46" y="127.77" width="1.79" height="1.64" fill="#d2e4e2"/><rect x="137.46" y="129.31" width="1.79" height="1.64" fill="#d2e4e2"/><rect x="137.46" y="130.85" width="1.79" height="1.64" fill="#d2e4e2"/><rect x="137.46" y="132.38" width="1.79" height="1.64" fill="#d2e4e2"/><rect x="137.46" y="133.92" width="1.79" height="1.64" fill="#2a5454"/><rect x="139.15" y="117.00" width="1.79" height="1.64" fill="#2a5454"/><rect x="139.15" y="118.54" width="1.79" height="1.64" fill="#d2e4e2"/><rect x="139.15" y="120.08" width="1.79" height="1.64" fill="#2a5454"/><rect x="139.15" y="121.62" width="1.79" height="1.64" fill="#d2e4e2"/><rect x="139.15" y="123.15" width="1.79" height="1.64" fill="#d2e4e2"/><rect x="139.15" y="127.77" width="1.79" height="1.64" fill="#d2e4e2"/><rect x="139.15" y="130.85" width="1.79" height="1.64" fill="#d2e4e2"/><rect x="139.15" y="132.38" width="1.79" height="1.64" fill="#2a5454"/><rect x="139.15" y="133.92" width="1.79" height="1.64" fill="#2a5454"/><rect x="140.85" y="117.00" width="1.79" height="1.64" fill="#2a5454"/><rect x="140.85" y="118.54" width="1.79" height="1.64" fill="#d2e4e2"/><rect x="140.85" y="120.08" width="1.79" height="1.64" fill="#2a5454"/><rect x="140.85" y="121.62" width="1.79" height="1.64" fill="#2a5454"/><rect x="140.85" y="123.15" width="1.79" height="1.64" fill="#d2e4e2"/><rect x="140.85" y="127.77" width="1.79" height="1.64" fill="#2a5454"/><rect x="140.85" y="130.85" width="1.79" height="1.64" fill="#d2e4e2"/><rect x="140.85" y="132.38" width="1.79" height="1.64" fill="#2a5454"/><rect x="140.85" y="133.92" width="1.79" height="1.64" fill="#2a5454"/><rect x="140.85" y="135.46" width="1.79" height="1.64" fill="#d2e4e2"/><rect x="142.54" y="117.00" width="1.79" height="1.64" fill="#d2e4e2"/><rect x="142.54" y="118.54" width="1.79" height="1.64" fill="#2a5454"/><rect x="142.54" y="120.08" width="1.79" height="1.64" fill="#d2e4e2"/><rect x="142.54" y="121.62" width="1.79" height="1.64" fill="#d2e4e2"/><rect x="142.54" y="123.15" width="1.79" height="1.64" fill="#d2e4e2"/><rect x="142.54" y="126.23" width="1.79" height="1.64" fill="#d2e4e2"/><rect x="142.54" y="127.77" width="1.79" height="1.64" fill="#d2e4e2"/><rect x="142.54" y="129.31" width="1.79" height="1.64" fill="#d2e4e2"/><rect x="142.54" y="130.85" width="1.79" height="1.64" fill="#d2e4e2"/><rect x="142.54" y="133.92" width="1.79" height="1.64" fill="#d2e4e2"/><rect x="142.54" y="135.46" width="1.79" height="1.64" fill="#d2e4e2"/><rect x="144.23" y="117.00" width="1.79" height="1.64" fill="#d2e4e2"/><rect x="144.23" y="118.54" width="1.79" height="1.64" fill="#d2e4e2"/><rect x="144.23" y="120.08" width="1.79" height="1.64" fill="#d2e4e2"/><rect x="144.23" y="121.62" width="1.79" height="1.64" fill="#d2e4e2"/><rect x="144.23" y="123.15" width="1.79" height="1.64" fill="#2a5454"/><rect x="144.23" y="127.77" width="1.79" height="1.64" fill="#d2e4e2"/><rect x="144.23" y="129.31" width="1.79" height="1.64" fill="#d2e4e2"/><rect x="144.23" y="132.38" width="1.79" height="1.64" fill="#d2e4e2"/><rect x="144.23" y="133.92" width="1.79" height="1.64" fill="#d2e4e2"/><rect x="144.23" y="135.46" width="1.79" height="1.64" fill="#d2e4e2"/><rect x="145.92" y="117.00" width="1.79" height="1.64" fill="#d2e4e2"/><rect x="145.92" y="120.08" width="1.79" height="1.64" fill="#2a5454"/><rect x="145.92" y="121.62" width="1.79" height="1.64" fill="#d2e4e2"/><rect x="145.92" y="123.15" width="1.79" height="1.64" fill="#d2e4e2"/><rect x="145.92" y="124.69" width="1.79" height="1.64" fill="#d2e4e2"/><rect x="145.92" y="126.23" width="1.79" height="1.64" fill="#d2e4e2"/><rect x="145.92" y="127.77" width="1.79" height="1.64" fill="#d2e4e2"/><rect x="145.92" y="129.31" width="1.79" height="1.64" fill="#2a5454"/><rect x="145.92" y="130.85" width="1.79" height="1.64" fill="#d2e4e2"/><rect x="145.92" y="133.92" width="1.79" height="1.64" fill="#2a5454"/><rect x="145.92" y="135.46" width="1.79" height="1.64" fill="#d2e4e2"/><rect x="147.62" y="117.00" width="1.79" height="1.64" fill="#d2e4e2"/><rect x="147.62" y="118.54" width="1.79" height="1.64" fill="#2a5454"/><rect x="147.62" y="120.08" width="1.79" height="1.64" fill="#d2e4e2"/><rect x="147.62" y="121.62" width="1.79" height="1.64" fill="#d2e4e2"/><rect x="147.62" y="123.15" width="1.79" height="1.64" fill="#d2e4e2"/><rect x="147.62" y="126.23" width="1.79" height="1.64" fill="#d2e4e2"/><rect x="147.62" y="127.77" width="1.79" height="1.64" fill="#2a5454"/><rect x="147.62" y="132.38" width="1.79" height="1.64" fill="#d2e4e2"/><rect x="147.62" y="133.92" width="1.79" height="1.64" fill="#2a5454"/><rect x="147.62" y="135.46" width="1.79" height="1.64" fill="#d2e4e2"/><rect x="149.31" y="117.00" width="1.79" height="1.64" fill="#d2e4e2"/><rect x="149.31" y="121.62" width="1.79" height="1.64" fill="#d2e4e2"/><rect x="149.31" y="123.15" width="1.79" height="1.64" fill="#d2e4e2"/><rect x="149.31" y="124.69" width="1.79" height="1.64" fill="#2a5454"/><rect x="149.31" y="126.23" width="1.79" height="1.64" fill="#d2e4e2"/><rect x="149.31" y="130.85" width="1.79" height="1.64" fill="#2a5454"/><rect x="149.31" y="132.38" width="1.79" height="1.64" fill="#d2e4e2"/><rect x="149.31" y="135.46" width="1.79" height="1.64" fill="#2a5454"/><rect x="129.00" y="117.00" width="5.08" height="4.62" fill="#2a5050"/><rect x="130.69" y="118.54" width="1.69" height="1.54" fill="#0e2e2e"/><rect x="145.92" y="117.00" width="5.08" height="4.62" fill="#2a5050"/><rect x="147.62" y="118.54" width="1.69" height="1.54" fill="#0e2e2e"/><rect x="129.00" y="132.38" width="5.08" height="4.62" fill="#2a5050"/><rect x="130.69" y="133.92" width="1.69" height="1.54" fill="#0e2e2e"/></svg><div style="left:2px;top:144px;width:16px;height:16px;background:linear-gradient(135deg,#e6f6f6,#c6eeee)"><svg style="left:0;top:0" width="16" height="16" viewBox="0 0 16 16">
<path d="M3.5 2.5 L10 2.5 L14.5 8 L10 13.5 L3.5 13.5 L6.5 10.5 L4 8 L6.5 5.5 Z" fill="#1a9e9e"/>
<path d="M8 2.5 L10 2.5 L14.5 8 L10 13.5 L8 13.5 L11 8 Z" fill="#0b6f72"/>
<path d="M3.5 2.5 L6.5 5.5 L9 5.5 L7 2.5 Z" fill="#2fc0bd"/>
</svg></div><div style="left:-1px;top:162px;width:171px;height:18px;background:#9c9c9c;border-left:1px solid #a3a3a3;border-right:1px solid #a3a3a3"></div><div class="m" style="left:0;top:164.5px;width:169px;text-align:center;color:#fff;line-height:12px;font-size:11px;letter-spacing:-0.6px">22.max</div></div>
<div style="left:747px;top:330px;width:171px;height:181px;background:#838383;border:1px solid #a3a3a3;border-bottom:none;overflow:hidden"><svg style="left:0;top:0" width="169" height="162" viewBox="1 1 169 162"><rect x="0" y="17" width="171" height="127" fill="#f8f9fb"/><rect x="19.8" y="28.3" width="61.4" height="103" fill="none" stroke="#444444" stroke-width="0.75"/><path d="M25.9 28.3 L25.9 131.3 M32.0 28.3 L32.0 131.3 M38.1 28.3 L38.1 131.3 M44.2 28.3 L44.2 131.3 M50.3 28.3 L50.3 131.3 M56.4 28.3 L56.4 131.3 M62.5 28.3 L62.5 131.3 M68.6 28.3 L68.6 131.3 M74.7 28.3 L74.7 131.3 M80.8 28.3 L80.8 131.3 M19.8 34.4 L81.2 34.4 M19.8 40.5 L81.2 40.5 M19.8 46.6 L81.2 46.6 M19.8 52.7 L81.2 52.7 M19.8 58.8 L81.2 58.8 M19.8 64.9 L81.2 64.9 M19.8 71.0 L81.2 71.0 M19.8 77.1 L81.2 77.1 M19.8 83.2 L81.2 83.2 M19.8 89.3 L81.2 89.3 M19.8 95.4 L81.2 95.4 M19.8 101.5 L81.2 101.5 M19.8 107.6 L81.2 107.6 M19.8 113.7 L81.2 113.7 M19.8 119.8 L81.2 119.8 M19.8 125.9 L81.2 125.9 " stroke="#444444" stroke-width="0.75"/><rect x="19.8" y="28.3" width="61.4" height="103" rx="3" fill="none" stroke="#3a3a3a" stroke-width="1"/><rect x="94.6" y="69.6" width="61" height="61.6" fill="none" stroke="#444444" stroke-width="0.75"/><path d="M101.4 69.6 L101.4 131.2 M108.2 69.6 L108.2 131.2 M115.0 69.6 L115.0 131.2 M121.8 69.6 L121.8 131.2 M128.6 69.6 L128.6 131.2 M135.4 69.6 L135.4 131.2 M142.2 69.6 L142.2 131.2 M149.0 69.6 L149.0 131.2 M94.6 76.4 L155.6 76.4 M94.6 83.2 L155.6 83.2 M94.6 90.0 L155.6 90.0 M94.6 96.8 L155.6 96.8 M94.6 103.6 L155.6 103.6 M94.6 110.4 L155.6 110.4 M94.6 117.2 L155.6 117.2 M94.6 124.0 L155.6 124.0 M94.6 130.8 L155.6 130.8 " stroke="#444444" stroke-width="0.75"/><rect x="94.6" y="69.6" width="61" height="61.6" rx="3" fill="none" stroke="#3a3a3a" stroke-width="1"/><rect x="48" y="55" width="34" height="1.8" fill="#3a3a3a"/><rect x="17" y="89.8" width="46" height="1.8" fill="#3a3a3a"/><rect x="17" y="125.3" width="65" height="1.8" fill="#3a3a3a"/><rect x="121" y="89.6" width="38" height="1.8" fill="#3a3a3a"/><rect x="93" y="125.3" width="66" height="1.8" fill="#3a3a3a"/><rect x="44" y="29" width="16.7" height="6" fill="#26323e"/><rect x="114.8" y="69.6" width="20.2" height="7" fill="#26323e"/><path d="M31 24 Q36 20 42 26 Q46 32 38 36 Q32 34 31 24 Z" fill="#9a7a60"/><path d="M44 38 L76 50 M46 42 L70 52 M50 36 L80 46" stroke="#a8a098" stroke-width="1.2"/><circle cx="35.3" cy="70.5" r="1.7" fill="#a8b078"/><circle cx="15.4" cy="51.2" r="1.2" fill="#e8e8d8"/><circle cx="17.9" cy="47.8" r="1.2" fill="#8a9a60"/><circle cx="28.6" cy="69.0" r="0.9" fill="#c8c8a8"/><circle cx="24.3" cy="57.4" r="1.5" fill="#e8e8d8"/><circle cx="32.0" cy="48.2" r="0.8" fill="#e8e8d8"/><circle cx="29.5" cy="60.6" r="1.8" fill="#e8e8d8"/><circle cx="27.4" cy="67.8" r="1.8" fill="#e8e8d8"/><circle cx="29.5" cy="51.4" r="0.9" fill="#c8c8a8"/><circle cx="18.9" cy="56.5" r="1.6" fill="#8a9a60"/><circle cx="19.0" cy="47.4" r="1.1" fill="#8a9a60"/><circle cx="27.8" cy="44.5" r="1.2" fill="#e8e8d8"/><circle cx="35.7" cy="50.4" r="1.4" fill="#a8b078"/><circle cx="23.1" cy="50.7" r="1.1" fill="#c8c8a8"/><circle cx="27.1" cy="49.8" r="0.9" fill="#a8b078"/><circle cx="30.6" cy="66.9" r="1.0" fill="#8a9a60"/><circle cx="35.2" cy="59.8" r="1.7" fill="#8a9a60"/><circle cx="24.9" cy="43.0" r="1.4" fill="#c8c8a8"/><circle cx="15.5" cy="66.3" r="1.5" fill="#8a9a60"/><circle cx="32.7" cy="70.5" r="1.3" fill="#c8c8a8"/><circle cx="31.5" cy="52.4" r="1.8" fill="#c8c8a8"/><circle cx="25.8" cy="43.1" r="1.1" fill="#8a9a60"/><circle cx="31.6" cy="55.8" r="1.1" fill="#a8b078"/><circle cx="17.3" cy="57.9" r="1.0" fill="#8a9a60"/><circle cx="20.6" cy="54.7" r="1.7" fill="#c8c8a8"/><circle cx="31.8" cy="61.7" r="1.2" fill="#8a9a60"/><circle cx="34.7" cy="62.6" r="1.2" fill="#8a9a60"/><circle cx="27.0" cy="54.8" r="1.1" fill="#a8b078"/><circle cx="33.2" cy="45.3" r="1.4" fill="#e8e8d8"/><circle cx="36.2" cy="63.9" r="1.2" fill="#8a9a60"/><circle cx="119.5" cy="80.4" r="1.4" fill="#a8b078"/><circle cx="97.3" cy="94.8" r="1.3" fill="#c8c8a8"/><circle cx="120.6" cy="86.2" r="1.1" fill="#a8b078"/><circle cx="114.4" cy="82.3" r="1.7" fill="#8a9a60"/><circle cx="114.6" cy="78.9" r="1.5" fill="#c8c8a8"/><circle cx="119.6" cy="90.6" r="1.1" fill="#8a9a60"/><circle cx="106.3" cy="86.9" r="1.7" fill="#a8b078"/><circle cx="97.0" cy="79.9" r="1.7" fill="#c8c8a8"/><circle cx="114.1" cy="98.2" r="1.4" fill="#e8e8d8"/><circle cx="111.1" cy="90.2" r="1.6" fill="#e8e8d8"/><circle cx="119.8" cy="88.2" r="1.2" fill="#c8c8a8"/><circle cx="117.5" cy="98.0" r="1.6" fill="#e8e8d8"/><circle cx="106.7" cy="98.7" r="1.2" fill="#e8e8d8"/><circle cx="120.6" cy="82.4" r="1.2" fill="#c8c8a8"/><circle cx="120.7" cy="86.3" r="1.6" fill="#a8b078"/><circle cx="116.6" cy="85.8" r="1.7" fill="#8a9a60"/><circle cx="113.6" cy="94.9" r="1.3" fill="#c8c8a8"/><circle cx="115.0" cy="86.3" r="1.2" fill="#8a9a60"/><circle cx="109.3" cy="101.4" r="1.0" fill="#c8c8a8"/><circle cx="108.9" cy="88.8" r="1.8" fill="#8a9a60"/><circle cx="91.3" cy="81.6" r="1.5" fill="#a8b078"/><circle cx="94.2" cy="98.5" r="1.7" fill="#e8e8d8"/><circle cx="104.5" cy="99.3" r="1.4" fill="#a8b078"/><circle cx="115.5" cy="96.1" r="1.4" fill="#e8e8d8"/><circle cx="90.9" cy="88.5" r="1.0" fill="#8a9a60"/><circle cx="96.4" cy="90.8" r="1.1" fill="#8a9a60"/><circle cx="106.5" cy="103.8" r="1.2" fill="#e8e8d8"/><circle cx="106.5" cy="84.6" r="1.4" fill="#e8e8d8"/><circle cx="104.2" cy="97.8" r="1.8" fill="#8a9a60"/><circle cx="101.1" cy="107.5" r="1.1" fill="#a8b078"/><rect x="24" y="70" width="6" height="16" fill="#d0e4e8" opacity="0.8"/><rect x="101" y="109.5" width="7" height="15" fill="#cfe4e8" opacity="0.85"/><rect x="63" y="99.5" width="15" height="11.5" fill="#f4f6f8" stroke="#bbb" stroke-width="0.4"/><rect x="65" y="101.5" width="11" height="7" fill="#5a90b8"/><rect x="44" y="105.6" width="13" height="13" fill="#ffffff"/><path d="M47 110 h2 M52 110 h2 M47 114 h2 M52 114 h2" stroke="#666" stroke-width="1.2"/><path d="M139 89 L141 80 L146 78 L148 72 M141 80 L139 74 M143 89 L146 82" stroke="#d8a070" stroke-width="1.8" fill="none"/><rect x="138.5" y="104.4" width="14" height="10.6" fill="#fff"/><path d="M141 108 h3 M146 108 h3 M141 112 h3" stroke="#444" stroke-width="1.3"/><rect x="129.4" y="117" width="20.2" height="19.3" fill="#7a9e9c"/><rect x="129.40" y="121.45" width="1.65" height="1.58" fill="#d2e4e2"/><rect x="129.40" y="122.94" width="1.65" height="1.58" fill="#2a5454"/><rect x="129.40" y="124.42" width="1.65" height="1.58" fill="#d2e4e2"/><rect x="129.40" y="125.91" width="1.65" height="1.58" fill="#2a5454"/><rect x="129.40" y="127.39" width="1.65" height="1.58" fill="#d2e4e2"/><rect x="129.40" y="128.88" width="1.65" height="1.58" fill="#d2e4e2"/><rect x="129.40" y="130.36" width="1.65" height="1.58" fill="#d2e4e2"/><rect x="129.40" y="131.85" width="1.65" height="1.58" fill="#d2e4e2"/><rect x="129.40" y="133.33" width="1.65" height="1.58" fill="#d2e4e2"/><rect x="129.40" y="134.82" width="1.65" height="1.58" fill="#d2e4e2"/><rect x="130.95" y="117.00" width="1.65" height="1.58" fill="#d2e4e2"/><rect x="130.95" y="118.48" width="1.65" height="1.58" fill="#2a5454"/><rect x="130.95" y="119.97" width="1.65" height="1.58" fill="#d2e4e2"/><rect x="130.95" y="121.45" width="1.65" height="1.58" fill="#2a5454"/><rect x="130.95" y="122.94" width="1.65" height="1.58" fill="#2a5454"/><rect x="130.95" y="124.42" width="1.65" height="1.58" fill="#d2e4e2"/><rect x="130.95" y="125.91" width="1.65" height="1.58" fill="#d2e4e2"/><rect x="130.95" y="128.88" width="1.65" height="1.58" fill="#2a5454"/><rect x="130.95" y="130.36" width="1.65" height="1.58" fill="#2a5454"/><rect x="130.95" y="131.85" width="1.65" height="1.58" fill="#2a5454"/><rect x="130.95" y="134.82" width="1.65" height="1.58" fill="#d2e4e2"/><rect x="132.51" y="118.48" width="1.65" height="1.58" fill="#d2e4e2"/><rect x="132.51" y="119.97" width="1.65" height="1.58" fill="#2a5454"/><rect x="132.51" y="121.45" width="1.65" height="1.58" fill="#2a5454"/><rect x="132.51" y="122.94" width="1.65" height="1.58" fill="#d2e4e2"/><rect x="132.51" y="124.42" width="1.65" height="1.58" fill="#d2e4e2"/><rect x="132.51" y="125.91" width="1.65" height="1.58" fill="#d2e4e2"/><rect x="132.51" y="127.39" width="1.65" height="1.58" fill="#2a5454"/><rect x="132.51" y="128.88" width="1.65" height="1.58" fill="#2a5454"/><rect x="132.51" y="130.36" width="1.65" height="1.58" fill="#d2e4e2"/><rect x="132.51" y="131.85" width="1.65" height="1.58" fill="#2a5454"/><rect x="132.51" y="133.33" width="1.65" height="1.58" fill="#d2e4e2"/><rect x="132.51" y="134.82" width="1.65" height="1.58" fill="#d2e4e2"/><rect x="134.06" y="117.00" width="1.65" height="1.58" fill="#d2e4e2"/><rect x="134.06" y="119.97" width="1.65" height="1.58" fill="#d2e4e2"/><rect x="134.06" y="121.45" width="1.65" height="1.58" fill="#d2e4e2"/><rect x="134.06" y="122.94" width="1.65" height="1.58" fill="#d2e4e2"/><rect x="134.06" y="124.42" width="1.65" height="1.58" fill="#d2e4e2"/><rect x="134.06" y="125.91" width="1.65" height="1.58" fill="#d2e4e2"/><rect x="134.06" y="127.39" width="1.65" height="1.58" fill="#2a5454"/><rect x="134.06" y="130.36" width="1.65" height="1.58" fill="#d2e4e2"/><rect x="134.06" y="131.85" width="1.65" height="1.58" fill="#d2e4e2"/><rect x="134.06" y="133.33" width="1.65" height="1.58" fill="#d2e4e2"/><rect x="134.06" y="134.82" width="1.65" height="1.58" fill="#d2e4e2"/><rect x="135.62" y="118.48" width="1.65" height="1.58" fill="#2a5454"/><rect x="135.62" y="119.97" width="1.65" height="1.58" fill="#d2e4e2"/><rect x="135.62" y="121.45" width="1.65" height="1.58" fill="#d2e4e2"/><rect x="135.62" y="124.42" width="1.65" height="1.58" fill="#2a5454"/><rect x="135.62" y="127.39" width="1.65" height="1.58" fill="#d2e4e2"/><rect x="135.62" y="128.88" width="1.65" height="1.58" fill="#2a5454"/><rect x="135.62" y="131.85" width="1.65" height="1.58" fill="#2a5454"/><rect x="135.62" y="134.82" width="1.65" height="1.58" fill="#d2e4e2"/><rect x="137.17" y="118.48" width="1.65" height="1.58" fill="#d2e4e2"/><rect x="137.17" y="119.97" width="1.65" height="1.58" fill="#d2e4e2"/><rect x="137.17" y="121.45" width="1.65" height="1.58" fill="#d2e4e2"/><rect x="137.17" y="124.42" width="1.65" height="1.58" fill="#2a5454"/><rect x="137.17" y="130.36" width="1.65" height="1.58" fill="#2a5454"/><rect x="137.17" y="133.33" width="1.65" height="1.58" fill="#2a5454"/><rect x="137.17" y="134.82" width="1.65" height="1.58" fill="#d2e4e2"/><rect x="138.72" y="118.48" width="1.65" height="1.58" fill="#d2e4e2"/><rect x="138.72" y="119.97" width="1.65" height="1.58" fill="#d2e4e2"/><rect x="138.72" y="121.45" width="1.65" height="1.58" fill="#d2e4e2"/><rect x="138.72" y="122.94" width="1.65" height="1.58" fill="#d2e4e2"/><rect x="138.72" y="124.42" width="1.65" height="1.58" fill="#d2e4e2"/><rect x="138.72" y="128.88" width="1.65" height="1.58" fill="#d2e4e2"/><rect x="138.72" y="130.36" width="1.65" height="1.58" fill="#d2e4e2"/><rect x="138.72" y="131.85" width="1.65" height="1.58" fill="#2a5454"/><rect x="138.72" y="133.33" width="1.65" height="1.58" fill="#d2e4e2"/><rect x="138.72" y="134.82" width="1.65" height="1.58" fill="#2a5454"/><rect x="140.28" y="118.48" width="1.65" height="1.58" fill="#d2e4e2"/><rect x="140.28" y="119.97" width="1.65" height="1.58" fill="#d2e4e2"/><rect x="140.28" y="122.94" width="1.65" height="1.58" fill="#d2e4e2"/><rect x="140.28" y="124.42" width="1.65" height="1.58" fill="#d2e4e2"/><rect x="140.28" y="130.36" width="1.65" height="1.58" fill="#2a5454"/><rect x="140.28" y="131.85" width="1.65" height="1.58" fill="#d2e4e2"/><rect x="140.28" y="133.33" width="1.65" height="1.58" fill="#2a5454"/><rect x="141.83" y="117.00" width="1.65" height="1.58" fill="#2a5454"/><rect x="141.83" y="118.48" width="1.65" height="1.58" fill="#d2e4e2"/><rect x="141.83" y="119.97" width="1.65" height="1.58" fill="#d2e4e2"/><rect x="141.83" y="121.45" width="1.65" height="1.58" fill="#d2e4e2"/><rect x="141.83" y="124.42" width="1.65" height="1.58" fill="#2a5454"/><rect x="141.83" y="125.91" width="1.65" height="1.58" fill="#2a5454"/><rect x="141.83" y="128.88" width="1.65" height="1.58" fill="#d2e4e2"/><rect x="141.83" y="130.36" width="1.65" height="1.58" fill="#2a5454"/><rect x="141.83" y="131.85" width="1.65" height="1.58" fill="#d2e4e2"/><rect x="141.83" y="133.33" width="1.65" height="1.58" fill="#2a5454"/><rect x="143.38" y="117.00" width="1.65" height="1.58" fill="#d2e4e2"/><rect x="143.38" y="119.97" width="1.65" height="1.58" fill="#d2e4e2"/><rect x="143.38" y="121.45" width="1.65" height="1.58" fill="#2a5454"/><rect x="143.38" y="122.94" width="1.65" height="1.58" fill="#2a5454"/><rect x="143.38" y="124.42" width="1.65" height="1.58" fill="#d2e4e2"/><rect x="143.38" y="125.91" width="1.65" height="1.58" fill="#2a5454"/><rect x="143.38" y="127.39" width="1.65" height="1.58" fill="#d2e4e2"/><rect x="143.38" y="128.88" width="1.65" height="1.58" fill="#d2e4e2"/><rect x="143.38" y="130.36" width="1.65" height="1.58" fill="#2a5454"/><rect x="143.38" y="131.85" width="1.65" height="1.58" fill="#d2e4e2"/><rect x="143.38" y="133.33" width="1.65" height="1.58" fill="#d2e4e2"/><rect x="144.94" y="117.00" width="1.65" height="1.58" fill="#d2e4e2"/><rect x="144.94" y="119.97" width="1.65" height="1.58" fill="#d2e4e2"/><rect x="144.94" y="121.45" width="1.65" height="1.58" fill="#2a5454"/><rect x="144.94" y="122.94" width="1.65" height="1.58" fill="#d2e4e2"/><rect x="144.94" y="124.42" width="1.65" height="1.58" fill="#d2e4e2"/><rect x="144.94" y="125.91" width="1.65" height="1.58" fill="#d2e4e2"/><rect x="144.94" y="127.39" width="1.65" height="1.58" fill="#d2e4e2"/><rect x="144.94" y="128.88" width="1.65" height="1.58" fill="#2a5454"/><rect x="144.94" y="130.36" width="1.65" height="1.58" fill="#d2e4e2"/><rect x="144.94" y="131.85" width="1.65" height="1.58" fill="#2a5454"/><rect x="144.94" y="133.33" width="1.65" height="1.58" fill="#2a5454"/><rect x="144.94" y="134.82" width="1.65" height="1.58" fill="#2a5454"/><rect x="146.49" y="117.00" width="1.65" height="1.58" fill="#2a5454"/><rect x="146.49" y="118.48" width="1.65" height="1.58" fill="#d2e4e2"/><rect x="146.49" y="121.45" width="1.65" height="1.58" fill="#d2e4e2"/><rect x="146.49" y="125.91" width="1.65" height="1.58" fill="#d2e4e2"/><rect x="146.49" y="128.88" width="1.65" height="1.58" fill="#2a5454"/><rect x="146.49" y="130.36" width="1.65" height="1.58" fill="#2a5454"/><rect x="146.49" y="131.85" width="1.65" height="1.58" fill="#d2e4e2"/><rect x="146.49" y="133.33" width="1.65" height="1.58" fill="#d2e4e2"/><rect x="146.49" y="134.82" width="1.65" height="1.58" fill="#d2e4e2"/><rect x="148.05" y="117.00" width="1.65" height="1.58" fill="#d2e4e2"/><rect x="148.05" y="119.97" width="1.65" height="1.58" fill="#d2e4e2"/><rect x="148.05" y="121.45" width="1.65" height="1.58" fill="#d2e4e2"/><rect x="148.05" y="122.94" width="1.65" height="1.58" fill="#d2e4e2"/><rect x="148.05" y="125.91" width="1.65" height="1.58" fill="#d2e4e2"/><rect x="148.05" y="127.39" width="1.65" height="1.58" fill="#2a5454"/><rect x="148.05" y="128.88" width="1.65" height="1.58" fill="#d2e4e2"/><rect x="148.05" y="130.36" width="1.65" height="1.58" fill="#d2e4e2"/><rect x="148.05" y="131.85" width="1.65" height="1.58" fill="#d2e4e2"/><rect x="148.05" y="133.33" width="1.65" height="1.58" fill="#d2e4e2"/><rect x="148.05" y="134.82" width="1.65" height="1.58" fill="#d2e4e2"/><rect x="129.40" y="117.00" width="4.66" height="4.45" fill="#2a5050"/><rect x="130.95" y="118.48" width="1.55" height="1.48" fill="#0e2e2e"/><rect x="144.94" y="117.00" width="4.66" height="4.45" fill="#2a5050"/><rect x="146.49" y="118.48" width="1.55" height="1.48" fill="#0e2e2e"/><rect x="129.40" y="131.85" width="4.66" height="4.45" fill="#2a5050"/><rect x="130.95" y="133.33" width="1.55" height="1.48" fill="#0e2e2e"/></svg><div style="left:2px;top:144px;width:16px;height:16px;background:linear-gradient(135deg,#e6f6f6,#c6eeee)"><svg style="left:0;top:0" width="16" height="16" viewBox="0 0 16 16">
<path d="M3.5 2.5 L10 2.5 L14.5 8 L10 13.5 L3.5 13.5 L6.5 10.5 L4 8 L6.5 5.5 Z" fill="#1a9e9e"/>
<path d="M8 2.5 L10 2.5 L14.5 8 L10 13.5 L8 13.5 L11 8 Z" fill="#0b6f72"/>
<path d="M3.5 2.5 L6.5 5.5 L9 5.5 L7 2.5 Z" fill="#2fc0bd"/>
</svg></div><div style="left:-1px;top:162px;width:171px;height:18px;background:#9c9c9c;border-left:1px solid #a3a3a3;border-right:1px solid #a3a3a3"></div><div class="m" style="left:0;top:164.5px;width:169px;text-align:center;color:#fff;line-height:12px;font-size:11px;letter-spacing:-0.6px">23.max</div></div>
<div style="left:198px;top:525px;width:171px;height:181px;background:#838383;border:1px solid #a3a3a3;border-bottom:none;overflow:hidden"><svg style="left:0;top:0" width="169" height="162" viewBox="1 1 169 162"><defs><clipPath id="c24a"><circle cx="48" cy="43" r="26"/></clipPath><clipPath id="c24b"><path d="M138.6 86.5 L160 108 L160 157 L108 157 L90 130 Z"/></clipPath><pattern id="p24v" width="3.6" height="10" patternUnits="userSpaceOnUse"><rect width="1.7" height="10" fill="#9a6630"/></pattern><pattern id="p24h" width="10" height="3.6" patternUnits="userSpaceOnUse"><rect width="10" height="1.5" fill="#faf0dc"/></pattern><pattern id="p24w" width="3.6" height="10" patternUnits="userSpaceOnUse"><rect width="1.6" height="10" fill="#f8ecd8"/></pattern><pattern id="p24k" width="4.3" height="10" patternUnits="userSpaceOnUse"><rect width="2.1" height="10" fill="#1a1a1a"/></pattern><pattern id="p24g" width="6" height="6" patternUnits="userSpaceOnUse" patternTransform="rotate(35)"><rect width="6" height="3" fill="#74787e"/></pattern></defs><rect x="0" y="0" width="171" height="164" fill="#ededed"/><rect x="12" y="7" width="72" height="72" fill="#e8b54e"/><rect x="49" y="7" width="35" height="34" fill="url(#p24h)"/><rect x="49" y="44" width="35" height="35" fill="#eccf98"/><rect x="49" y="44" width="35" height="35" fill="url(#p24h)"/><rect x="12" y="44" width="37" height="35" fill="url(#p24v)"/><g clip-path="url(#c24a)"><rect x="12" y="7" width="37" height="72" fill="#e8b54e"/><rect x="12" y="7" width="37" height="36" fill="url(#p24v)"/><rect x="12" y="44" width="37" height="35" fill="#e8b54e"/><rect x="12" y="44" width="37" height="35" fill="url(#p24v)"/><rect x="49" y="7" width="35" height="36" fill="#e8b54e"/><rect x="49" y="44" width="35" height="35" fill="#e2a84a"/><rect x="49" y="44" width="35" height="35" fill="url(#p24w)"/></g><ellipse cx="42" cy="34" rx="6" ry="9" fill="#e8eef2" opacity="0.8"/><rect x="47" y="7" width="2" height="72" fill="#f6f0e6"/><rect x="12" y="41" width="72" height="3" fill="#f6f0e6"/><clipPath id="c24c"><path d="M91 4 L118 4 L118 16.6 L158 16.6 L158 29 L145 29 L145 40 L158 40 L158 65.5 L145 65.5 L145 79 L91 79 Z"/></clipPath><g clip-path="url(#c24c)"><rect x="91" y="4" width="67" height="76" fill="#56698a"/><rect x="91" y="4" width="14" height="16" fill="#3c4c6a"/><rect x="91" y="20" width="14" height="12" fill="#4a5c7a"/><rect x="140" y="16" width="18" height="13" fill="#44567a"/><rect x="118" y="44" width="18" height="16" fill="#4a5c80"/><rect x="104" y="62" width="20" height="18" fill="#3e4e6e"/><rect x="136" y="40" width="22" height="26" fill="#6a7c98"/><path d="M91 30 L158 30 M91 44 L158 44 M91 62 L158 62 M105 4 L105 80 M118 4 L118 80 M136 16 L136 80" stroke="#48597a" stroke-width="0.6"/></g><rect x="10" y="89" width="70" height="66" fill="#a8aaae" opacity="0.45"/><rect x="16" y="91" width="61" height="60" fill="#6a6e74"/><rect x="16" y="91" width="61" height="60" fill="url(#p24g)"/><path d="M35 91 L31 151 M64 93 L60 151" stroke="#55585e" stroke-width="5"/><rect x="89" y="85" width="71" height="72" fill="#f2f0ec"/><g clip-path="url(#c24b)"><rect x="89" y="85" width="71" height="72" fill="url(#p24k)"/></g><rect x="89" y="119.5" width="71" height="2" fill="#d8ccb8"/><rect x="123.5" y="85" width="2" height="72" fill="#d8ccb8"/><rect x="88.5" y="84.5" width="72" height="73" fill="none" stroke="#d8ccb8" stroke-width="1"/><rect x="127" y="129" width="27" height="25" fill="#7a9e9c"/><rect x="127.00" y="129.00" width="2.18" height="2.02" fill="#2a5454"/><rect x="127.00" y="132.85" width="2.18" height="2.02" fill="#d2e4e2"/><rect x="127.00" y="136.69" width="2.18" height="2.02" fill="#d2e4e2"/><rect x="127.00" y="138.62" width="2.18" height="2.02" fill="#2a5454"/><rect x="127.00" y="140.54" width="2.18" height="2.02" fill="#d2e4e2"/><rect x="127.00" y="144.38" width="2.18" height="2.02" fill="#d2e4e2"/><rect x="127.00" y="146.31" width="2.18" height="2.02" fill="#2a5454"/><rect x="127.00" y="148.23" width="2.18" height="2.02" fill="#2a5454"/><rect x="127.00" y="152.08" width="2.18" height="2.02" fill="#d2e4e2"/><rect x="129.08" y="132.85" width="2.18" height="2.02" fill="#d2e4e2"/><rect x="129.08" y="134.77" width="2.18" height="2.02" fill="#2a5454"/><rect x="129.08" y="138.62" width="2.18" height="2.02" fill="#2a5454"/><rect x="129.08" y="140.54" width="2.18" height="2.02" fill="#d2e4e2"/><rect x="129.08" y="142.46" width="2.18" height="2.02" fill="#d2e4e2"/><rect x="129.08" y="146.31" width="2.18" height="2.02" fill="#d2e4e2"/><rect x="129.08" y="152.08" width="2.18" height="2.02" fill="#d2e4e2"/><rect x="131.15" y="129.00" width="2.18" height="2.02" fill="#d2e4e2"/><rect x="131.15" y="130.92" width="2.18" height="2.02" fill="#d2e4e2"/><rect x="131.15" y="132.85" width="2.18" height="2.02" fill="#2a5454"/><rect x="131.15" y="134.77" width="2.18" height="2.02" fill="#d2e4e2"/><rect x="131.15" y="140.54" width="2.18" height="2.02" fill="#d2e4e2"/><rect x="131.15" y="144.38" width="2.18" height="2.02" fill="#d2e4e2"/><rect x="131.15" y="146.31" width="2.18" height="2.02" fill="#d2e4e2"/><rect x="131.15" y="148.23" width="2.18" height="2.02" fill="#2a5454"/><rect x="133.23" y="132.85" width="2.18" height="2.02" fill="#d2e4e2"/><rect x="133.23" y="134.77" width="2.18" height="2.02" fill="#2a5454"/><rect x="133.23" y="138.62" width="2.18" height="2.02" fill="#d2e4e2"/><rect x="133.23" y="140.54" width="2.18" height="2.02" fill="#d2e4e2"/><rect x="133.23" y="142.46" width="2.18" height="2.02" fill="#d2e4e2"/><rect x="133.23" y="144.38" width="2.18" height="2.02" fill="#d2e4e2"/><rect x="133.23" y="146.31" width="2.18" height="2.02" fill="#d2e4e2"/><rect x="133.23" y="148.23" width="2.18" height="2.02" fill="#2a5454"/><rect x="133.23" y="152.08" width="2.18" height="2.02" fill="#d2e4e2"/><rect x="135.31" y="129.00" width="2.18" height="2.02" fill="#2a5454"/><rect x="135.31" y="134.77" width="2.18" height="2.02" fill="#2a5454"/><rect x="135.31" y="136.69" width="2.18" height="2.02" fill="#d2e4e2"/><rect x="135.31" y="138.62" width="2.18" height="2.02" fill="#2a5454"/><rect x="135.31" y="140.54" width="2.18" height="2.02" fill="#d2e4e2"/><rect x="135.31" y="142.46" width="2.18" height="2.02" fill="#2a5454"/><rect x="135.31" y="144.38" width="2.18" height="2.02" fill="#2a5454"/><rect x="135.31" y="146.31" width="2.18" height="2.02" fill="#d2e4e2"/><rect x="135.31" y="150.15" width="2.18" height="2.02" fill="#d2e4e2"/><rect x="135.31" y="152.08" width="2.18" height="2.02" fill="#d2e4e2"/><rect x="137.38" y="130.92" width="2.18" height="2.02" fill="#d2e4e2"/><rect x="137.38" y="132.85" width="2.18" height="2.02" fill="#d2e4e2"/><rect x="137.38" y="134.77" width="2.18" height="2.02" fill="#2a5454"/><rect x="137.38" y="136.69" width="2.18" height="2.02" fill="#d2e4e2"/><rect x="137.38" y="140.54" width="2.18" height="2.02" fill="#d2e4e2"/><rect x="137.38" y="142.46" width="2.18" height="2.02" fill="#d2e4e2"/><rect x="137.38" y="144.38" width="2.18" height="2.02" fill="#d2e4e2"/><rect x="137.38" y="146.31" width="2.18" height="2.02" fill="#d2e4e2"/><rect x="137.38" y="148.23" width="2.18" height="2.02" fill="#d2e4e2"/><rect x="137.38" y="150.15" width="2.18" height="2.02" fill="#d2e4e2"/><rect x="139.46" y="129.00" width="2.18" height="2.02" fill="#d2e4e2"/><rect x="139.46" y="132.85" width="2.18" height="2.02" fill="#2a5454"/><rect x="139.46" y="136.69" width="2.18" height="2.02" fill="#2a5454"/><rect x="139.46" y="138.62" width="2.18" height="2.02" fill="#2a5454"/><rect x="139.46" y="140.54" width="2.18" height="2.02" fill="#d2e4e2"/><rect x="139.46" y="142.46" width="2.18" height="2.02" fill="#d2e4e2"/><rect x="139.46" y="144.38" width="2.18" height="2.02" fill="#d2e4e2"/><rect x="139.46" y="146.31" width="2.18" height="2.02" fill="#d2e4e2"/><rect x="139.46" y="148.23" width="2.18" height="2.02" fill="#d2e4e2"/><rect x="139.46" y="150.15" width="2.18" height="2.02" fill="#d2e4e2"/><rect x="141.54" y="130.92" width="2.18" height="2.02" fill="#2a5454"/><rect x="141.54" y="132.85" width="2.18" height="2.02" fill="#d2e4e2"/><rect x="141.54" y="134.77" width="2.18" height="2.02" fill="#d2e4e2"/><rect x="141.54" y="136.69" width="2.18" height="2.02" fill="#2a5454"/><rect x="141.54" y="138.62" width="2.18" height="2.02" fill="#2a5454"/><rect x="141.54" y="140.54" width="2.18" height="2.02" fill="#d2e4e2"/><rect x="141.54" y="142.46" width="2.18" height="2.02" fill="#2a5454"/><rect x="141.54" y="146.31" width="2.18" height="2.02" fill="#d2e4e2"/><rect x="141.54" y="148.23" width="2.18" height="2.02" fill="#d2e4e2"/><rect x="141.54" y="152.08" width="2.18" height="2.02" fill="#d2e4e2"/><rect x="143.62" y="129.00" width="2.18" height="2.02" fill="#2a5454"/><rect x="143.62" y="130.92" width="2.18" height="2.02" fill="#d2e4e2"/><rect x="143.62" y="132.85" width="2.18" height="2.02" fill="#d2e4e2"/><rect x="143.62" y="134.77" width="2.18" height="2.02" fill="#d2e4e2"/><rect x="143.62" y="136.69" width="2.18" height="2.02" fill="#d2e4e2"/><rect x="143.62" y="142.46" width="2.18" height="2.02" fill="#2a5454"/><rect x="143.62" y="146.31" width="2.18" height="2.02" fill="#d2e4e2"/><rect x="143.62" y="148.23" width="2.18" height="2.02" fill="#d2e4e2"/><rect x="143.62" y="150.15" width="2.18" height="2.02" fill="#d2e4e2"/><rect x="143.62" y="152.08" width="2.18" height="2.02" fill="#d2e4e2"/><rect x="145.69" y="130.92" width="2.18" height="2.02" fill="#d2e4e2"/><rect x="145.69" y="134.77" width="2.18" height="2.02" fill="#2a5454"/><rect x="145.69" y="136.69" width="2.18" height="2.02" fill="#2a5454"/><rect x="145.69" y="138.62" width="2.18" height="2.02" fill="#d2e4e2"/><rect x="145.69" y="144.38" width="2.18" height="2.02" fill="#d2e4e2"/><rect x="145.69" y="146.31" width="2.18" height="2.02" fill="#d2e4e2"/><rect x="145.69" y="148.23" width="2.18" height="2.02" fill="#d2e4e2"/><rect x="145.69" y="150.15" width="2.18" height="2.02" fill="#2a5454"/><rect x="145.69" y="152.08" width="2.18" height="2.02" fill="#d2e4e2"/><rect x="147.77" y="130.92" width="2.18" height="2.02" fill="#d2e4e2"/><rect x="147.77" y="132.85" width="2.18" height="2.02" fill="#2a5454"/><rect x="147.77" y="134.77" width="2.18" height="2.02" fill="#d2e4e2"/><rect x="147.77" y="136.69" width="2.18" height="2.02" fill="#2a5454"/><rect x="147.77" y="138.62" width="2.18" height="2.02" fill="#d2e4e2"/><rect x="147.77" y="140.54" width="2.18" height="2.02" fill="#2a5454"/><rect x="147.77" y="142.46" width="2.18" height="2.02" fill="#d2e4e2"/><rect x="147.77" y="150.15" width="2.18" height="2.02" fill="#d2e4e2"/><rect x="147.77" y="152.08" width="2.18" height="2.02" fill="#d2e4e2"/><rect x="149.85" y="129.00" width="2.18" height="2.02" fill="#d2e4e2"/><rect x="149.85" y="130.92" width="2.18" height="2.02" fill="#d2e4e2"/><rect x="149.85" y="134.77" width="2.18" height="2.02" fill="#d2e4e2"/><rect x="149.85" y="138.62" width="2.18" height="2.02" fill="#d2e4e2"/><rect x="149.85" y="140.54" width="2.18" height="2.02" fill="#2a5454"/><rect x="149.85" y="142.46" width="2.18" height="2.02" fill="#d2e4e2"/><rect x="149.85" y="144.38" width="2.18" height="2.02" fill="#d2e4e2"/><rect x="149.85" y="146.31" width="2.18" height="2.02" fill="#2a5454"/><rect x="149.85" y="148.23" width="2.18" height="2.02" fill="#2a5454"/><rect x="149.85" y="152.08" width="2.18" height="2.02" fill="#d2e4e2"/><rect x="151.92" y="129.00" width="2.18" height="2.02" fill="#d2e4e2"/><rect x="151.92" y="130.92" width="2.18" height="2.02" fill="#d2e4e2"/><rect x="151.92" y="132.85" width="2.18" height="2.02" fill="#d2e4e2"/><rect x="151.92" y="136.69" width="2.18" height="2.02" fill="#2a5454"/><rect x="151.92" y="138.62" width="2.18" height="2.02" fill="#d2e4e2"/><rect x="151.92" y="140.54" width="2.18" height="2.02" fill="#d2e4e2"/><rect x="151.92" y="144.38" width="2.18" height="2.02" fill="#2a5454"/><rect x="151.92" y="146.31" width="2.18" height="2.02" fill="#d2e4e2"/><rect x="151.92" y="148.23" width="2.18" height="2.02" fill="#d2e4e2"/><rect x="151.92" y="150.15" width="2.18" height="2.02" fill="#d2e4e2"/><rect x="127.00" y="129.00" width="6.23" height="5.77" fill="#2a5050"/><rect x="129.08" y="130.92" width="2.08" height="1.92" fill="#0e2e2e"/><rect x="147.77" y="129.00" width="6.23" height="5.77" fill="#2a5050"/><rect x="149.85" y="130.92" width="2.08" height="1.92" fill="#0e2e2e"/><rect x="127.00" y="148.23" width="6.23" height="5.77" fill="#2a5050"/><rect x="129.08" y="150.15" width="2.08" height="1.92" fill="#0e2e2e"/></svg><div style="left:2px;top:144px;width:16px;height:16px;background:linear-gradient(135deg,#e6f6f6,#c6eeee)"><svg style="left:0;top:0" width="16" height="16" viewBox="0 0 16 16">
<path d="M3.5 2.5 L10 2.5 L14.5 8 L10 13.5 L3.5 13.5 L6.5 10.5 L4 8 L6.5 5.5 Z" fill="#1a9e9e"/>
<path d="M8 2.5 L10 2.5 L14.5 8 L10 13.5 L8 13.5 L11 8 Z" fill="#0b6f72"/>
<path d="M3.5 2.5 L6.5 5.5 L9 5.5 L7 2.5 Z" fill="#2fc0bd"/>
</svg></div><div style="left:-1px;top:162px;width:171px;height:18px;background:#9c9c9c;border-left:1px solid #a3a3a3;border-right:1px solid #a3a3a3"></div><div class="m" style="left:0;top:164.5px;width:169px;text-align:center;color:#fff;line-height:12px;font-size:11px;letter-spacing:-0.6px">24.max</div></div>
<div style="left:381px;top:525px;width:171px;height:181px;background:#838383;border:1px solid #a3a3a3;border-bottom:none;overflow:hidden"><svg style="left:0;top:0" width="169" height="162" viewBox="1 1 169 162"><rect x="0" y="0" width="171" height="164" fill="#fbfbfb"/><rect x="7" y="18" width="56" height="57" fill="#e6e6e6" stroke="#d0d0d0" stroke-width="0.8"/><rect x="12" y="23" width="46" height="46" fill="#2e2e2e"/><path d="M17.6 23.8 L23.2 29.4 L17.6 35.0 L12.0 29.4 Z" fill="#e4e4e4"/><path d="M28.4 23.8 L34.0 29.4 L28.4 35.0 L22.8 29.4 Z" fill="#e4e4e4"/><path d="M39.2 23.8 L44.8 29.4 L39.2 35.0 L33.6 29.4 Z" fill="#e4e4e4"/><path d="M50.0 23.8 L55.6 29.4 L50.0 35.0 L44.4 29.4 Z" fill="#e4e4e4"/><path d="M23.0 29.3 L28.6 34.9 L23.0 40.5 L17.4 34.9 Z" fill="#e4e4e4"/><path d="M33.8 29.3 L39.4 34.9 L33.8 40.5 L28.2 34.9 Z" fill="#e4e4e4"/><path d="M44.6 29.3 L50.2 34.9 L44.6 40.5 L39.0 34.9 Z" fill="#e4e4e4"/><path d="M17.6 34.9 L23.2 40.5 L17.6 46.1 L12.0 40.5 Z" fill="#e4e4e4"/><path d="M28.4 34.9 L34.0 40.5 L28.4 46.1 L22.8 40.5 Z" fill="#e4e4e4"/><path d="M39.2 34.9 L44.8 40.5 L39.2 46.1 L33.6 40.5 Z" fill="#e4e4e4"/><path d="M50.0 34.9 L55.6 40.5 L50.0 46.1 L44.4 40.5 Z" fill="#e4e4e4"/><path d="M23.0 40.4 L28.6 46.0 L23.0 51.6 L17.4 46.0 Z" fill="#e4e4e4"/><path d="M33.8 40.4 L39.4 46.0 L33.8 51.6 L28.2 46.0 Z" fill="#e4e4e4"/><path d="M44.6 40.4 L50.2 46.0 L44.6 51.6 L39.0 46.0 Z" fill="#e4e4e4"/><path d="M17.6 46.0 L23.2 51.6 L17.6 57.2 L12.0 51.6 Z" fill="#e4e4e4"/><path d="M28.4 46.0 L34.0 51.6 L28.4 57.2 L22.8 51.6 Z" fill="#e4e4e4"/><path d="M39.2 46.0 L44.8 51.6 L39.2 57.2 L33.6 51.6 Z" fill="#e4e4e4"/><path d="M50.0 46.0 L55.6 51.6 L50.0 57.2 L44.4 51.6 Z" fill="#e4e4e4"/><path d="M23.0 51.5 L28.6 57.1 L23.0 62.8 L17.4 57.1 Z" fill="#e4e4e4"/><path d="M33.8 51.5 L39.4 57.1 L33.8 62.8 L28.2 57.1 Z" fill="#e4e4e4"/><path d="M44.6 51.5 L50.2 57.1 L44.6 62.8 L39.0 57.1 Z" fill="#e4e4e4"/><path d="M17.6 57.1 L23.2 62.7 L17.6 68.3 L12.0 62.7 Z" fill="#e4e4e4"/><path d="M28.4 57.1 L34.0 62.7 L28.4 68.3 L22.8 62.7 Z" fill="#e4e4e4"/><path d="M39.2 57.1 L44.8 62.7 L39.2 68.3 L33.6 62.7 Z" fill="#e4e4e4"/><path d="M50.0 57.1 L55.6 62.7 L50.0 68.3 L44.4 62.7 Z" fill="#e4e4e4"/><circle cx="17.6" cy="29.4" r="1.2" fill="#666"/><circle cx="28.4" cy="29.4" r="1.2" fill="#666"/><circle cx="39.2" cy="29.4" r="1.2" fill="#666"/><circle cx="50.0" cy="29.4" r="1.2" fill="#666"/><circle cx="23.0" cy="34.9" r="1.2" fill="#666"/><circle cx="33.8" cy="34.9" r="1.2" fill="#666"/><circle cx="44.6" cy="34.9" r="1.2" fill="#666"/><circle cx="17.6" cy="40.5" r="1.2" fill="#666"/><circle cx="28.4" cy="40.5" r="1.2" fill="#666"/><circle cx="39.2" cy="40.5" r="1.2" fill="#666"/><circle cx="50.0" cy="40.5" r="1.2" fill="#666"/><circle cx="23.0" cy="46.0" r="1.2" fill="#666"/><circle cx="33.8" cy="46.0" r="1.2" fill="#666"/><circle cx="44.6" cy="46.0" r="1.2" fill="#666"/><circle cx="17.6" cy="51.6" r="1.2" fill="#666"/><circle cx="28.4" cy="51.6" r="1.2" fill="#666"/><circle cx="39.2" cy="51.6" r="1.2" fill="#666"/><circle cx="50.0" cy="51.6" r="1.2" fill="#666"/><circle cx="23.0" cy="57.1" r="1.2" fill="#666"/><circle cx="33.8" cy="57.1" r="1.2" fill="#666"/><circle cx="44.6" cy="57.1" r="1.2" fill="#666"/><circle cx="17.6" cy="62.7" r="1.2" fill="#666"/><circle cx="28.4" cy="62.7" r="1.2" fill="#666"/><circle cx="39.2" cy="62.7" r="1.2" fill="#666"/><circle cx="50.0" cy="62.7" r="1.2" fill="#666"/><defs><linearGradient id="g25" x1="0" y1="0" x2="0" y2="1"><stop offset="0" stop-color="#8a6a4a"/><stop offset="0.4" stop-color="#d0ae88"/><stop offset="1" stop-color="#dcc09a"/></linearGradient></defs><rect x="73.5" y="23.4" width="33.5" height="33" fill="url(#g25)"/><circle cx="103.6" cy="26.2" r="7" fill="#f4f6f8"/><circle cx="116.5" cy="26.2" r="7" fill="#f4f6f8"/><circle cx="103.6" cy="39.6" r="7" fill="#f4f6f8"/><circle cx="116.5" cy="39.6" r="7" fill="#f4f6f8"/><circle cx="90.8" cy="39.6" r="7" fill="#f4f6f8"/><circle cx="77.4" cy="53" r="7" fill="#f4f6f8"/><circle cx="90.8" cy="53" r="7" fill="#f4f6f8"/><circle cx="103.6" cy="53" r="7" fill="#f4f6f8"/><circle cx="116.5" cy="53" r="7" fill="#f4f6f8"/><circle cx="77.4" cy="65.3" r="7" fill="#f4f6f8"/><circle cx="90.8" cy="65.3" r="7" fill="#f4f6f8"/><circle cx="103.6" cy="65.3" r="7" fill="#f4f6f8"/><circle cx="116.5" cy="65.3" r="7" fill="#f4f6f8"/><circle cx="68" cy="53" r="7" fill="#f4f6f8"/><circle cx="68" cy="65.3" r="7" fill="#f4f6f8"/><circle cx="103.6" cy="26.2" r="6.6" fill="none" stroke="#9aa4b0" stroke-width="0.9" stroke-dasharray="1.1 1.1"/><circle cx="103.6" cy="26.2" r="3.6" fill="none" stroke="#b8c0c8" stroke-width="0.7" stroke-dasharray="1 1"/><circle cx="116.5" cy="26.2" r="6.6" fill="none" stroke="#9aa4b0" stroke-width="0.9" stroke-dasharray="1.1 1.1"/><circle cx="116.5" cy="26.2" r="3.6" fill="none" stroke="#b8c0c8" stroke-width="0.7" stroke-dasharray="1 1"/><circle cx="116.5" cy="26.2" r="3.4" fill="#c8a474"/><circle cx="103.6" cy="39.6" r="6.6" fill="none" stroke="#9aa4b0" stroke-width="0.9" stroke-dasharray="1.1 1.1"/><circle cx="103.6" cy="39.6" r="3.6" fill="none" stroke="#b8c0c8" stroke-width="0.7" stroke-dasharray="1 1"/><circle cx="103.6" cy="39.6" r="3.4" fill="#c8a474"/><circle cx="116.5" cy="39.6" r="6.6" fill="none" stroke="#9aa4b0" stroke-width="0.9" stroke-dasharray="1.1 1.1"/><circle cx="116.5" cy="39.6" r="3.6" fill="none" stroke="#b8c0c8" stroke-width="0.7" stroke-dasharray="1 1"/><circle cx="116.5" cy="39.6" r="3.4" fill="#c8a474"/><circle cx="90.8" cy="39.6" r="6.6" fill="none" stroke="#9aa4b0" stroke-width="0.9" stroke-dasharray="1.1 1.1"/><circle cx="90.8" cy="39.6" r="3.6" fill="none" stroke="#b8c0c8" stroke-width="0.7" stroke-dasharray="1 1"/><circle cx="77.4" cy="53" r="6.6" fill="none" stroke="#9aa4b0" stroke-width="0.9" stroke-dasharray="1.1 1.1"/><circle cx="77.4" cy="53" r="3.6" fill="none" stroke="#b8c0c8" stroke-width="0.7" stroke-dasharray="1 1"/><circle cx="90.8" cy="53" r="6.6" fill="none" stroke="#9aa4b0" stroke-width="0.9" stroke-dasharray="1.1 1.1"/><circle cx="90.8" cy="53" r="3.6" fill="none" stroke="#b8c0c8" stroke-width="0.7" stroke-dasharray="1 1"/><circle cx="90.8" cy="53" r="3.4" fill="#c8a474"/><circle cx="103.6" cy="53" r="6.6" fill="none" stroke="#9aa4b0" stroke-width="0.9" stroke-dasharray="1.1 1.1"/><circle cx="103.6" cy="53" r="3.6" fill="none" stroke="#b8c0c8" stroke-width="0.7" stroke-dasharray="1 1"/><circle cx="103.6" cy="53" r="3.4" fill="#c8a474"/><circle cx="116.5" cy="53" r="6.6" fill="none" stroke="#9aa4b0" stroke-width="0.9" stroke-dasharray="1.1 1.1"/><circle cx="116.5" cy="53" r="3.6" fill="none" stroke="#b8c0c8" stroke-width="0.7" stroke-dasharray="1 1"/><circle cx="116.5" cy="53" r="3.4" fill="#c8a474"/><circle cx="77.4" cy="65.3" r="6.6" fill="none" stroke="#9aa4b0" stroke-width="0.9" stroke-dasharray="1.1 1.1"/><circle cx="77.4" cy="65.3" r="3.6" fill="none" stroke="#b8c0c8" stroke-width="0.7" stroke-dasharray="1 1"/><circle cx="77.4" cy="65.3" r="3.4" fill="#c8a474"/><circle cx="90.8" cy="65.3" r="6.6" fill="none" stroke="#9aa4b0" stroke-width="0.9" stroke-dasharray="1.1 1.1"/><circle cx="90.8" cy="65.3" r="3.6" fill="none" stroke="#b8c0c8" stroke-width="0.7" stroke-dasharray="1 1"/><circle cx="90.8" cy="65.3" r="3.4" fill="#c8a474"/><circle cx="103.6" cy="65.3" r="6.6" fill="none" stroke="#9aa4b0" stroke-width="0.9" stroke-dasharray="1.1 1.1"/><circle cx="103.6" cy="65.3" r="3.6" fill="none" stroke="#b8c0c8" stroke-width="0.7" stroke-dasharray="1 1"/><circle cx="103.6" cy="65.3" r="3.4" fill="#c8a474"/><circle cx="116.5" cy="65.3" r="6.6" fill="none" stroke="#9aa4b0" stroke-width="0.9" stroke-dasharray="1.1 1.1"/><circle cx="116.5" cy="65.3" r="3.6" fill="none" stroke="#b8c0c8" stroke-width="0.7" stroke-dasharray="1 1"/><circle cx="116.5" cy="65.3" r="3.4" fill="#c8a474"/><circle cx="68" cy="53" r="6.6" fill="none" stroke="#9aa4b0" stroke-width="0.9" stroke-dasharray="1.1 1.1"/><circle cx="68" cy="53" r="3.6" fill="none" stroke="#b8c0c8" stroke-width="0.7" stroke-dasharray="1 1"/><circle cx="68" cy="65.3" r="6.6" fill="none" stroke="#9aa4b0" stroke-width="0.9" stroke-dasharray="1.1 1.1"/><circle cx="68" cy="65.3" r="3.6" fill="none" stroke="#b8c0c8" stroke-width="0.7" stroke-dasharray="1 1"/><circle cx="116.5" cy="26.2" r="3.4" fill="#9a7450"/><rect x="131.5" y="11" width="33" height="32" fill="none" stroke="#3a3a3a" stroke-width="1.1"/><path d="M135.2 11 L135.2 43 M138.8 11 L138.8 43 M142.5 11 L142.5 43 M146.1 11 L146.1 43 M149.8 11 L149.8 43 M153.5 11 L153.5 43 M157.1 11 L157.1 43 M160.8 11 L160.8 43 M131.5 14.7 L164.5 14.7 M131.5 18.3 L164.5 18.3 M131.5 22.0 L164.5 22.0 M131.5 25.6 L164.5 25.6 M131.5 29.3 L164.5 29.3 M131.5 33.0 L164.5 33.0 M131.5 36.6 L164.5 36.6 M131.5 40.3 L164.5 40.3 " stroke="#3a3a3a" stroke-width="1.1"/><rect x="131.5" y="44.6" width="33" height="32.4" fill="none" stroke="#3a3a3a" stroke-width="1.1"/><path d="M135.2 44.6 L135.2 77.0 M138.8 44.6 L138.8 77.0 M142.5 44.6 L142.5 77.0 M146.1 44.6 L146.1 77.0 M149.8 44.6 L149.8 77.0 M153.5 44.6 L153.5 77.0 M157.1 44.6 L157.1 77.0 M160.8 44.6 L160.8 77.0 M131.5 48.3 L164.5 48.3 M131.5 51.9 L164.5 51.9 M131.5 55.6 L164.5 55.6 M131.5 59.2 L164.5 59.2 M131.5 62.9 L164.5 62.9 M131.5 66.6 L164.5 66.6 M131.5 70.2 L164.5 70.2 M131.5 73.9 L164.5 73.9 " stroke="#3a3a3a" stroke-width="1.1"/><rect x="6" y="85" width="44" height="61" fill="#e0e0e0"/><rect x="6" y="85" width="44" height="18" fill="#b89a6a"/><rect x="22" y="102" width="28" height="36" fill="#2a3550"/><path d="M30 90 L40 95 L32 100 M42 92 L38 135" stroke="#5a4a30" stroke-width="1.5" fill="none"/><rect x="54" y="86" width="47" height="59" fill="#e2e0dc"/><rect x="70" y="86" width="20" height="14" fill="#c8c4c0"/><path d="M55 100 L100 130" stroke="#2a2a2a" stroke-width="1.2"/><path d="M56 110 L92 140" stroke="#9a9690" stroke-width="5"/><path d="M72 102 L100 128" stroke="#d8b888" stroke-width="4"/><rect x="60" y="137" width="40" height="8" fill="#c8a878"/><rect x="104" y="88" width="61" height="54" fill="#36466a"/><circle cx="134" cy="116" r="24" fill="#d8c8a8"/><path d="M118 106 L132 106 L132 98 L144 98 L144 112 L150 112 L150 130 L122 130 Z" fill="#fafafa"/><path d="M104 100 L165 100 M104 118 L165 118 M124 88 L124 142 M146 88 L146 142" stroke="#2a3a5a" stroke-width="0.8"/><rect x="126" y="128" width="27" height="26" fill="#7a9e9c"/><rect x="126.00" y="128.00" width="2.18" height="2.10" fill="#d2e4e2"/><rect x="126.00" y="134.00" width="2.18" height="2.10" fill="#d2e4e2"/><rect x="126.00" y="138.00" width="2.18" height="2.10" fill="#2a5454"/><rect x="126.00" y="140.00" width="2.18" height="2.10" fill="#d2e4e2"/><rect x="126.00" y="144.00" width="2.18" height="2.10" fill="#d2e4e2"/><rect x="126.00" y="146.00" width="2.18" height="2.10" fill="#d2e4e2"/><rect x="126.00" y="148.00" width="2.18" height="2.10" fill="#d2e4e2"/><rect x="126.00" y="150.00" width="2.18" height="2.10" fill="#2a5454"/><rect x="126.00" y="152.00" width="2.18" height="2.10" fill="#d2e4e2"/><rect x="128.08" y="128.00" width="2.18" height="2.10" fill="#2a5454"/><rect x="128.08" y="132.00" width="2.18" height="2.10" fill="#2a5454"/><rect x="128.08" y="136.00" width="2.18" height="2.10" fill="#2a5454"/><rect x="128.08" y="140.00" width="2.18" height="2.10" fill="#d2e4e2"/><rect x="128.08" y="142.00" width="2.18" height="2.10" fill="#d2e4e2"/><rect x="128.08" y="144.00" width="2.18" height="2.10" fill="#d2e4e2"/><rect x="128.08" y="146.00" width="2.18" height="2.10" fill="#d2e4e2"/><rect x="128.08" y="150.00" width="2.18" height="2.10" fill="#2a5454"/><rect x="128.08" y="152.00" width="2.18" height="2.10" fill="#d2e4e2"/><rect x="130.15" y="128.00" width="2.18" height="2.10" fill="#2a5454"/><rect x="130.15" y="130.00" width="2.18" height="2.10" fill="#d2e4e2"/><rect x="130.15" y="132.00" width="2.18" height="2.10" fill="#d2e4e2"/><rect x="130.15" y="134.00" width="2.18" height="2.10" fill="#d2e4e2"/><rect x="130.15" y="136.00" width="2.18" height="2.10" fill="#d2e4e2"/><rect x="130.15" y="138.00" width="2.18" height="2.10" fill="#d2e4e2"/><rect x="130.15" y="140.00" width="2.18" height="2.10" fill="#2a5454"/><rect x="130.15" y="142.00" width="2.18" height="2.10" fill="#2a5454"/><rect x="130.15" y="144.00" width="2.18" height="2.10" fill="#d2e4e2"/><rect x="130.15" y="148.00" width="2.18" height="2.10" fill="#d2e4e2"/><rect x="130.15" y="150.00" width="2.18" height="2.10" fill="#d2e4e2"/><rect x="132.23" y="128.00" width="2.18" height="2.10" fill="#d2e4e2"/><rect x="132.23" y="130.00" width="2.18" height="2.10" fill="#d2e4e2"/><rect x="132.23" y="132.00" width="2.18" height="2.10" fill="#2a5454"/><rect x="132.23" y="134.00" width="2.18" height="2.10" fill="#d2e4e2"/><rect x="132.23" y="136.00" width="2.18" height="2.10" fill="#d2e4e2"/><rect x="132.23" y="138.00" width="2.18" height="2.10" fill="#2a5454"/><rect x="132.23" y="140.00" width="2.18" height="2.10" fill="#d2e4e2"/><rect x="132.23" y="142.00" width="2.18" height="2.10" fill="#d2e4e2"/><rect x="132.23" y="146.00" width="2.18" height="2.10" fill="#d2e4e2"/><rect x="132.23" y="148.00" width="2.18" height="2.10" fill="#d2e4e2"/><rect x="132.23" y="150.00" width="2.18" height="2.10" fill="#d2e4e2"/><rect x="134.31" y="128.00" width="2.18" height="2.10" fill="#2a5454"/><rect x="134.31" y="130.00" width="2.18" height="2.10" fill="#d2e4e2"/><rect x="134.31" y="132.00" width="2.18" height="2.10" fill="#d2e4e2"/><rect x="134.31" y="134.00" width="2.18" height="2.10" fill="#d2e4e2"/><rect x="134.31" y="136.00" width="2.18" height="2.10" fill="#2a5454"/><rect x="134.31" y="138.00" width="2.18" height="2.10" fill="#d2e4e2"/><rect x="134.31" y="140.00" width="2.18" height="2.10" fill="#d2e4e2"/><rect x="134.31" y="142.00" width="2.18" height="2.10" fill="#d2e4e2"/><rect x="134.31" y="144.00" width="2.18" height="2.10" fill="#d2e4e2"/><rect x="134.31" y="146.00" width="2.18" height="2.10" fill="#2a5454"/><rect x="134.31" y="152.00" width="2.18" height="2.10" fill="#d2e4e2"/><rect x="136.38" y="128.00" width="2.18" height="2.10" fill="#d2e4e2"/><rect x="136.38" y="132.00" width="2.18" height="2.10" fill="#d2e4e2"/><rect x="136.38" y="134.00" width="2.18" height="2.10" fill="#d2e4e2"/><rect x="136.38" y="136.00" width="2.18" height="2.10" fill="#2a5454"/><rect x="136.38" y="138.00" width="2.18" height="2.10" fill="#2a5454"/><rect x="136.38" y="140.00" width="2.18" height="2.10" fill="#2a5454"/><rect x="136.38" y="142.00" width="2.18" height="2.10" fill="#d2e4e2"/><rect x="136.38" y="144.00" width="2.18" height="2.10" fill="#d2e4e2"/><rect x="136.38" y="146.00" width="2.18" height="2.10" fill="#d2e4e2"/><rect x="136.38" y="148.00" width="2.18" height="2.10" fill="#d2e4e2"/><rect x="136.38" y="150.00" width="2.18" height="2.10" fill="#2a5454"/><rect x="136.38" y="152.00" width="2.18" height="2.10" fill="#d2e4e2"/><rect x="138.46" y="128.00" width="2.18" height="2.10" fill="#d2e4e2"/><rect x="138.46" y="132.00" width="2.18" height="2.10" fill="#d2e4e2"/><rect x="138.46" y="136.00" width="2.18" height="2.10" fill="#d2e4e2"/><rect x="138.46" y="140.00" width="2.18" height="2.10" fill="#2a5454"/><rect x="138.46" y="142.00" width="2.18" height="2.10" fill="#2a5454"/><rect x="138.46" y="144.00" width="2.18" height="2.10" fill="#2a5454"/><rect x="138.46" y="146.00" width="2.18" height="2.10" fill="#d2e4e2"/><rect x="138.46" y="148.00" width="2.18" height="2.10" fill="#d2e4e2"/><rect x="138.46" y="150.00" width="2.18" height="2.10" fill="#2a5454"/><rect x="138.46" y="152.00" width="2.18" height="2.10" fill="#d2e4e2"/><rect x="140.54" y="128.00" width="2.18" height="2.10" fill="#d2e4e2"/><rect x="140.54" y="132.00" width="2.18" height="2.10" fill="#2a5454"/><rect x="140.54" y="134.00" width="2.18" height="2.10" fill="#d2e4e2"/><rect x="140.54" y="136.00" width="2.18" height="2.10" fill="#2a5454"/><rect x="140.54" y="138.00" width="2.18" height="2.10" fill="#d2e4e2"/><rect x="140.54" y="142.00" width="2.18" height="2.10" fill="#d2e4e2"/><rect x="140.54" y="146.00" width="2.18" height="2.10" fill="#2a5454"/><rect x="140.54" y="148.00" width="2.18" height="2.10" fill="#d2e4e2"/><rect x="140.54" y="150.00" width="2.18" height="2.10" fill="#d2e4e2"/><rect x="142.62" y="128.00" width="2.18" height="2.10" fill="#2a5454"/><rect x="142.62" y="130.00" width="2.18" height="2.10" fill="#d2e4e2"/><rect x="142.62" y="132.00" width="2.18" height="2.10" fill="#d2e4e2"/><rect x="142.62" y="134.00" width="2.18" height="2.10" fill="#d2e4e2"/><rect x="142.62" y="136.00" width="2.18" height="2.10" fill="#d2e4e2"/><rect x="142.62" y="138.00" width="2.18" height="2.10" fill="#2a5454"/><rect x="142.62" y="140.00" width="2.18" height="2.10" fill="#2a5454"/><rect x="142.62" y="142.00" width="2.18" height="2.10" fill="#d2e4e2"/><rect x="142.62" y="144.00" width="2.18" height="2.10" fill="#2a5454"/><rect x="142.62" y="150.00" width="2.18" height="2.10" fill="#d2e4e2"/><rect x="142.62" y="152.00" width="2.18" height="2.10" fill="#d2e4e2"/><rect x="144.69" y="130.00" width="2.18" height="2.10" fill="#d2e4e2"/><rect x="144.69" y="132.00" width="2.18" height="2.10" fill="#d2e4e2"/><rect x="144.69" y="136.00" width="2.18" height="2.10" fill="#d2e4e2"/><rect x="144.69" y="138.00" width="2.18" height="2.10" fill="#2a5454"/><rect x="144.69" y="140.00" width="2.18" height="2.10" fill="#2a5454"/><rect x="144.69" y="142.00" width="2.18" height="2.10" fill="#d2e4e2"/><rect x="144.69" y="144.00" width="2.18" height="2.10" fill="#d2e4e2"/><rect x="144.69" y="146.00" width="2.18" height="2.10" fill="#d2e4e2"/><rect x="144.69" y="150.00" width="2.18" height="2.10" fill="#d2e4e2"/><rect x="144.69" y="152.00" width="2.18" height="2.10" fill="#d2e4e2"/><rect x="146.77" y="130.00" width="2.18" height="2.10" fill="#d2e4e2"/><rect x="146.77" y="132.00" width="2.18" height="2.10" fill="#d2e4e2"/><rect x="146.77" y="134.00" width="2.18" height="2.10" fill="#2a5454"/><rect x="146.77" y="136.00" width="2.18" height="2.10" fill="#d2e4e2"/><rect x="146.77" y="138.00" width="2.18" height="2.10" fill="#d2e4e2"/><rect x="146.77" y="140.00" width="2.18" height="2.10" fill="#2a5454"/><rect x="146.77" y="144.00" width="2.18" height="2.10" fill="#d2e4e2"/><rect x="146.77" y="146.00" width="2.18" height="2.10" fill="#d2e4e2"/><rect x="146.77" y="148.00" width="2.18" height="2.10" fill="#d2e4e2"/><rect x="146.77" y="150.00" width="2.18" height="2.10" fill="#d2e4e2"/><rect x="146.77" y="152.00" width="2.18" height="2.10" fill="#d2e4e2"/><rect x="148.85" y="128.00" width="2.18" height="2.10" fill="#2a5454"/><rect x="148.85" y="130.00" width="2.18" height="2.10" fill="#d2e4e2"/><rect x="148.85" y="132.00" width="2.18" height="2.10" fill="#d2e4e2"/><rect x="148.85" y="138.00" width="2.18" height="2.10" fill="#d2e4e2"/><rect x="148.85" y="140.00" width="2.18" height="2.10" fill="#d2e4e2"/><rect x="148.85" y="142.00" width="2.18" height="2.10" fill="#d2e4e2"/><rect x="148.85" y="144.00" width="2.18" height="2.10" fill="#d2e4e2"/><rect x="148.85" y="146.00" width="2.18" height="2.10" fill="#d2e4e2"/><rect x="148.85" y="148.00" width="2.18" height="2.10" fill="#2a5454"/><rect x="148.85" y="150.00" width="2.18" height="2.10" fill="#2a5454"/><rect x="148.85" y="152.00" width="2.18" height="2.10" fill="#d2e4e2"/><rect x="150.92" y="130.00" width="2.18" height="2.10" fill="#2a5454"/><rect x="150.92" y="132.00" width="2.18" height="2.10" fill="#2a5454"/><rect x="150.92" y="136.00" width="2.18" height="2.10" fill="#d2e4e2"/><rect x="150.92" y="144.00" width="2.18" height="2.10" fill="#d2e4e2"/><rect x="150.92" y="150.00" width="2.18" height="2.10" fill="#d2e4e2"/><rect x="126.00" y="128.00" width="6.23" height="6.00" fill="#2a5050"/><rect x="128.08" y="130.00" width="2.08" height="2.00" fill="#0e2e2e"/><rect x="146.77" y="128.00" width="6.23" height="6.00" fill="#2a5050"/><rect x="148.85" y="130.00" width="2.08" height="2.00" fill="#0e2e2e"/><rect x="126.00" y="148.00" width="6.23" height="6.00" fill="#2a5050"/><rect x="128.08" y="150.00" width="2.08" height="2.00" fill="#0e2e2e"/></svg><div style="left:2px;top:144px;width:16px;height:16px;background:linear-gradient(135deg,#e6f6f6,#c6eeee)"><svg style="left:0;top:0" width="16" height="16" viewBox="0 0 16 16">
<path d="M3.5 2.5 L10 2.5 L14.5 8 L10 13.5 L3.5 13.5 L6.5 10.5 L4 8 L6.5 5.5 Z" fill="#1a9e9e"/>
<path d="M8 2.5 L10 2.5 L14.5 8 L10 13.5 L8 13.5 L11 8 Z" fill="#0b6f72"/>
<path d="M3.5 2.5 L6.5 5.5 L9 5.5 L7 2.5 Z" fill="#2fc0bd"/>
</svg></div><div style="left:-1px;top:162px;width:171px;height:18px;background:#9c9c9c;border-left:1px solid #a3a3a3;border-right:1px solid #a3a3a3"></div><div class="m" style="left:0;top:164.5px;width:169px;text-align:center;color:#fff;line-height:12px;font-size:11px;letter-spacing:-0.6px">25.max</div></div>
<div style="left:564px;top:525px;width:171px;height:181px;background:#838383;border:1px solid #a3a3a3;border-bottom:none;overflow:hidden"><svg style="left:0;top:0" width="169" height="162" viewBox="1 1 169 162"><rect x="0" y="15" width="171" height="130" fill="#f8f9fa"/><path d="M4 67 L4.0 67.0 L6.7 66.4 L9.4 65.5 L12.1 64.7 L14.8 64.4 L17.5 63.0 L20.2 63.4 L22.9 62.4 L25.6 59.6 L28.3 60.2 L31.0 58.6 L33.7 58.0 L36.4 58.4 L39.1 57.6 L41.8 53.8 L44.5 55.1 L47.2 53.8 L49.9 54.1 L52.6 46.4 L55.3 51.6 L58.0 44.8 L60.7 42.5 L63.4 45.2 L66.1 46.2 L68.8 46.2 L71.5 38.8 L74.2 41.9 L76.9 29.8 L79.6 39.7 L82.3 28.3 L85.0 32.0 L87.7 30.1 L90.4 32.5 L93.1 30.4 L95.8 36.4 L98.5 39.8 L101.2 46.6 L103.9 49.3 L106.6 47.9 L109.3 52.8 L112.0 50.0 L114.7 55.0 L117.4 52.7 L120.1 57.1 L122.8 55.6 L125.5 56.9 L128.2 58.1 L130.9 57.5 L133.6 58.7 L136.3 60.9 L139.0 62.1 L141.7 61.4 L144.4 62.4 L147.1 62.7 L149.8 63.7 L152.5 64.3 L155.2 63.6 L157.9 64.8 L160.6 65.3 L163.3 66.3 L166.0 67.0 L166 67 Z" fill="#2ea2d6"/><path d="M4 67 L4.0 67.0 L6.7 66.5 L9.4 66.0 L12.1 65.4 L14.8 64.4 L17.5 63.8 L20.2 63.3 L22.9 62.1 L25.6 61.1 L28.3 62.1 L31.0 59.7 L33.7 60.5 L36.4 59.2 L39.1 58.5 L41.8 58.3 L44.5 56.6 L47.2 54.1 L49.9 53.8 L52.6 52.2 L55.3 48.8 L58.0 47.6 L60.7 50.0 L63.4 48.6 L66.1 51.0 L68.8 47.2 L71.5 47.9 L74.2 43.1 L76.9 42.2 L79.6 42.9 L82.3 32.2 L85.0 32.1 L87.7 40.0 L90.4 41.1 L93.1 41.2 L95.8 36.3 L98.5 41.2 L101.2 44.8 L103.9 50.9 L106.6 48.9 L109.3 50.9 L112.0 55.4 L114.7 55.1 L117.4 54.3 L120.1 58.9 L122.8 58.0 L125.5 60.3 L128.2 60.1 L130.9 60.5 L133.6 60.9 L136.3 61.1 L139.0 63.4 L141.7 63.0 L144.4 63.1 L147.1 63.2 L149.8 64.1 L152.5 64.8 L155.2 64.5 L157.9 65.4 L160.6 65.9 L163.3 66.4 L166.0 67.0 L166 67 Z" fill="#1b7cb0"/><path d="M4 67 L4.0 67.0 L6.7 66.6 L9.4 66.3 L12.1 66.0 L14.8 65.1 L17.5 64.7 L20.2 64.3 L22.9 63.4 L25.6 62.9 L28.3 62.5 L31.0 61.4 L33.7 61.3 L36.4 59.4 L39.1 61.2 L41.8 60.0 L44.5 57.4 L47.2 57.0 L49.9 58.4 L52.6 55.1 L55.3 56.9 L58.0 52.8 L60.7 54.8 L63.4 54.4 L66.1 52.8 L68.8 53.6 L71.5 53.8 L74.2 53.0 L76.9 44.9 L79.6 46.7 L82.3 42.3 L85.0 47.7 L87.7 45.5 L90.4 47.2 L93.1 45.4 L95.8 44.2 L98.5 48.7 L101.2 51.3 L103.9 54.8 L106.6 57.3 L109.3 58.0 L112.0 57.2 L114.7 57.7 L117.4 60.0 L120.1 59.2 L122.8 60.9 L125.5 62.2 L128.2 61.8 L130.9 62.1 L133.6 61.9 L136.3 62.9 L139.0 64.4 L141.7 63.6 L144.4 63.9 L147.1 64.7 L149.8 64.6 L152.5 65.1 L155.2 65.0 L157.9 65.5 L160.6 66.0 L163.3 66.6 L166.0 67.0 L166 67 Z" fill="#124e74"/><path d="M4 67 L4.0 67.0 L6.7 66.8 L9.4 66.4 L12.1 66.4 L14.8 66.2 L17.5 65.8 L20.2 65.3 L22.9 64.8 L25.6 65.2 L28.3 64.0 L31.0 63.5 L33.7 63.1 L36.4 63.9 L39.1 63.7 L41.8 63.0 L44.5 63.0 L47.2 62.4 L49.9 60.5 L52.6 60.7 L55.3 60.8 L58.0 60.5 L60.7 60.3 L63.4 59.7 L66.1 57.3 L68.8 57.7 L71.5 59.3 L74.2 57.5 L76.9 54.7 L79.6 54.8 L82.3 56.8 L85.0 53.3 L87.7 54.0 L90.4 58.1 L93.1 56.9 L95.8 55.3 L98.5 57.1 L101.2 58.1 L103.9 60.3 L106.6 60.0 L109.3 61.3 L112.0 62.6 L114.7 62.4 L117.4 62.2 L120.1 62.2 L122.8 63.2 L125.5 62.9 L128.2 64.2 L130.9 64.2 L133.6 64.5 L136.3 64.6 L139.0 65.3 L141.7 65.3 L144.4 65.4 L147.1 65.4 L149.8 65.5 L152.5 65.6 L155.2 65.9 L157.9 66.3 L160.6 66.5 L163.3 66.7 L166.0 67.0 L166 67 Z" fill="#173a50"/><path d="M8 67 L8.0 67.0 L10.6 67.3 L13.3 67.7 L15.9 68.2 L18.5 68.3 L21.2 68.8 L23.8 68.8 L26.4 69.8 L29.1 70.0 L31.7 70.2 L34.3 71.5 L37.0 71.2 L39.6 71.2 L42.2 72.4 L44.9 73.5 L47.5 73.2 L50.1 74.4 L52.8 73.9 L55.4 73.6 L58.0 75.1 L60.7 73.7 L63.3 77.5 L65.9 76.4 L68.6 75.1 L71.2 76.8 L73.8 78.8 L76.5 80.5 L79.1 81.5 L81.7 79.4 L84.4 82.8 L87.0 81.3 L89.6 82.4 L92.3 85.0 L94.9 84.9 L97.5 84.7 L100.2 81.6 L102.8 84.6 L105.4 88.5 L108.1 86.7 L110.7 84.3 L113.3 92.8 L116.0 89.5 L118.6 94.3 L121.2 91.6 L123.9 92.2 L126.5 93.2 L129.1 91.1 L131.8 93.5 L134.4 89.0 L137.0 85.2 L139.7 84.7 L142.3 83.7 L144.9 81.3 L147.6 75.8 L150.2 75.9 L152.8 75.2 L155.5 72.3 L158.1 70.1 L160.7 68.6 L163.4 67.7 L166.0 67.0 L166 67 Z" fill="#2ea2d6"/><path d="M8 67 L8.0 67.0 L10.6 67.3 L13.3 67.6 L15.9 67.8 L18.5 67.9 L21.2 68.2 L23.8 68.7 L26.4 68.9 L29.1 69.1 L31.7 69.2 L34.3 69.7 L37.0 69.7 L39.6 70.6 L42.2 70.2 L44.9 70.5 L47.5 72.2 L50.1 70.9 L52.8 71.8 L55.4 72.4 L58.0 71.8 L60.7 72.8 L63.3 74.6 L65.9 74.8 L68.6 74.0 L71.2 74.6 L73.8 74.7 L76.5 77.1 L79.1 75.7 L81.7 77.8 L84.4 79.2 L87.0 76.8 L89.6 78.8 L92.3 80.2 L94.9 79.5 L97.5 82.2 L100.2 79.3 L102.8 81.0 L105.4 80.9 L108.1 81.0 L110.7 85.9 L113.3 80.9 L116.0 83.8 L118.6 89.4 L121.2 84.8 L123.9 88.3 L126.5 88.8 L129.1 83.1 L131.8 82.0 L134.4 84.1 L137.0 79.0 L139.7 80.5 L142.3 80.1 L144.9 78.4 L147.6 76.5 L150.2 73.6 L152.8 73.0 L155.5 71.8 L158.1 69.9 L160.7 68.2 L163.4 67.5 L166.0 67.0 L166 67 Z" fill="#1b7cb0"/><path d="M8 67 L8.0 67.0 L10.6 67.2 L13.3 67.3 L15.9 67.5 L18.5 67.8 L21.2 68.0 L23.8 67.9 L26.4 68.1 L29.1 68.2 L31.7 68.7 L34.3 69.0 L37.0 68.9 L39.6 69.0 L42.2 69.4 L44.9 69.9 L47.5 69.4 L50.1 69.6 L52.8 70.6 L55.4 71.2 L58.0 70.9 L60.7 70.4 L63.3 71.4 L65.9 71.3 L68.6 72.1 L71.2 71.8 L73.8 72.1 L76.5 74.0 L79.1 72.9 L81.7 73.4 L84.4 75.2 L87.0 74.0 L89.6 74.0 L92.3 74.1 L94.9 74.1 L97.5 76.8 L100.2 77.6 L102.8 76.8 L105.4 77.3 L108.1 75.6 L110.7 75.8 L113.3 77.7 L116.0 76.8 L118.6 80.5 L121.2 81.2 L123.9 82.1 L126.5 79.0 L129.1 79.0 L131.8 76.3 L134.4 77.3 L137.0 78.3 L139.7 74.7 L142.3 74.8 L144.9 73.6 L147.6 71.9 L150.2 71.1 L152.8 70.0 L155.5 70.0 L158.1 69.1 L160.7 68.0 L163.4 67.4 L166.0 67.0 L166 67 Z" fill="#124e74"/><rect x="3" y="66.3" width="163" height="1.3" fill="#3a3a3a"/><rect x="104" y="62" width="14" height="3" fill="#d8b880"/><path d="M128 66 L130 59 L138 56 L146 60 L146 66 Z" fill="#f4f4f4" stroke="#bbb" stroke-width="0.5"/><path d="M74 123 L74.0 123.0 L76.4 122.5 L78.8 121.9 L81.3 121.5 L83.7 120.9 L86.1 120.9 L88.5 120.4 L91.0 119.5 L93.4 119.7 L95.8 117.1 L98.2 116.6 L100.7 115.6 L103.1 114.3 L105.5 114.1 L108.0 114.3 L110.4 114.5 L112.8 111.6 L115.2 108.8 L117.7 109.2 L120.1 108.3 L122.5 103.8 L124.9 105.4 L127.3 105.3 L129.8 101.8 L132.2 94.7 L134.6 97.6 L137.1 101.8 L139.5 101.0 L141.9 99.6 L144.3 97.0 L146.8 100.4 L149.2 93.3 L151.6 100.9 L154.0 101.7 L156.4 99.0 L158.9 95.9 L161.3 100.8 L163.7 100.7 L166.2 96.9 L168.6 100.1 L171.0 106.0 L171 123 Z" fill="#2ea2d6"/><path d="M74 123 L74.0 123.0 L76.4 122.6 L78.8 122.3 L81.3 121.7 L83.7 121.7 L86.1 121.3 L88.5 120.6 L91.0 120.6 L93.4 119.8 L95.8 118.8 L98.2 118.7 L100.7 117.0 L103.1 116.0 L105.5 116.9 L108.0 115.5 L110.4 114.1 L112.8 113.4 L115.2 113.4 L117.7 110.2 L120.1 111.6 L122.5 107.5 L124.9 110.4 L127.3 104.8 L129.8 105.6 L132.2 104.3 L134.6 98.7 L137.1 99.1 L139.5 107.0 L141.9 108.7 L144.3 106.7 L146.8 105.5 L149.2 104.8 L151.6 99.8 L154.0 99.7 L156.4 100.6 L158.9 102.8 L161.3 101.8 L163.7 104.1 L166.2 107.1 L168.6 107.5 L171.0 109.4 L171 123 Z" fill="#1b7cb0"/><path d="M74 123 L74.0 123.0 L76.4 122.7 L78.8 122.6 L81.3 122.2 L83.7 122.2 L86.1 121.5 L88.5 121.2 L91.0 121.0 L93.4 120.9 L95.8 120.7 L98.2 119.9 L100.7 119.8 L103.1 118.2 L105.5 118.1 L108.0 117.7 L110.4 116.6 L112.8 115.4 L115.2 114.7 L117.7 114.4 L120.1 113.7 L122.5 113.1 L124.9 110.6 L127.3 111.9 L129.8 112.1 L132.2 110.5 L134.6 107.4 L137.1 108.6 L139.5 111.5 L141.9 109.9 L144.3 110.4 L146.8 108.3 L149.2 106.8 L151.6 107.5 L154.0 110.6 L156.4 111.0 L158.9 107.8 L161.3 111.2 L163.7 112.1 L166.2 111.5 L168.6 110.7 L171.0 113.6 L171 123 Z" fill="#124e74"/><path d="M78 123 L78.0 123.0 L80.3 123.4 L82.7 123.6 L85.0 123.9 L87.3 124.3 L89.6 124.5 L92.0 124.7 L94.3 125.5 L96.6 125.6 L98.9 125.5 L101.2 125.8 L103.6 127.0 L105.9 126.6 L108.2 128.3 L110.5 128.0 L112.9 129.0 L115.2 129.3 L117.5 130.4 L119.8 129.8 L122.2 131.5 L124.5 131.1 L126.8 131.4 L129.2 132.4 L131.5 132.4 L133.8 133.0 L136.1 134.6 L138.4 134.9 L140.8 132.4 L143.1 133.6 L145.4 133.9 L147.8 133.4 L150.1 133.7 L152.4 133.0 L154.7 131.7 L157.1 130.0 L159.4 131.1 L161.7 129.3 L164.0 128.5 L166.3 129.2 L168.7 128.3 L171.0 127.0 L171 123 Z" fill="#2ea2d6"/><path d="M78 123 L78.0 123.0 L80.3 123.2 L82.7 123.4 L85.0 123.5 L87.3 123.8 L89.6 124.0 L92.0 124.3 L94.3 124.5 L96.6 124.4 L98.9 124.8 L101.2 125.0 L103.6 125.2 L105.9 125.2 L108.2 125.4 L110.5 125.8 L112.9 126.3 L115.2 126.7 L117.5 127.4 L119.8 127.4 L122.2 127.1 L124.5 127.8 L126.8 129.0 L129.2 128.0 L131.5 128.5 L133.8 129.2 L136.1 130.3 L138.4 129.1 L140.8 130.0 L143.1 129.6 L145.4 128.3 L147.8 128.4 L150.1 129.4 L152.4 128.7 L154.7 127.8 L157.1 127.8 L159.4 127.7 L161.7 126.8 L164.0 127.2 L166.3 126.3 L168.7 125.6 L171.0 125.4 L171 123 Z" fill="#124e74"/><rect x="74" y="122.4" width="97" height="1.3" fill="#3a3a3a"/><rect x="128" y="118" width="22" height="19" fill="#7a9e9c"/><rect x="128.00" y="118.00" width="1.79" height="1.56" fill="#2a5454"/><rect x="128.00" y="119.46" width="1.79" height="1.56" fill="#d2e4e2"/><rect x="128.00" y="120.92" width="1.79" height="1.56" fill="#d2e4e2"/><rect x="128.00" y="122.38" width="1.79" height="1.56" fill="#2a5454"/><rect x="128.00" y="123.85" width="1.79" height="1.56" fill="#d2e4e2"/><rect x="128.00" y="128.23" width="1.79" height="1.56" fill="#d2e4e2"/><rect x="128.00" y="129.69" width="1.79" height="1.56" fill="#2a5454"/><rect x="128.00" y="131.15" width="1.79" height="1.56" fill="#2a5454"/><rect x="128.00" y="132.62" width="1.79" height="1.56" fill="#2a5454"/><rect x="129.69" y="118.00" width="1.79" height="1.56" fill="#d2e4e2"/><rect x="129.69" y="123.85" width="1.79" height="1.56" fill="#d2e4e2"/><rect x="129.69" y="126.77" width="1.79" height="1.56" fill="#d2e4e2"/><rect x="129.69" y="128.23" width="1.79" height="1.56" fill="#d2e4e2"/><rect x="129.69" y="129.69" width="1.79" height="1.56" fill="#2a5454"/><rect x="129.69" y="134.08" width="1.79" height="1.56" fill="#d2e4e2"/><rect x="131.38" y="118.00" width="1.79" height="1.56" fill="#d2e4e2"/><rect x="131.38" y="120.92" width="1.79" height="1.56" fill="#d2e4e2"/><rect x="131.38" y="122.38" width="1.79" height="1.56" fill="#2a5454"/><rect x="131.38" y="123.85" width="1.79" height="1.56" fill="#d2e4e2"/><rect x="131.38" y="125.31" width="1.79" height="1.56" fill="#d2e4e2"/><rect x="131.38" y="126.77" width="1.79" height="1.56" fill="#d2e4e2"/><rect x="131.38" y="128.23" width="1.79" height="1.56" fill="#2a5454"/><rect x="131.38" y="129.69" width="1.79" height="1.56" fill="#2a5454"/><rect x="131.38" y="134.08" width="1.79" height="1.56" fill="#d2e4e2"/><rect x="133.08" y="118.00" width="1.79" height="1.56" fill="#d2e4e2"/><rect x="133.08" y="120.92" width="1.79" height="1.56" fill="#d2e4e2"/><rect x="133.08" y="123.85" width="1.79" height="1.56" fill="#d2e4e2"/><rect x="133.08" y="125.31" width="1.79" height="1.56" fill="#d2e4e2"/><rect x="133.08" y="126.77" width="1.79" height="1.56" fill="#2a5454"/><rect x="133.08" y="128.23" width="1.79" height="1.56" fill="#d2e4e2"/><rect x="133.08" y="129.69" width="1.79" height="1.56" fill="#d2e4e2"/><rect x="133.08" y="131.15" width="1.79" height="1.56" fill="#2a5454"/><rect x="133.08" y="132.62" width="1.79" height="1.56" fill="#2a5454"/><rect x="133.08" y="134.08" width="1.79" height="1.56" fill="#d2e4e2"/><rect x="133.08" y="135.54" width="1.79" height="1.56" fill="#d2e4e2"/><rect x="134.77" y="118.00" width="1.79" height="1.56" fill="#d2e4e2"/><rect x="134.77" y="122.38" width="1.79" height="1.56" fill="#d2e4e2"/><rect x="134.77" y="123.85" width="1.79" height="1.56" fill="#2a5454"/><rect x="134.77" y="125.31" width="1.79" height="1.56" fill="#d2e4e2"/><rect x="134.77" y="129.69" width="1.79" height="1.56" fill="#2a5454"/><rect x="134.77" y="131.15" width="1.79" height="1.56" fill="#2a5454"/><rect x="134.77" y="132.62" width="1.79" height="1.56" fill="#d2e4e2"/><rect x="134.77" y="134.08" width="1.79" height="1.56" fill="#d2e4e2"/><rect x="134.77" y="135.54" width="1.79" height="1.56" fill="#d2e4e2"/><rect x="136.46" y="118.00" width="1.79" height="1.56" fill="#d2e4e2"/><rect x="136.46" y="119.46" width="1.79" height="1.56" fill="#d2e4e2"/><rect x="136.46" y="122.38" width="1.79" height="1.56" fill="#d2e4e2"/><rect x="136.46" y="129.69" width="1.79" height="1.56" fill="#2a5454"/><rect x="136.46" y="131.15" width="1.79" height="1.56" fill="#d2e4e2"/><rect x="136.46" y="132.62" width="1.79" height="1.56" fill="#d2e4e2"/><rect x="136.46" y="134.08" width="1.79" height="1.56" fill="#d2e4e2"/><rect x="136.46" y="135.54" width="1.79" height="1.56" fill="#d2e4e2"/><rect x="138.15" y="118.00" width="1.79" height="1.56" fill="#d2e4e2"/><rect x="138.15" y="119.46" width="1.79" height="1.56" fill="#2a5454"/><rect x="138.15" y="120.92" width="1.79" height="1.56" fill="#2a5454"/><rect x="138.15" y="123.85" width="1.79" height="1.56" fill="#2a5454"/><rect x="138.15" y="126.77" width="1.79" height="1.56" fill="#d2e4e2"/><rect x="138.15" y="128.23" width="1.79" height="1.56" fill="#2a5454"/><rect x="138.15" y="131.15" width="1.79" height="1.56" fill="#d2e4e2"/><rect x="138.15" y="132.62" width="1.79" height="1.56" fill="#d2e4e2"/><rect x="138.15" y="134.08" width="1.79" height="1.56" fill="#d2e4e2"/><rect x="138.15" y="135.54" width="1.79" height="1.56" fill="#d2e4e2"/><rect x="139.85" y="118.00" width="1.79" height="1.56" fill="#d2e4e2"/><rect x="139.85" y="119.46" width="1.79" height="1.56" fill="#d2e4e2"/><rect x="139.85" y="120.92" width="1.79" height="1.56" fill="#d2e4e2"/><rect x="139.85" y="122.38" width="1.79" height="1.56" fill="#d2e4e2"/><rect x="139.85" y="123.85" width="1.79" height="1.56" fill="#2a5454"/><rect x="139.85" y="125.31" width="1.79" height="1.56" fill="#d2e4e2"/><rect x="139.85" y="126.77" width="1.79" height="1.56" fill="#d2e4e2"/><rect x="139.85" y="128.23" width="1.79" height="1.56" fill="#2a5454"/><rect x="139.85" y="129.69" width="1.79" height="1.56" fill="#d2e4e2"/><rect x="139.85" y="131.15" width="1.79" height="1.56" fill="#d2e4e2"/><rect x="139.85" y="134.08" width="1.79" height="1.56" fill="#d2e4e2"/><rect x="141.54" y="118.00" width="1.79" height="1.56" fill="#2a5454"/><rect x="141.54" y="119.46" width="1.79" height="1.56" fill="#2a5454"/><rect x="141.54" y="120.92" width="1.79" height="1.56" fill="#d2e4e2"/><rect x="141.54" y="122.38" width="1.79" height="1.56" fill="#d2e4e2"/><rect x="141.54" y="125.31" width="1.79" height="1.56" fill="#d2e4e2"/><rect x="141.54" y="126.77" width="1.79" height="1.56" fill="#d2e4e2"/><rect x="141.54" y="128.23" width="1.79" height="1.56" fill="#d2e4e2"/><rect x="141.54" y="129.69" width="1.79" height="1.56" fill="#2a5454"/><rect x="141.54" y="132.62" width="1.79" height="1.56" fill="#d2e4e2"/><rect x="141.54" y="135.54" width="1.79" height="1.56" fill="#2a5454"/><rect x="143.23" y="118.00" width="1.79" height="1.56" fill="#2a5454"/><rect x="143.23" y="119.46" width="1.79" height="1.56" fill="#2a5454"/><rect x="143.23" y="120.92" width="1.79" height="1.56" fill="#2a5454"/><rect x="143.23" y="123.85" width="1.79" height="1.56" fill="#d2e4e2"/><rect x="143.23" y="125.31" width="1.79" height="1.56" fill="#d2e4e2"/><rect x="143.23" y="126.77" width="1.79" height="1.56" fill="#d2e4e2"/><rect x="143.23" y="128.23" width="1.79" height="1.56" fill="#d2e4e2"/><rect x="143.23" y="129.69" width="1.79" height="1.56" fill="#d2e4e2"/><rect x="143.23" y="131.15" width="1.79" height="1.56" fill="#d2e4e2"/><rect x="143.23" y="132.62" width="1.79" height="1.56" fill="#d2e4e2"/><rect x="143.23" y="134.08" width="1.79" height="1.56" fill="#d2e4e2"/><rect x="143.23" y="135.54" width="1.79" height="1.56" fill="#d2e4e2"/><rect x="144.92" y="119.46" width="1.79" height="1.56" fill="#2a5454"/><rect x="144.92" y="120.92" width="1.79" height="1.56" fill="#d2e4e2"/><rect x="144.92" y="122.38" width="1.79" height="1.56" fill="#d2e4e2"/><rect x="144.92" y="125.31" width="1.79" height="1.56" fill="#d2e4e2"/><rect x="144.92" y="126.77" width="1.79" height="1.56" fill="#2a5454"/><rect x="144.92" y="128.23" width="1.79" height="1.56" fill="#d2e4e2"/><rect x="144.92" y="129.69" width="1.79" height="1.56" fill="#2a5454"/><rect x="144.92" y="131.15" width="1.79" height="1.56" fill="#2a5454"/><rect x="144.92" y="132.62" width="1.79" height="1.56" fill="#2a5454"/><rect x="146.62" y="119.46" width="1.79" height="1.56" fill="#d2e4e2"/><rect x="146.62" y="120.92" width="1.79" height="1.56" fill="#d2e4e2"/><rect x="146.62" y="122.38" width="1.79" height="1.56" fill="#d2e4e2"/><rect x="146.62" y="123.85" width="1.79" height="1.56" fill="#2a5454"/><rect x="146.62" y="125.31" width="1.79" height="1.56" fill="#d2e4e2"/><rect x="146.62" y="126.77" width="1.79" height="1.56" fill="#d2e4e2"/><rect x="146.62" y="128.23" width="1.79" height="1.56" fill="#d2e4e2"/><rect x="146.62" y="129.69" width="1.79" height="1.56" fill="#d2e4e2"/><rect x="146.62" y="131.15" width="1.79" height="1.56" fill="#d2e4e2"/><rect x="146.62" y="132.62" width="1.79" height="1.56" fill="#d2e4e2"/><rect x="146.62" y="134.08" width="1.79" height="1.56" fill="#2a5454"/><rect x="148.31" y="118.00" width="1.79" height="1.56" fill="#2a5454"/><rect x="148.31" y="119.46" width="1.79" height="1.56" fill="#d2e4e2"/><rect x="148.31" y="120.92" width="1.79" height="1.56" fill="#d2e4e2"/><rect x="148.31" y="123.85" width="1.79" height="1.56" fill="#d2e4e2"/><rect x="148.31" y="125.31" width="1.79" height="1.56" fill="#2a5454"/><rect x="148.31" y="128.23" width="1.79" height="1.56" fill="#2a5454"/><rect x="148.31" y="129.69" width="1.79" height="1.56" fill="#d2e4e2"/><rect x="148.31" y="131.15" width="1.79" height="1.56" fill="#d2e4e2"/><rect x="148.31" y="132.62" width="1.79" height="1.56" fill="#d2e4e2"/><rect x="148.31" y="135.54" width="1.79" height="1.56" fill="#d2e4e2"/><rect x="128.00" y="118.00" width="5.08" height="4.38" fill="#2a5050"/><rect x="129.69" y="119.46" width="1.69" height="1.46" fill="#0e2e2e"/><rect x="144.92" y="118.00" width="5.08" height="4.38" fill="#2a5050"/><rect x="146.62" y="119.46" width="1.69" height="1.46" fill="#0e2e2e"/><rect x="128.00" y="132.62" width="5.08" height="4.38" fill="#2a5050"/><rect x="129.69" y="134.08" width="1.69" height="1.46" fill="#0e2e2e"/></svg><div style="left:2px;top:144px;width:16px;height:16px;background:linear-gradient(135deg,#e6f6f6,#c6eeee)"><svg style="left:0;top:0" width="16" height="16" viewBox="0 0 16 16">
<path d="M3.5 2.5 L10 2.5 L14.5 8 L10 13.5 L3.5 13.5 L6.5 10.5 L4 8 L6.5 5.5 Z" fill="#1a9e9e"/>
<path d="M8 2.5 L10 2.5 L14.5 8 L10 13.5 L8 13.5 L11 8 Z" fill="#0b6f72"/>
<path d="M3.5 2.5 L6.5 5.5 L9 5.5 L7 2.5 Z" fill="#2fc0bd"/>
</svg></div><div style="left:-1px;top:162px;width:171px;height:18px;background:#9c9c9c;border-left:1px solid #a3a3a3;border-right:1px solid #a3a3a3"></div><div class="m" style="left:0;top:164.5px;width:169px;text-align:center;color:#fff;line-height:12px;font-size:11px;letter-spacing:-0.6px">26.max</div></div>
<div style="left:747px;top:525px;width:171px;height:181px;background:#838383;border:1px solid #a3a3a3;border-bottom:none;overflow:hidden"><svg style="left:0;top:0" width="169" height="162" viewBox="1 1 169 162"><rect x="0" y="16" width="171" height="127" fill="#f0ede9"/><rect x="29.0" y="37.5" width="9.0" height="7.2" fill="none" stroke="#8c8c8c" stroke-width="0.7" transform="rotate(-11 33.5 42.0)"/><rect x="23.3" y="40.9" width="8.9" height="7.1" fill="none" stroke="#8c8c8c" stroke-width="0.7" transform="rotate(8 27.7 45.3)"/><rect x="27.3" y="44.3" width="8.7" height="7.0" fill="none" stroke="#8c8c8c" stroke-width="0.7" transform="rotate(6 31.7 48.7)"/><rect x="32.4" y="47.7" width="8.6" height="6.9" fill="none" stroke="#8c8c8c" stroke-width="0.7" transform="rotate(-29 36.7 52.0)"/><rect x="35.8" y="51.1" width="8.4" height="6.7" fill="none" stroke="#8c8c8c" stroke-width="0.7" transform="rotate(-1 40.0 55.3)"/><rect x="31.2" y="54.5" width="8.3" height="6.6" fill="none" stroke="#8c8c8c" stroke-width="0.7" transform="rotate(13 35.4 58.7)"/><rect x="37.6" y="57.9" width="8.1" height="6.5" fill="none" stroke="#8c8c8c" stroke-width="0.7" transform="rotate(2 41.7 62.0)"/><rect x="31.5" y="61.3" width="8.0" height="6.4" fill="none" stroke="#8c8c8c" stroke-width="0.7" transform="rotate(13 35.5 65.3)"/><rect x="33.0" y="64.7" width="7.9" height="6.3" fill="none" stroke="#8c8c8c" stroke-width="0.7" transform="rotate(33 36.9 68.7)"/><rect x="29.7" y="68.1" width="7.7" height="6.2" fill="none" stroke="#8c8c8c" stroke-width="0.7" transform="rotate(6 33.6 72.0)"/><rect x="34.3" y="71.5" width="7.6" height="6.1" fill="none" stroke="#8c8c8c" stroke-width="0.7" transform="rotate(-36 38.0 75.3)"/><rect x="32.7" y="75.0" width="7.4" height="5.9" fill="none" stroke="#8c8c8c" stroke-width="0.7" transform="rotate(8 36.4 78.7)"/><rect x="29.7" y="78.4" width="7.3" height="5.8" fill="none" stroke="#8c8c8c" stroke-width="0.7" transform="rotate(19 33.3 82.0)"/><rect x="22.2" y="81.8" width="7.1" height="5.7" fill="none" stroke="#8c8c8c" stroke-width="0.7" transform="rotate(-27 25.8 85.3)"/><rect x="23.1" y="85.2" width="7.0" height="5.6" fill="none" stroke="#8c8c8c" stroke-width="0.7" transform="rotate(31 26.6 88.7)"/><rect x="25.7" y="88.6" width="6.9" height="5.5" fill="none" stroke="#8c8c8c" stroke-width="0.7" transform="rotate(-0 29.2 92.0)"/><rect x="19.9" y="92.0" width="6.7" height="5.4" fill="none" stroke="#8c8c8c" stroke-width="0.7" transform="rotate(-11 23.3 95.3)"/><rect x="19.8" y="95.4" width="6.6" height="5.3" fill="none" stroke="#8c8c8c" stroke-width="0.7" transform="rotate(-5 23.1 98.7)"/><rect x="23.7" y="98.8" width="6.4" height="5.1" fill="none" stroke="#8c8c8c" stroke-width="0.7" transform="rotate(-15 27.0 102.0)"/><rect x="14.7" y="102.2" width="6.3" height="5.0" fill="none" stroke="#8c8c8c" stroke-width="0.7" transform="rotate(11 17.9 105.3)"/><rect x="21.7" y="105.6" width="6.1" height="4.9" fill="none" stroke="#8c8c8c" stroke-width="0.7" transform="rotate(-39 24.8 108.7)"/><rect x="17.4" y="109.0" width="6.0" height="4.8" fill="none" stroke="#8c8c8c" stroke-width="0.7" transform="rotate(36 20.4 112.0)"/><rect x="95.3" y="63.6" width="2.6" height="1.6" fill="#c8b0a0" transform="rotate(29 95.3 63.6)"/><rect x="94.7" y="65.5" width="2.6" height="1.6" fill="#8a6a58" transform="rotate(34 94.7 65.5)"/><rect x="93.7" y="64.6" width="2.6" height="1.6" fill="#6a5040" transform="rotate(39 93.7 64.6)"/><rect x="90.7" y="66.7" width="2.6" height="1.6" fill="#6a5040" transform="rotate(44 90.7 66.7)"/><rect x="89.4" y="67.9" width="2.6" height="1.6" fill="#c8b0a0" transform="rotate(50 89.4 67.9)"/><rect x="88.4" y="69.6" width="2.6" height="1.6" fill="#b09080" transform="rotate(55 88.4 69.6)"/><rect x="87.0" y="67.8" width="2.6" height="1.6" fill="#8a6a58" transform="rotate(60 87.0 67.8)"/><rect x="85.5" y="70.5" width="2.6" height="1.6" fill="#6a5040" transform="rotate(65 85.5 70.5)"/><rect x="84.7" y="69.8" width="2.6" height="1.6" fill="#8a6a58" transform="rotate(71 84.7 69.8)"/><rect x="81.5" y="69.6" width="2.6" height="1.6" fill="#b09080" transform="rotate(76 81.5 69.6)"/><rect x="80.0" y="71.0" width="2.6" height="1.6" fill="#b09080" transform="rotate(81 80.0 71.0)"/><rect x="77.3" y="71.4" width="2.6" height="1.6" fill="#8a6a58" transform="rotate(86 77.3 71.4)"/><rect x="76.9" y="71.2" width="2.6" height="1.6" fill="#6a5040" transform="rotate(91 76.9 71.2)"/><rect x="75.4" y="70.2" width="2.6" height="1.6" fill="#c8b0a0" transform="rotate(97 75.4 70.2)"/><rect x="73.9" y="70.0" width="2.6" height="1.6" fill="#6a5040" transform="rotate(102 73.9 70.0)"/><rect x="71.0" y="70.1" width="2.6" height="1.6" fill="#b09080" transform="rotate(107 71.0 70.1)"/><rect x="71.3" y="68.2" width="2.6" height="1.6" fill="#c8b0a0" transform="rotate(112 71.3 68.2)"/><rect x="68.4" y="68.2" width="2.6" height="1.6" fill="#6a5040" transform="rotate(118 68.4 68.2)"/><rect x="67.3" y="67.4" width="2.6" height="1.6" fill="#6a5040" transform="rotate(123 67.3 67.4)"/><rect x="66.2" y="65.6" width="2.6" height="1.6" fill="#c8b0a0" transform="rotate(128 66.2 65.6)"/><rect x="64.9" y="66.7" width="2.6" height="1.6" fill="#b09080" transform="rotate(133 64.9 66.7)"/><rect x="64.1" y="64.4" width="2.6" height="1.6" fill="#6a5040" transform="rotate(139 64.1 64.4)"/><rect x="64.7" y="62.9" width="2.6" height="1.6" fill="#6a5040" transform="rotate(144 64.7 62.9)"/><rect x="61.7" y="61.1" width="2.6" height="1.6" fill="#8a6a58" transform="rotate(149 61.7 61.1)"/><rect x="61.3" y="62.4" width="2.6" height="1.6" fill="#8a6a58" transform="rotate(154 61.3 62.4)"/><rect x="60.4" y="59.4" width="2.6" height="1.6" fill="#6a5040" transform="rotate(160 60.4 59.4)"/><rect x="61.2" y="59.6" width="2.6" height="1.6" fill="#b09080" transform="rotate(165 61.2 59.6)"/><rect x="61.4" y="58.1" width="2.6" height="1.6" fill="#8a6a58" transform="rotate(170 61.4 58.1)"/><rect x="61.1" y="55.2" width="2.6" height="1.6" fill="#b09080" transform="rotate(175 61.1 55.2)"/><rect x="60.4" y="55.3" width="2.6" height="1.6" fill="#b09080" transform="rotate(181 60.4 55.3)"/><rect x="61.7" y="53.4" width="2.6" height="1.6" fill="#c8b0a0" transform="rotate(186 61.7 53.4)"/><rect x="60.1" y="52.8" width="2.6" height="1.6" fill="#b09080" transform="rotate(191 60.1 52.8)"/><rect x="61.9" y="52.6" width="2.6" height="1.6" fill="#8a6a58" transform="rotate(196 61.9 52.6)"/><rect x="63.5" y="49.3" width="2.6" height="1.6" fill="#8a6a58" transform="rotate(201 63.5 49.3)"/><rect x="62.2" y="50.4" width="2.6" height="1.6" fill="#c8b0a0" transform="rotate(207 62.2 50.4)"/><rect x="62.9" y="49.2" width="2.6" height="1.6" fill="#c8b0a0" transform="rotate(212 62.9 49.2)"/><rect x="65.5" y="47.1" width="2.6" height="1.6" fill="#6a5040" transform="rotate(217 65.5 47.1)"/><rect x="64.6" y="46.6" width="2.6" height="1.6" fill="#c8b0a0" transform="rotate(222 64.6 46.6)"/><rect x="67.4" y="44.7" width="2.6" height="1.6" fill="#b09080" transform="rotate(228 67.4 44.7)"/><rect x="68.1" y="46.0" width="2.6" height="1.6" fill="#6a5040" transform="rotate(233 68.1 46.0)"/><rect x="70.4" y="44.9" width="2.6" height="1.6" fill="#b09080" transform="rotate(238 70.4 44.9)"/><rect x="69.1" y="44.3" width="2.6" height="1.6" fill="#6a5040" transform="rotate(243 69.1 44.3)"/><rect x="72.7" y="43.9" width="2.6" height="1.6" fill="#b09080" transform="rotate(249 72.7 43.9)"/><rect x="73.5" y="42.8" width="2.6" height="1.6" fill="#c8b0a0" transform="rotate(254 73.5 42.8)"/><rect x="74.7" y="42.3" width="2.6" height="1.6" fill="#b09080" transform="rotate(259 74.7 42.3)"/><rect x="77.0" y="43.6" width="2.6" height="1.6" fill="#8a6a58" transform="rotate(264 77.0 43.6)"/><rect x="75.7" y="44.2" width="2.6" height="1.6" fill="#b09080" transform="rotate(270 75.7 44.2)"/><rect x="79.5" y="43.6" width="2.6" height="1.6" fill="#b09080" transform="rotate(275 79.5 43.6)"/><rect x="80.5" y="42.3" width="2.6" height="1.6" fill="#b09080" transform="rotate(280 80.5 42.3)"/><rect x="80.9" y="44.4" width="2.6" height="1.6" fill="#6a5040" transform="rotate(285 80.9 44.4)"/><rect x="81.6" y="45.8" width="2.6" height="1.6" fill="#c8b0a0" transform="rotate(290 81.6 45.8)"/><rect x="83.6" y="44.8" width="2.6" height="1.6" fill="#6a5040" transform="rotate(296 83.6 44.8)"/><rect x="84.3" y="44.8" width="2.6" height="1.6" fill="#8a6a58" transform="rotate(301 84.3 44.8)"/><rect x="83.8" y="45.9" width="2.6" height="1.6" fill="#8a6a58" transform="rotate(306 83.8 45.9)"/><rect x="86.7" y="45.9" width="2.6" height="1.6" fill="#b09080" transform="rotate(311 86.7 45.9)"/><rect x="86.9" y="46.9" width="2.6" height="1.6" fill="#c8b0a0" transform="rotate(317 86.9 46.9)"/><rect x="86.6" y="48.8" width="2.6" height="1.6" fill="#c8b0a0" transform="rotate(322 86.6 48.8)"/><rect x="86.4" y="49.6" width="2.6" height="1.6" fill="#c8b0a0" transform="rotate(327 86.4 49.6)"/><rect x="87.9" y="50.2" width="2.6" height="1.6" fill="#b09080" transform="rotate(332 87.9 50.2)"/><rect x="89.5" y="52.5" width="2.6" height="1.6" fill="#b09080" transform="rotate(338 89.5 52.5)"/><rect x="89.5" y="51.2" width="2.6" height="1.6" fill="#8a6a58" transform="rotate(343 89.5 51.2)"/><rect x="89.2" y="52.3" width="2.6" height="1.6" fill="#b09080" transform="rotate(348 89.2 52.3)"/><rect x="87.1" y="54.8" width="2.6" height="1.6" fill="#b09080" transform="rotate(353 87.1 54.8)"/><rect x="86.9" y="54.7" width="2.6" height="1.6" fill="#8a6a58" transform="rotate(359 86.9 54.7)"/><rect x="87.9" y="56.1" width="2.6" height="1.6" fill="#6a5040" transform="rotate(364 87.9 56.1)"/><rect x="88.2" y="55.9" width="2.6" height="1.6" fill="#8a6a58" transform="rotate(369 88.2 55.9)"/><rect x="88.4" y="58.7" width="2.6" height="1.6" fill="#6a5040" transform="rotate(374 88.4 58.7)"/><rect x="87.4" y="57.3" width="2.6" height="1.6" fill="#b09080" transform="rotate(379 87.4 57.3)"/><rect x="87.9" y="57.5" width="2.6" height="1.6" fill="#8a6a58" transform="rotate(385 87.9 57.5)"/><rect x="86.0" y="59.1" width="2.6" height="1.6" fill="#6a5040" transform="rotate(390 86.0 59.1)"/><rect x="85.8" y="59.7" width="2.6" height="1.6" fill="#c8b0a0" transform="rotate(395 85.8 59.7)"/><rect x="85.3" y="61.9" width="2.6" height="1.6" fill="#8a6a58" transform="rotate(400 85.3 61.9)"/><rect x="84.2" y="60.8" width="2.6" height="1.6" fill="#b09080" transform="rotate(406 84.2 60.8)"/><rect x="82.1" y="60.2" width="2.6" height="1.6" fill="#c8b0a0" transform="rotate(411 82.1 60.2)"/><rect x="83.9" y="60.6" width="2.6" height="1.6" fill="#c8b0a0" transform="rotate(416 83.9 60.6)"/><rect x="81.1" y="63.1" width="2.6" height="1.6" fill="#c8b0a0" transform="rotate(421 81.1 63.1)"/><rect x="80.1" y="61.9" width="2.6" height="1.6" fill="#6a5040" transform="rotate(427 80.1 61.9)"/><rect x="79.6" y="63.3" width="2.6" height="1.6" fill="#c8b0a0" transform="rotate(432 79.6 63.3)"/><rect x="80.4" y="63.1" width="2.6" height="1.6" fill="#6a5040" transform="rotate(437 80.4 63.1)"/><rect x="76.9" y="63.2" width="2.6" height="1.6" fill="#8a6a58" transform="rotate(442 76.9 63.2)"/><rect x="77.9" y="61.7" width="2.6" height="1.6" fill="#c8b0a0" transform="rotate(448 77.9 61.7)"/><rect x="77.7" y="63.8" width="2.6" height="1.6" fill="#b09080" transform="rotate(453 77.7 63.8)"/><rect x="76.6" y="62.8" width="2.6" height="1.6" fill="#c8b0a0" transform="rotate(458 76.6 62.8)"/><rect x="74.4" y="61.9" width="2.6" height="1.6" fill="#c8b0a0" transform="rotate(463 74.4 61.9)"/><rect x="73.9" y="60.7" width="2.6" height="1.6" fill="#c8b0a0" transform="rotate(469 73.9 60.7)"/><rect x="74.8" y="62.3" width="2.6" height="1.6" fill="#b09080" transform="rotate(474 74.8 62.3)"/><rect x="71.6" y="61.0" width="2.6" height="1.6" fill="#6a5040" transform="rotate(479 71.6 61.0)"/><rect x="73.3" y="60.5" width="2.6" height="1.6" fill="#c8b0a0" transform="rotate(484 73.3 60.5)"/><rect x="73.0" y="60.0" width="2.6" height="1.6" fill="#6a5040" transform="rotate(489 73.0 60.0)"/><rect x="70.6" y="59.9" width="2.6" height="1.6" fill="#b09080" transform="rotate(495 70.6 59.9)"/><rect x="70.0" y="59.1" width="2.6" height="1.6" fill="#c8b0a0" transform="rotate(500 70.0 59.1)"/><rect x="69.8" y="58.2" width="2.6" height="1.6" fill="#6a5040" transform="rotate(505 69.8 58.2)"/><rect x="69.3" y="57.1" width="2.6" height="1.6" fill="#b09080" transform="rotate(510 69.3 57.1)"/><rect x="69.8" y="57.3" width="2.6" height="1.6" fill="#b09080" transform="rotate(516 69.8 57.3)"/><rect x="71.0" y="55.8" width="2.6" height="1.6" fill="#c8b0a0" transform="rotate(521 71.0 55.8)"/><rect x="70.4" y="57.8" width="2.6" height="1.6" fill="#8a6a58" transform="rotate(526 70.4 57.8)"/><rect x="71.3" y="56.6" width="2.6" height="1.6" fill="#c8b0a0" transform="rotate(531 71.3 56.6)"/><rect x="69.7" y="56.0" width="2.6" height="1.6" fill="#c8b0a0" transform="rotate(537 69.7 56.0)"/><rect x="69.0" y="56.2" width="2.6" height="1.6" fill="#8a6a58" transform="rotate(542 69.0 56.2)"/><rect x="70.5" y="55.3" width="2.6" height="1.6" fill="#8a6a58" transform="rotate(547 70.5 55.3)"/><rect x="69.4" y="53.0" width="2.6" height="1.6" fill="#b09080" transform="rotate(552 69.4 53.0)"/><rect x="69.9" y="54.8" width="2.6" height="1.6" fill="#6a5040" transform="rotate(558 69.9 54.8)"/><rect x="72.3" y="53.6" width="2.6" height="1.6" fill="#8a6a58" transform="rotate(563 72.3 53.6)"/><rect x="73.2" y="51.7" width="2.6" height="1.6" fill="#b09080" transform="rotate(568 73.2 51.7)"/><rect x="72.7" y="52.1" width="2.6" height="1.6" fill="#b09080" transform="rotate(573 72.7 52.1)"/><rect x="71.6" y="50.6" width="2.6" height="1.6" fill="#c8b0a0" transform="rotate(578 71.6 50.6)"/><rect x="74.4" y="53.1" width="2.6" height="1.6" fill="#c8b0a0" transform="rotate(584 74.4 53.1)"/><rect x="72.0" y="51.5" width="2.6" height="1.6" fill="#6a5040" transform="rotate(589 72.0 51.5)"/><rect x="75.2" y="52.3" width="2.6" height="1.6" fill="#c8b0a0" transform="rotate(594 75.2 52.3)"/><rect x="74.0" y="51.0" width="2.6" height="1.6" fill="#c8b0a0" transform="rotate(599 74.0 51.0)"/><circle cx="105.0" cy="43.0" r="1.8" fill="#1e1a1a"/><path d="M105.0 45.0 L105.0 50.0 M101.0 45.0 L105.0 46.5 L109.0 44.0 M105.0 50.0 L101.5 55.0 M105.0 50.0 L108.0 55.0" stroke="#1e1a1a" stroke-width="2.4" stroke-linecap="round" fill="none"/><circle cx="116.0" cy="40.0" r="1.8" fill="#1e1a1a"/><path d="M116.0 42.0 L116.0 47.0 M112.0 42.0 L116.0 43.5 L120.0 41.0 M116.0 47.0 L112.5 52.0 M116.0 47.0 L119.0 52.0" stroke="#1e1a1a" stroke-width="2.4" stroke-linecap="round" fill="none"/><circle cx="127.0" cy="44.0" r="1.8" fill="#1e1a1a"/><path d="M127.0 46.0 L127.0 51.0 M123.0 46.0 L127.0 47.5 L131.0 45.0 M127.0 51.0 L123.5 56.0 M127.0 51.0 L130.0 56.0" stroke="#1e1a1a" stroke-width="2.4" stroke-linecap="round" fill="none"/><circle cx="137.0" cy="40.0" r="1.8" fill="#1e1a1a"/><path d="M137.0 42.0 L137.0 47.0 M133.0 42.0 L137.0 43.5 L141.0 41.0 M137.0 47.0 L133.5 52.0 M137.0 47.0 L140.0 52.0" stroke="#1e1a1a" stroke-width="2.4" stroke-linecap="round" fill="none"/><circle cx="145.0" cy="44.0" r="1.8" fill="#1e1a1a"/><path d="M145.0 46.0 L145.0 51.0 M141.0 46.0 L145.0 47.5 L149.0 45.0 M145.0 51.0 L141.5 56.0 M145.0 51.0 L148.0 56.0" stroke="#1e1a1a" stroke-width="2.4" stroke-linecap="round" fill="none"/><circle cx="156.0" cy="40.0" r="1.8" fill="#1e1a1a"/><path d="M156.0 42.0 L156.0 47.0 M152.0 42.0 L156.0 43.5 L160.0 41.0 M156.0 47.0 L152.5 52.0 M156.0 47.0 L159.0 52.0" stroke="#1e1a1a" stroke-width="2.4" stroke-linecap="round" fill="none"/><circle cx="105.8" cy="64.8" r="1.8" fill="#d6d0ca"/><path d="M105.8 66.8 L105.8 71.8 M101.8 66.8 L105.8 68.3 L109.8 65.8 M105.8 71.8 L102.3 76.8 M105.8 71.8 L108.8 76.8" stroke="#d6d0ca" stroke-width="2.4" stroke-linecap="round" fill="none"/><circle cx="105.0" cy="64.0" r="1.8" fill="#fafafa"/><path d="M105.0 66.0 L105.0 71.0 M101.0 66.0 L105.0 67.5 L109.0 65.0 M105.0 71.0 L101.5 76.0 M105.0 71.0 L108.0 76.0" stroke="#fafafa" stroke-width="2.4" stroke-linecap="round" fill="none"/><circle cx="116.8" cy="61.8" r="1.8" fill="#d6d0ca"/><path d="M116.8 63.8 L116.8 68.8 M112.8 63.8 L116.8 65.3 L120.8 62.8 M116.8 68.8 L113.3 73.8 M116.8 68.8 L119.8 73.8" stroke="#d6d0ca" stroke-width="2.4" stroke-linecap="round" fill="none"/><circle cx="116.0" cy="61.0" r="1.8" fill="#fafafa"/><path d="M116.0 63.0 L116.0 68.0 M112.0 63.0 L116.0 64.5 L120.0 62.0 M116.0 68.0 L112.5 73.0 M116.0 68.0 L119.0 73.0" stroke="#fafafa" stroke-width="2.4" stroke-linecap="round" fill="none"/><circle cx="127.8" cy="65.8" r="1.8" fill="#d6d0ca"/><path d="M127.8 67.8 L127.8 72.8 M123.8 67.8 L127.8 69.3 L131.8 66.8 M127.8 72.8 L124.3 77.8 M127.8 72.8 L130.8 77.8" stroke="#d6d0ca" stroke-width="2.4" stroke-linecap="round" fill="none"/><circle cx="127.0" cy="65.0" r="1.8" fill="#fafafa"/><path d="M127.0 67.0 L127.0 72.0 M123.0 67.0 L127.0 68.5 L131.0 66.0 M127.0 72.0 L123.5 77.0 M127.0 72.0 L130.0 77.0" stroke="#fafafa" stroke-width="2.4" stroke-linecap="round" fill="none"/><circle cx="137.8" cy="62.8" r="1.8" fill="#d6d0ca"/><path d="M137.8 64.8 L137.8 69.8 M133.8 64.8 L137.8 66.3 L141.8 63.8 M137.8 69.8 L134.3 74.8 M137.8 69.8 L140.8 74.8" stroke="#d6d0ca" stroke-width="2.4" stroke-linecap="round" fill="none"/><circle cx="137.0" cy="62.0" r="1.8" fill="#fafafa"/><path d="M137.0 64.0 L137.0 69.0 M133.0 64.0 L137.0 65.5 L141.0 63.0 M137.0 69.0 L133.5 74.0 M137.0 69.0 L140.0 74.0" stroke="#fafafa" stroke-width="2.4" stroke-linecap="round" fill="none"/><circle cx="147.8" cy="65.8" r="1.8" fill="#d6d0ca"/><path d="M147.8 67.8 L147.8 72.8 M143.8 67.8 L147.8 69.3 L151.8 66.8 M147.8 72.8 L144.3 77.8 M147.8 72.8 L150.8 77.8" stroke="#d6d0ca" stroke-width="2.4" stroke-linecap="round" fill="none"/><circle cx="147.0" cy="65.0" r="1.8" fill="#fafafa"/><path d="M147.0 67.0 L147.0 72.0 M143.0 67.0 L147.0 68.5 L151.0 66.0 M147.0 72.0 L143.5 77.0 M147.0 72.0 L150.0 77.0" stroke="#fafafa" stroke-width="2.4" stroke-linecap="round" fill="none"/><circle cx="157.8" cy="62.8" r="1.8" fill="#d6d0ca"/><path d="M157.8 64.8 L157.8 69.8 M153.8 64.8 L157.8 66.3 L161.8 63.8 M157.8 69.8 L154.3 74.8 M157.8 69.8 L160.8 74.8" stroke="#d6d0ca" stroke-width="2.4" stroke-linecap="round" fill="none"/><circle cx="157.0" cy="62.0" r="1.8" fill="#fafafa"/><path d="M157.0 64.0 L157.0 69.0 M153.0 64.0 L157.0 65.5 L161.0 63.0 M157.0 69.0 L153.5 74.0 M157.0 69.0 L160.0 74.0" stroke="#fafafa" stroke-width="2.4" stroke-linecap="round" fill="none"/><rect x="74.5" y="92.9" width="5" height="1.8" fill="#2a3040" transform="rotate(-25 74.5 92.9)"/><rect x="71.3" y="96.9" width="5" height="1.8" fill="#e0d8d8" transform="rotate(-25 71.3 96.9)"/><rect x="76.0" y="91.4" width="5" height="1.8" fill="#2a3040" transform="rotate(-25 76.0 91.4)"/><rect x="108.3" y="79.4" width="5" height="1.8" fill="#b03030" transform="rotate(-25 108.3 79.4)"/><rect x="73.4" y="87.5" width="5" height="1.8" fill="#e0d8d8" transform="rotate(-25 73.4 87.5)"/><rect x="76.0" y="93.6" width="5" height="1.8" fill="#e0d8d8" transform="rotate(-25 76.0 93.6)"/><rect x="67.3" y="96.9" width="5" height="1.8" fill="#e0d8d8" transform="rotate(-25 67.3 96.9)"/><rect x="69.8" y="93.5" width="5" height="1.8" fill="#e0d8d8" transform="rotate(-25 69.8 93.5)"/><rect x="94.5" y="81.2" width="5" height="1.8" fill="#2a3040" transform="rotate(-25 94.5 81.2)"/><rect x="92.5" y="84.9" width="5" height="1.8" fill="#b03030" transform="rotate(-25 92.5 84.9)"/><rect x="62.5" y="105.9" width="5" height="1.8" fill="#e0d8d8" transform="rotate(-25 62.5 105.9)"/><rect x="61.3" y="101.0" width="5" height="1.8" fill="#e0d8d8" transform="rotate(-25 61.3 101.0)"/><rect x="70.2" y="95.4" width="5" height="1.8" fill="#e0d8d8" transform="rotate(-25 70.2 95.4)"/><rect x="107.0" y="82.2" width="5" height="1.8" fill="#e0d8d8" transform="rotate(-25 107.0 82.2)"/><rect x="105.3" y="72.7" width="5" height="1.8" fill="#c04040" transform="rotate(-25 105.3 72.7)"/><rect x="100.5" y="75.5" width="5" height="1.8" fill="#b03030" transform="rotate(-25 100.5 75.5)"/><rect x="53.5" y="109.0" width="5" height="1.8" fill="#e0d8d8" transform="rotate(-25 53.5 109.0)"/><rect x="88.7" y="89.0" width="5" height="1.8" fill="#e0d8d8" transform="rotate(-25 88.7 89.0)"/><rect x="93.5" y="85.5" width="5" height="1.8" fill="#e0d8d8" transform="rotate(-25 93.5 85.5)"/><rect x="72.3" y="92.9" width="5" height="1.8" fill="#c04040" transform="rotate(-25 72.3 92.9)"/><rect x="89.7" y="83.2" width="5" height="1.8" fill="#e0d8d8" transform="rotate(-25 89.7 83.2)"/><rect x="106.9" y="80.9" width="5" height="1.8" fill="#b03030" transform="rotate(-25 106.9 80.9)"/><rect x="98.4" y="83.2" width="5" height="1.8" fill="#c04040" transform="rotate(-25 98.4 83.2)"/><rect x="66.6" y="99.5" width="5" height="1.8" fill="#c04040" transform="rotate(-25 66.6 99.5)"/><rect x="88.6" y="91.9" width="5" height="1.8" fill="#e0d8d8" transform="rotate(-25 88.6 91.9)"/><rect x="52.7" y="102.5" width="5" height="1.8" fill="#2a3040" transform="rotate(-25 52.7 102.5)"/><rect x="102.8" y="84.2" width="5" height="1.8" fill="#b03030" transform="rotate(-25 102.8 84.2)"/><rect x="80.4" y="95.4" width="5" height="1.8" fill="#c04040" transform="rotate(-25 80.4 95.4)"/><rect x="73.4" y="97.4" width="5" height="1.8" fill="#2a3040" transform="rotate(-25 73.4 97.4)"/><rect x="97.4" y="79.5" width="5" height="1.8" fill="#b03030" transform="rotate(-25 97.4 79.5)"/><path d="M101 100 L106 92 L112 96 L118 89 L126 94 L133 88 L140 93 L148 89 L155 94 L163 90 L165 100 L164 110 L150 114 L138 112 L126 115 L112 112 L102 108 Z" fill="#a01c1c"/><rect x="126.0" y="106.6" width="3.7" height="2.9" fill="#801818" transform="rotate(46 126.0 106.6)"/><rect x="108.4" y="112.3" width="3.9" height="2.7" fill="#801818" transform="rotate(20 108.4 112.3)"/><rect x="143.6" y="93.1" width="4.1" height="2.8" fill="#c02828" transform="rotate(89 143.6 93.1)"/><rect x="162.7" y="108.4" width="3.9" height="2.8" fill="#f0e0e0" transform="rotate(43 162.7 108.4)"/><rect x="108.2" y="107.9" width="3.7" height="2.3" fill="#6a1010" transform="rotate(4 108.2 107.9)"/><rect x="131.6" y="104.3" width="3.1" height="3.2" fill="#d03030" transform="rotate(67 131.6 104.3)"/><rect x="101.7" y="90.7" width="3.3" height="2.3" fill="#c02828" transform="rotate(60 101.7 90.7)"/><rect x="150.9" y="90.9" width="2.9" height="2.2" fill="#f0e0e0" transform="rotate(45 150.9 90.9)"/><rect x="117.2" y="108.6" width="2.3" height="2.3" fill="#6a1010" transform="rotate(33 117.2 108.6)"/><rect x="151.0" y="107.5" width="2.5" height="3.2" fill="#d03030" transform="rotate(53 151.0 107.5)"/><rect x="148.0" y="112.9" width="3.0" height="2.8" fill="#d03030" transform="rotate(31 148.0 112.9)"/><rect x="124.4" y="110.7" width="3.5" height="2.9" fill="#c02828" transform="rotate(60 124.4 110.7)"/><rect x="102.7" y="101.3" width="2.0" height="2.4" fill="#c02828" transform="rotate(4 102.7 101.3)"/><rect x="105.4" y="92.2" width="4.3" height="2.2" fill="#f0e0e0" transform="rotate(81 105.4 92.2)"/><rect x="147.5" y="112.8" width="3.9" height="2.4" fill="#801818" transform="rotate(68 147.5 112.8)"/><rect x="134.2" y="91.5" width="3.1" height="2.8" fill="#801818" transform="rotate(77 134.2 91.5)"/><rect x="129.0" y="92.1" width="2.8" height="2.0" fill="#a82020" transform="rotate(30 129.0 92.1)"/><rect x="129.1" y="111.1" width="4.2" height="1.9" fill="#801818" transform="rotate(39 129.1 111.1)"/><rect x="107.6" y="108.1" width="2.6" height="1.5" fill="#d03030" transform="rotate(71 107.6 108.1)"/><rect x="150.6" y="113.7" width="3.2" height="3.4" fill="#a82020" transform="rotate(66 150.6 113.7)"/><rect x="130.1" y="99.9" width="3.0" height="2.6" fill="#d03030" transform="rotate(11 130.1 99.9)"/><rect x="119.6" y="94.7" width="2.4" height="2.9" fill="#801818" transform="rotate(60 119.6 94.7)"/><rect x="142.9" y="101.0" width="4.1" height="2.0" fill="#a82020" transform="rotate(46 142.9 101.0)"/><rect x="134.6" y="112.1" width="2.4" height="2.9" fill="#801818" transform="rotate(0 134.6 112.1)"/><rect x="125.9" y="91.1" width="2.6" height="3.4" fill="#c02828" transform="rotate(56 125.9 91.1)"/><rect x="140.6" y="100.4" width="2.6" height="2.9" fill="#c02828" transform="rotate(44 140.6 100.4)"/><rect x="147.3" y="111.2" width="4.3" height="3.2" fill="#a82020" transform="rotate(83 147.3 111.2)"/><rect x="104.0" y="101.6" width="3.8" height="2.3" fill="#a82020" transform="rotate(46 104.0 101.6)"/><rect x="129.3" y="102.6" width="3.3" height="3.0" fill="#801818" transform="rotate(33 129.3 102.6)"/><rect x="156.8" y="99.2" width="3.2" height="2.2" fill="#801818" transform="rotate(47 156.8 99.2)"/><rect x="111.9" y="106.6" width="4.3" height="3.4" fill="#f0e0e0" transform="rotate(82 111.9 106.6)"/><rect x="162.8" y="105.3" width="3.9" height="3.0" fill="#f0e0e0" transform="rotate(8 162.8 105.3)"/><rect x="137.4" y="99.9" width="3.5" height="2.4" fill="#801818" transform="rotate(20 137.4 99.9)"/><rect x="115.6" y="108.5" width="2.0" height="2.3" fill="#f0e0e0" transform="rotate(75 115.6 108.5)"/><rect x="116.0" y="97.0" width="2.6" height="2.8" fill="#d03030" transform="rotate(87 116.0 97.0)"/><rect x="156.3" y="92.3" width="2.3" height="2.9" fill="#d03030" transform="rotate(51 156.3 92.3)"/><rect x="109.0" y="97.6" width="2.3" height="2.7" fill="#6a1010" transform="rotate(73 109.0 97.6)"/><rect x="102.5" y="93.5" width="2.8" height="2.4" fill="#f0e0e0" transform="rotate(53 102.5 93.5)"/><rect x="120.9" y="105.0" width="4.1" height="1.9" fill="#6a1010" transform="rotate(3 120.9 105.0)"/><rect x="157.8" y="112.5" width="3.0" height="2.3" fill="#6a1010" transform="rotate(65 157.8 112.5)"/><rect x="104.0" y="95.1" width="2.7" height="2.6" fill="#a82020" transform="rotate(67 104.0 95.1)"/><rect x="163.3" y="101.1" width="2.6" height="1.8" fill="#a82020" transform="rotate(34 163.3 101.1)"/><rect x="162.9" y="93.7" width="3.8" height="3.1" fill="#d03030" transform="rotate(24 162.9 93.7)"/><rect x="119.5" y="101.2" width="3.0" height="3.4" fill="#c02828" transform="rotate(59 119.5 101.2)"/><rect x="102.8" y="103.7" width="2.8" height="3.0" fill="#f0e0e0" transform="rotate(7 102.8 103.7)"/><rect x="110.6" y="112.8" width="2.6" height="1.8" fill="#d03030" transform="rotate(24 110.6 112.8)"/><rect x="120.8" y="93.4" width="4.2" height="2.5" fill="#d03030" transform="rotate(24 120.8 93.4)"/><rect x="142.6" y="95.4" width="3.4" height="2.5" fill="#d03030" transform="rotate(86 142.6 95.4)"/><rect x="117.0" y="102.5" width="2.5" height="2.8" fill="#d03030" transform="rotate(41 117.0 102.5)"/><rect x="119.1" y="92.9" width="3.1" height="1.5" fill="#6a1010" transform="rotate(60 119.1 92.9)"/><rect x="143.9" y="90.9" width="3.6" height="2.1" fill="#f0e0e0" transform="rotate(6 143.9 90.9)"/><rect x="123.8" y="89.3" width="3.1" height="1.9" fill="#c02828" transform="rotate(11 123.8 89.3)"/><rect x="152.3" y="103.5" width="4.2" height="1.6" fill="#6a1010" transform="rotate(82 152.3 103.5)"/><rect x="104.6" y="93.3" width="2.3" height="2.7" fill="#c02828" transform="rotate(21 104.6 93.3)"/><rect x="112.0" y="113.5" width="2.0" height="2.6" fill="#6a1010" transform="rotate(41 112.0 113.5)"/><rect x="162.4" y="90.0" width="4.5" height="1.5" fill="#801818" transform="rotate(77 162.4 90.0)"/><rect x="157.3" y="98.2" width="3.5" height="2.1" fill="#6a1010" transform="rotate(45 157.3 98.2)"/><rect x="116.0" y="105.9" width="3.6" height="3.0" fill="#c02828" transform="rotate(72 116.0 105.9)"/><rect x="149.3" y="104.7" width="3.2" height="2.1" fill="#f0e0e0" transform="rotate(42 149.3 104.7)"/><rect x="160.1" y="97.0" width="2.4" height="2.9" fill="#d03030" transform="rotate(61 160.1 97.0)"/><rect x="104.0" y="98.8" width="2.2" height="2.3" fill="#6a1010" transform="rotate(53 104.0 98.8)"/><rect x="136.2" y="90.1" width="2.2" height="1.9" fill="#6a1010" transform="rotate(59 136.2 90.1)"/><rect x="116.1" y="98.3" width="3.6" height="1.7" fill="#a82020" transform="rotate(16 116.1 98.3)"/><rect x="122.6" y="94.6" width="4.0" height="1.9" fill="#c02828" transform="rotate(60 122.6 94.6)"/><rect x="131.3" y="111.9" width="3.3" height="1.9" fill="#d03030" transform="rotate(71 131.3 111.9)"/><rect x="109.0" y="109.0" width="2.3" height="1.9" fill="#c02828" transform="rotate(56 109.0 109.0)"/><rect x="107.6" y="104.5" width="2.1" height="1.5" fill="#d03030" transform="rotate(31 107.6 104.5)"/><rect x="104.7" y="99.0" width="2.6" height="2.6" fill="#d03030" transform="rotate(71 104.7 99.0)"/><rect x="106.3" y="110.9" width="4.4" height="1.9" fill="#801818" transform="rotate(10 106.3 110.9)"/><rect x="118.5" y="111.4" width="2.1" height="2.8" fill="#c02828" transform="rotate(8 118.5 111.4)"/><rect x="107.1" y="102.7" width="3.6" height="1.7" fill="#6a1010" transform="rotate(32 107.1 102.7)"/><rect x="127.5" y="97.2" width="2.9" height="2.9" fill="#6a1010" transform="rotate(80 127.5 97.2)"/><rect x="152.9" y="100.3" width="3.3" height="3.3" fill="#f0e0e0" transform="rotate(2 152.9 100.3)"/><rect x="140.8" y="90.4" width="4.2" height="2.1" fill="#c02828" transform="rotate(90 140.8 90.4)"/><rect x="133.4" y="91.6" width="3.6" height="1.7" fill="#c02828" transform="rotate(7 133.4 91.6)"/><rect x="109.6" y="105.9" width="3.1" height="3.1" fill="#801818" transform="rotate(74 109.6 105.9)"/><rect x="164.3" y="97.3" width="2.3" height="2.7" fill="#d03030" transform="rotate(65 164.3 97.3)"/><rect x="142.0" y="99.6" width="2.1" height="3.0" fill="#f0e0e0" transform="rotate(4 142.0 99.6)"/><rect x="105.0" y="105.2" width="3.2" height="3.3" fill="#a82020" transform="rotate(7 105.0 105.2)"/><rect x="105.6" y="110.4" width="2.1" height="2.4" fill="#d03030" transform="rotate(22 105.6 110.4)"/><rect x="131.0" y="96.1" width="2.8" height="2.5" fill="#6a1010" transform="rotate(28 131.0 96.1)"/><rect x="128.6" y="97.0" width="4.2" height="2.8" fill="#f0e0e0" transform="rotate(33 128.6 97.0)"/><rect x="140.0" y="98.4" width="2.6" height="3.0" fill="#f0e0e0" transform="rotate(79 140.0 98.4)"/><rect x="104.1" y="105.3" width="3.5" height="3.0" fill="#d03030" transform="rotate(89 104.1 105.3)"/><rect x="114.1" y="113.9" width="3.9" height="2.7" fill="#f0e0e0" transform="rotate(49 114.1 113.9)"/><rect x="140.4" y="101.8" width="3.0" height="2.6" fill="#f0e0e0" transform="rotate(89 140.4 101.8)"/><rect x="159.6" y="104.6" width="4.0" height="2.8" fill="#d03030" transform="rotate(70 159.6 104.6)"/><rect x="154.9" y="104.5" width="2.8" height="2.6" fill="#a82020" transform="rotate(38 154.9 104.5)"/><rect x="146.4" y="112.1" width="2.8" height="2.0" fill="#6a1010" transform="rotate(85 146.4 112.1)"/><rect x="113.7" y="93.5" width="2.3" height="2.7" fill="#f0e0e0" transform="rotate(15 113.7 93.5)"/><rect x="148.8" y="91.6" width="3.3" height="3.4" fill="#f0e0e0" transform="rotate(29 148.8 91.6)"/><rect x="137.1" y="92.9" width="2.4" height="2.4" fill="#6a1010" transform="rotate(74 137.1 92.9)"/><rect x="101.3" y="92.7" width="4.0" height="3.0" fill="#d03030" transform="rotate(57 101.3 92.7)"/><rect x="133.9" y="108.4" width="3.8" height="3.1" fill="#f0e0e0" transform="rotate(66 133.9 108.4)"/><rect x="163.0" y="112.7" width="3.3" height="2.1" fill="#d03030" transform="rotate(44 163.0 112.7)"/><rect x="126.4" y="91.8" width="3.7" height="1.6" fill="#d03030" transform="rotate(62 126.4 91.8)"/><rect x="109.2" y="93.5" width="3.6" height="3.1" fill="#6a1010" transform="rotate(16 109.2 93.5)"/><rect x="102.5" y="95.1" width="4.1" height="3.3" fill="#d03030" transform="rotate(85 102.5 95.1)"/><rect x="106.9" y="94.7" width="2.9" height="3.3" fill="#c02828" transform="rotate(61 106.9 94.7)"/><rect x="131.1" y="107.4" width="2.8" height="3.3" fill="#d03030" transform="rotate(57 131.1 107.4)"/><rect x="113.3" y="101.5" width="2.9" height="1.7" fill="#801818" transform="rotate(2 113.3 101.5)"/><rect x="146.1" y="89.5" width="2.3" height="3.0" fill="#6a1010" transform="rotate(41 146.1 89.5)"/><rect x="145.5" y="108.1" width="4.4" height="1.8" fill="#c02828" transform="rotate(73 145.5 108.1)"/><rect x="152.7" y="90.6" width="3.8" height="2.9" fill="#f0e0e0" transform="rotate(5 152.7 90.6)"/><rect x="104.8" y="93.5" width="2.2" height="1.5" fill="#f0e0e0" transform="rotate(7 104.8 93.5)"/><rect x="148.3" y="100.7" width="3.3" height="3.0" fill="#801818" transform="rotate(68 148.3 100.7)"/><rect x="164.1" y="91.4" width="2.3" height="2.2" fill="#f0e0e0" transform="rotate(7 164.1 91.4)"/><rect x="148.4" y="104.8" width="2.5" height="2.1" fill="#f0e0e0" transform="rotate(15 148.4 104.8)"/><rect x="115.6" y="96.0" width="2.5" height="3.0" fill="#c02828" transform="rotate(14 115.6 96.0)"/><rect x="162.3" y="96.9" width="3.1" height="2.7" fill="#f0e0e0" transform="rotate(76 162.3 96.9)"/><rect x="160.0" y="93.5" width="3.7" height="2.7" fill="#f0e0e0" transform="rotate(71 160.0 93.5)"/><rect x="135.0" y="89.1" width="3.6" height="2.9" fill="#d03030" transform="rotate(30 135.0 89.1)"/><rect x="121.0" y="110.1" width="3.9" height="3.1" fill="#a82020" transform="rotate(87 121.0 110.1)"/><rect x="161.6" y="91.0" width="3.2" height="1.9" fill="#f0e0e0" transform="rotate(1 161.6 91.0)"/><rect x="127.1" y="109.3" width="3.0" height="3.1" fill="#a82020" transform="rotate(9 127.1 109.3)"/><rect x="164.4" y="94.3" width="3.8" height="3.4" fill="#a82020" transform="rotate(47 164.4 94.3)"/><rect x="122.8" y="104.4" width="2.7" height="1.6" fill="#6a1010" transform="rotate(35 122.8 104.4)"/><rect x="144.7" y="113.8" width="2.3" height="2.9" fill="#801818" transform="rotate(53 144.7 113.8)"/><rect x="119.4" y="100.5" width="3.4" height="2.6" fill="#c02828" transform="rotate(32 119.4 100.5)"/><rect x="118.5" y="94.2" width="4.2" height="1.6" fill="#f0e0e0" transform="rotate(49 118.5 94.2)"/><rect x="122.4" y="109.7" width="3.6" height="3.2" fill="#f0e0e0" transform="rotate(22 122.4 109.7)"/><rect x="163.4" y="96.6" width="2.8" height="2.0" fill="#d03030" transform="rotate(63 163.4 96.6)"/><rect x="120.7" y="110.8" width="2.1" height="2.1" fill="#c02828" transform="rotate(67 120.7 110.8)"/><rect x="121.9" y="99.0" width="2.3" height="3.4" fill="#6a1010" transform="rotate(4 121.9 99.0)"/><rect x="133.8" y="112.9" width="4.1" height="1.9" fill="#f0e0e0" transform="rotate(11 133.8 112.9)"/><rect x="159.3" y="103.4" width="4.0" height="3.1" fill="#c02828" transform="rotate(58 159.3 103.4)"/><rect x="115.8" y="94.4" width="3.6" height="3.5" fill="#d03030" transform="rotate(76 115.8 94.4)"/><rect x="152.3" y="99.7" width="3.6" height="2.5" fill="#f0e0e0" transform="rotate(27 152.3 99.7)"/><rect x="126.9" y="90.6" width="2.7" height="1.9" fill="#d03030" transform="rotate(67 126.9 90.6)"/><rect x="134.5" y="91.3" width="4.3" height="1.9" fill="#f0e0e0" transform="rotate(79 134.5 91.3)"/><rect x="120.0" y="100.0" width="3.0" height="2.8" fill="#f0e0e0" transform="rotate(32 120.0 100.0)"/><rect x="105.8" y="106.7" width="3.4" height="3.4" fill="#d03030" transform="rotate(83 105.8 106.7)"/><rect x="104.2" y="97.5" width="3.9" height="3.0" fill="#801818" transform="rotate(84 104.2 97.5)"/><rect x="136.3" y="95.3" width="4.1" height="2.1" fill="#c02828" transform="rotate(47 136.3 95.3)"/><rect x="134.1" y="97.6" width="4.0" height="3.1" fill="#d03030" transform="rotate(1 134.1 97.6)"/><rect x="106.5" y="108.8" width="2.2" height="1.9" fill="#6a1010" transform="rotate(22 106.5 108.8)"/><rect x="153.5" y="102.1" width="2.1" height="2.7" fill="#d03030" transform="rotate(28 153.5 102.1)"/><rect x="133.6" y="100.6" width="3.8" height="1.7" fill="#d03030" transform="rotate(48 133.6 100.6)"/><rect x="109.4" y="111.2" width="3.6" height="1.9" fill="#c02828" transform="rotate(47 109.4 111.2)"/><rect x="133.0" y="101.8" width="3.2" height="3.0" fill="#d03030" transform="rotate(68 133.0 101.8)"/><rect x="112.2" y="92.4" width="2.2" height="1.6" fill="#d03030" transform="rotate(17 112.2 92.4)"/><rect x="122.6" y="95.1" width="3.2" height="1.6" fill="#f0e0e0" transform="rotate(32 122.6 95.1)"/><rect x="123.3" y="98.6" width="2.1" height="2.2" fill="#c02828" transform="rotate(51 123.3 98.6)"/><rect x="128.5" y="108.8" width="2.4" height="3.1" fill="#a82020" transform="rotate(72 128.5 108.8)"/><rect x="125.0" y="98.9" width="4.2" height="2.7" fill="#d03030" transform="rotate(88 125.0 98.9)"/><rect x="149.2" y="99.7" width="3.4" height="2.5" fill="#6a1010" transform="rotate(71 149.2 99.7)"/><rect x="159.7" y="110.0" width="2.6" height="2.3" fill="#d03030" transform="rotate(48 159.7 110.0)"/><rect x="107.5" y="105.1" width="2.0" height="2.3" fill="#a82020" transform="rotate(63 107.5 105.1)"/><rect x="128.1" y="112.4" width="2.6" height="3.3" fill="#801818" transform="rotate(58 128.1 112.4)"/><rect x="102.8" y="104.7" width="3.1" height="2.8" fill="#d03030" transform="rotate(39 102.8 104.7)"/><rect x="128" y="118" width="21" height="19" fill="#7a9e9c"/><rect x="128.00" y="118.00" width="1.72" height="1.56" fill="#2a5454"/><rect x="128.00" y="119.46" width="1.72" height="1.56" fill="#2a5454"/><rect x="128.00" y="122.38" width="1.72" height="1.56" fill="#d2e4e2"/><rect x="128.00" y="123.85" width="1.72" height="1.56" fill="#d2e4e2"/><rect x="128.00" y="126.77" width="1.72" height="1.56" fill="#d2e4e2"/><rect x="128.00" y="128.23" width="1.72" height="1.56" fill="#d2e4e2"/><rect x="128.00" y="131.15" width="1.72" height="1.56" fill="#d2e4e2"/><rect x="128.00" y="134.08" width="1.72" height="1.56" fill="#d2e4e2"/><rect x="128.00" y="135.54" width="1.72" height="1.56" fill="#d2e4e2"/><rect x="129.62" y="119.46" width="1.72" height="1.56" fill="#2a5454"/><rect x="129.62" y="120.92" width="1.72" height="1.56" fill="#d2e4e2"/><rect x="129.62" y="125.31" width="1.72" height="1.56" fill="#2a5454"/><rect x="129.62" y="126.77" width="1.72" height="1.56" fill="#2a5454"/><rect x="129.62" y="129.69" width="1.72" height="1.56" fill="#d2e4e2"/><rect x="129.62" y="132.62" width="1.72" height="1.56" fill="#2a5454"/><rect x="129.62" y="134.08" width="1.72" height="1.56" fill="#d2e4e2"/><rect x="129.62" y="135.54" width="1.72" height="1.56" fill="#2a5454"/><rect x="131.23" y="118.00" width="1.72" height="1.56" fill="#d2e4e2"/><rect x="131.23" y="119.46" width="1.72" height="1.56" fill="#2a5454"/><rect x="131.23" y="120.92" width="1.72" height="1.56" fill="#2a5454"/><rect x="131.23" y="122.38" width="1.72" height="1.56" fill="#2a5454"/><rect x="131.23" y="123.85" width="1.72" height="1.56" fill="#d2e4e2"/><rect x="131.23" y="125.31" width="1.72" height="1.56" fill="#d2e4e2"/><rect x="131.23" y="126.77" width="1.72" height="1.56" fill="#d2e4e2"/><rect x="131.23" y="128.23" width="1.72" height="1.56" fill="#2a5454"/><rect x="131.23" y="132.62" width="1.72" height="1.56" fill="#2a5454"/><rect x="131.23" y="134.08" width="1.72" height="1.56" fill="#d2e4e2"/><rect x="131.23" y="135.54" width="1.72" height="1.56" fill="#2a5454"/><rect x="132.85" y="118.00" width="1.72" height="1.56" fill="#d2e4e2"/><rect x="132.85" y="120.92" width="1.72" height="1.56" fill="#d2e4e2"/><rect x="132.85" y="123.85" width="1.72" height="1.56" fill="#d2e4e2"/><rect x="132.85" y="126.77" width="1.72" height="1.56" fill="#d2e4e2"/><rect x="132.85" y="128.23" width="1.72" height="1.56" fill="#2a5454"/><rect x="132.85" y="129.69" width="1.72" height="1.56" fill="#d2e4e2"/><rect x="132.85" y="131.15" width="1.72" height="1.56" fill="#d2e4e2"/><rect x="132.85" y="132.62" width="1.72" height="1.56" fill="#d2e4e2"/><rect x="132.85" y="135.54" width="1.72" height="1.56" fill="#d2e4e2"/><rect x="134.46" y="118.00" width="1.72" height="1.56" fill="#d2e4e2"/><rect x="134.46" y="120.92" width="1.72" height="1.56" fill="#d2e4e2"/><rect x="134.46" y="122.38" width="1.72" height="1.56" fill="#d2e4e2"/><rect x="134.46" y="123.85" width="1.72" height="1.56" fill="#2a5454"/><rect x="134.46" y="125.31" width="1.72" height="1.56" fill="#2a5454"/><rect x="134.46" y="126.77" width="1.72" height="1.56" fill="#d2e4e2"/><rect x="134.46" y="129.69" width="1.72" height="1.56" fill="#d2e4e2"/><rect x="134.46" y="131.15" width="1.72" height="1.56" fill="#d2e4e2"/><rect x="134.46" y="132.62" width="1.72" height="1.56" fill="#d2e4e2"/><rect x="134.46" y="134.08" width="1.72" height="1.56" fill="#d2e4e2"/><rect x="134.46" y="135.54" width="1.72" height="1.56" fill="#d2e4e2"/><rect x="136.08" y="118.00" width="1.72" height="1.56" fill="#d2e4e2"/><rect x="136.08" y="119.46" width="1.72" height="1.56" fill="#d2e4e2"/><rect x="136.08" y="120.92" width="1.72" height="1.56" fill="#2a5454"/><rect x="136.08" y="122.38" width="1.72" height="1.56" fill="#2a5454"/><rect x="136.08" y="123.85" width="1.72" height="1.56" fill="#d2e4e2"/><rect x="136.08" y="125.31" width="1.72" height="1.56" fill="#d2e4e2"/><rect x="136.08" y="126.77" width="1.72" height="1.56" fill="#2a5454"/><rect x="136.08" y="128.23" width="1.72" height="1.56" fill="#2a5454"/><rect x="136.08" y="131.15" width="1.72" height="1.56" fill="#d2e4e2"/><rect x="136.08" y="134.08" width="1.72" height="1.56" fill="#2a5454"/><rect x="137.69" y="118.00" width="1.72" height="1.56" fill="#2a5454"/><rect x="137.69" y="119.46" width="1.72" height="1.56" fill="#d2e4e2"/><rect x="137.69" y="120.92" width="1.72" height="1.56" fill="#d2e4e2"/><rect x="137.69" y="123.85" width="1.72" height="1.56" fill="#d2e4e2"/><rect x="137.69" y="125.31" width="1.72" height="1.56" fill="#2a5454"/><rect x="137.69" y="126.77" width="1.72" height="1.56" fill="#d2e4e2"/><rect x="137.69" y="128.23" width="1.72" height="1.56" fill="#2a5454"/><rect x="137.69" y="129.69" width="1.72" height="1.56" fill="#d2e4e2"/><rect x="137.69" y="131.15" width="1.72" height="1.56" fill="#d2e4e2"/><rect x="137.69" y="132.62" width="1.72" height="1.56" fill="#d2e4e2"/><rect x="139.31" y="118.00" width="1.72" height="1.56" fill="#2a5454"/><rect x="139.31" y="119.46" width="1.72" height="1.56" fill="#2a5454"/><rect x="139.31" y="120.92" width="1.72" height="1.56" fill="#d2e4e2"/><rect x="139.31" y="122.38" width="1.72" height="1.56" fill="#d2e4e2"/><rect x="139.31" y="125.31" width="1.72" height="1.56" fill="#d2e4e2"/><rect x="139.31" y="126.77" width="1.72" height="1.56" fill="#d2e4e2"/><rect x="139.31" y="129.69" width="1.72" height="1.56" fill="#d2e4e2"/><rect x="139.31" y="132.62" width="1.72" height="1.56" fill="#d2e4e2"/><rect x="139.31" y="135.54" width="1.72" height="1.56" fill="#d2e4e2"/><rect x="140.92" y="118.00" width="1.72" height="1.56" fill="#d2e4e2"/><rect x="140.92" y="119.46" width="1.72" height="1.56" fill="#d2e4e2"/><rect x="140.92" y="122.38" width="1.72" height="1.56" fill="#d2e4e2"/><rect x="140.92" y="123.85" width="1.72" height="1.56" fill="#2a5454"/><rect x="140.92" y="126.77" width="1.72" height="1.56" fill="#d2e4e2"/><rect x="140.92" y="128.23" width="1.72" height="1.56" fill="#d2e4e2"/><rect x="140.92" y="129.69" width="1.72" height="1.56" fill="#d2e4e2"/><rect x="140.92" y="131.15" width="1.72" height="1.56" fill="#d2e4e2"/><rect x="140.92" y="134.08" width="1.72" height="1.56" fill="#d2e4e2"/><rect x="140.92" y="135.54" width="1.72" height="1.56" fill="#d2e4e2"/><rect x="142.54" y="118.00" width="1.72" height="1.56" fill="#d2e4e2"/><rect x="142.54" y="120.92" width="1.72" height="1.56" fill="#d2e4e2"/><rect x="142.54" y="122.38" width="1.72" height="1.56" fill="#2a5454"/><rect x="142.54" y="125.31" width="1.72" height="1.56" fill="#2a5454"/><rect x="142.54" y="128.23" width="1.72" height="1.56" fill="#d2e4e2"/><rect x="142.54" y="129.69" width="1.72" height="1.56" fill="#2a5454"/><rect x="142.54" y="131.15" width="1.72" height="1.56" fill="#2a5454"/><rect x="142.54" y="132.62" width="1.72" height="1.56" fill="#d2e4e2"/><rect x="142.54" y="134.08" width="1.72" height="1.56" fill="#d2e4e2"/><rect x="142.54" y="135.54" width="1.72" height="1.56" fill="#d2e4e2"/><rect x="144.15" y="118.00" width="1.72" height="1.56" fill="#d2e4e2"/><rect x="144.15" y="119.46" width="1.72" height="1.56" fill="#d2e4e2"/><rect x="144.15" y="120.92" width="1.72" height="1.56" fill="#d2e4e2"/><rect x="144.15" y="123.85" width="1.72" height="1.56" fill="#d2e4e2"/><rect x="144.15" y="125.31" width="1.72" height="1.56" fill="#2a5454"/><rect x="144.15" y="126.77" width="1.72" height="1.56" fill="#2a5454"/><rect x="144.15" y="128.23" width="1.72" height="1.56" fill="#d2e4e2"/><rect x="144.15" y="132.62" width="1.72" height="1.56" fill="#2a5454"/><rect x="144.15" y="134.08" width="1.72" height="1.56" fill="#2a5454"/><rect x="145.77" y="118.00" width="1.72" height="1.56" fill="#2a5454"/><rect x="145.77" y="119.46" width="1.72" height="1.56" fill="#d2e4e2"/><rect x="145.77" y="122.38" width="1.72" height="1.56" fill="#d2e4e2"/><rect x="145.77" y="123.85" width="1.72" height="1.56" fill="#2a5454"/><rect x="145.77" y="125.31" width="1.72" height="1.56" fill="#2a5454"/><rect x="145.77" y="128.23" width="1.72" height="1.56" fill="#d2e4e2"/><rect x="145.77" y="129.69" width="1.72" height="1.56" fill="#2a5454"/><rect x="145.77" y="131.15" width="1.72" height="1.56" fill="#d2e4e2"/><rect x="145.77" y="132.62" width="1.72" height="1.56" fill="#2a5454"/><rect x="145.77" y="134.08" width="1.72" height="1.56" fill="#d2e4e2"/><rect x="145.77" y="135.54" width="1.72" height="1.56" fill="#d2e4e2"/><rect x="147.38" y="118.00" width="1.72" height="1.56" fill="#2a5454"/><rect x="147.38" y="119.46" width="1.72" height="1.56" fill="#2a5454"/><rect x="147.38" y="123.85" width="1.72" height="1.56" fill="#d2e4e2"/><rect x="147.38" y="125.31" width="1.72" height="1.56" fill="#d2e4e2"/><rect x="147.38" y="126.77" width="1.72" height="1.56" fill="#2a5454"/><rect x="147.38" y="128.23" width="1.72" height="1.56" fill="#2a5454"/><rect x="147.38" y="129.69" width="1.72" height="1.56" fill="#2a5454"/><rect x="147.38" y="131.15" width="1.72" height="1.56" fill="#d2e4e2"/><rect x="147.38" y="134.08" width="1.72" height="1.56" fill="#d2e4e2"/><rect x="128.00" y="118.00" width="4.85" height="4.38" fill="#2a5050"/><rect x="129.62" y="119.46" width="1.62" height="1.46" fill="#0e2e2e"/><rect x="144.15" y="118.00" width="4.85" height="4.38" fill="#2a5050"/><rect x="145.77" y="119.46" width="1.62" height="1.46" fill="#0e2e2e"/><rect x="128.00" y="132.62" width="4.85" height="4.38" fill="#2a5050"/><rect x="129.62" y="134.08" width="1.62" height="1.46" fill="#0e2e2e"/></svg><div style="left:2px;top:144px;width:16px;height:16px;background:linear-gradient(135deg,#e6f6f6,#c6eeee)"><svg style="left:0;top:0" width="16" height="16" viewBox="0 0 16 16">
<path d="M3.5 2.5 L10 2.5 L14.5 8 L10 13.5 L3.5 13.5 L6.5 10.5 L4 8 L6.5 5.5 Z" fill="#1a9e9e"/>
<path d="M8 2.5 L10 2.5 L14.5 8 L10 13.5 L8 13.5 L11 8 Z" fill="#0b6f72"/>
<path d="M3.5 2.5 L6.5 5.5 L9 5.5 L7 2.5 Z" fill="#2fc0bd"/>
</svg></div><div style="left:-1px;top:162px;width:171px;height:18px;background:#9c9c9c;border-left:1px solid #a3a3a3;border-right:1px solid #a3a3a3"></div><div class="m" style="left:0;top:164.5px;width:169px;text-align:center;color:#fff;line-height:12px;font-size:11px;letter-spacing:-0.6px">27.max</div></div>
<svg style="left:0;top:0" width="950" height="792" viewBox="0 0 950 792"><g fill="none" stroke="rgba(0,0,0,0.3)" stroke-width="2" stroke-linejoin="round"><path d="M342 330 L389 306 L400 302 L406 315 L404 320 L346 348 Z"/><path d="M344 336 L388 312 L403 313"/><path d="M388 308 L370 370 M402 314 L387 369 M382 318 L373 370"/><path d="M337 370 L421 370 L421 388 L337 388 Z M337 381 L421 381 M350 388 L370 393 L421 388"/></g><g fill="none" stroke="rgba(255,255,255,0.25)" stroke-width="2" stroke-linejoin="round"><path d="M341 428 L381 404 L383 420 L345 441 Z M343 434 L381 412"/><path d="M379 410 L368 463 M383 422 L373 463"/><path d="M334 463 L421 463 L421 481 L334 482 Z M334 476 L421 476 M350 482 L369 486 L421 481"/></g><g opacity="0.33"><text x="421" y="348" font-family="Liberation Sans" font-weight="bold" font-size="41" fill="#000" stroke="#000" stroke-width="1.2" letter-spacing="6.2">TZ素材网</text></g><text x="468" y="380" font-family="Liberation Sans" font-weight="bold" font-size="14.5" fill="rgba(0,0,0,0.33)" letter-spacing="4.6">TZSUCAI.COM</text><text x="462" y="450" font-family="Liberation Sans" font-weight="bold" font-size="48" fill="rgba(255,255,255,0.13)" letter-spacing="4">素材</text></svg>
<div style="left:188px;top:713px;width:750px;height:15px;background:#474747;border-top:1px solid #262626;border-bottom:1px solid #333"></div>
<div class="t" style="left:188px;top:713px;width:750px;height:15px;color:#e0e0e0;font-size:12px;line-height:15px;text-align:center">信息</div>
<svg style="left:927px;top:718px" width="8" height="4" viewBox="0 0 8 4"><path d="M0 4 A4 4 0 0 1 8 4 Z" fill="#8a8a8a"/></svg>
<div style="left:188px;top:728px;width:750px;height:15px;background:#474747;border-top:1px solid #262626;border-bottom:1px solid #333"></div>
<div class="t" style="left:188px;top:728px;width:750px;height:15px;color:#e0e0e0;font-size:12px;line-height:15px;text-align:center">放置选项</div>
<svg style="left:927px;top:733px" width="8" height="4" viewBox="0 0 8 4"><path d="M0 4 A4 4 0 0 1 8 4 Z" fill="#8a8a8a"/></svg>
<div style="left:188px;top:743px;width:750px;height:15px;background:#474747;border-top:1px solid #262626;border-bottom:1px solid #333"></div>
<div class="t" style="left:188px;top:743px;width:750px;height:15px;color:#e0e0e0;font-size:12px;line-height:15px;text-align:center">设置</div>
<svg style="left:927px;top:748px" width="8" height="4" viewBox="0 0 8 4"><path d="M0 4 A4 4 0 0 1 8 4 Z" fill="#8a8a8a"/></svg>
<svg style="left:16px;top:768px" width="14" height="14" viewBox="0 0 14 14"><path d="M7 0 L8.7 5 L14 5.1 L9.8 8.3 L11.3 13.5 L7 10.4 L2.7 13.5 L4.2 8.3 L0 5.1 L5.3 5 Z" fill="#e6e6e6"/></svg>
<div class="t" style="left:175px;top:765px;width:560px;height:18px;color:#dcdcdc;font-size:13px;line-height:18px">Name: 47.max | Type: 3dsMax scene file | Size: 1.19 MB | Modified: 2019\9\10 星期二 11:43:54</div>
<div style="left:866px;top:769px;width:9px;height:9px;background:#3cb6e8;border-radius:50%"></div>
<div class="t" style="left:881px;top:765px;width:60px;height:18px;color:#e6e6e6;font-size:12.4px;line-height:18px">13.16 GB</div>
</body></html>
